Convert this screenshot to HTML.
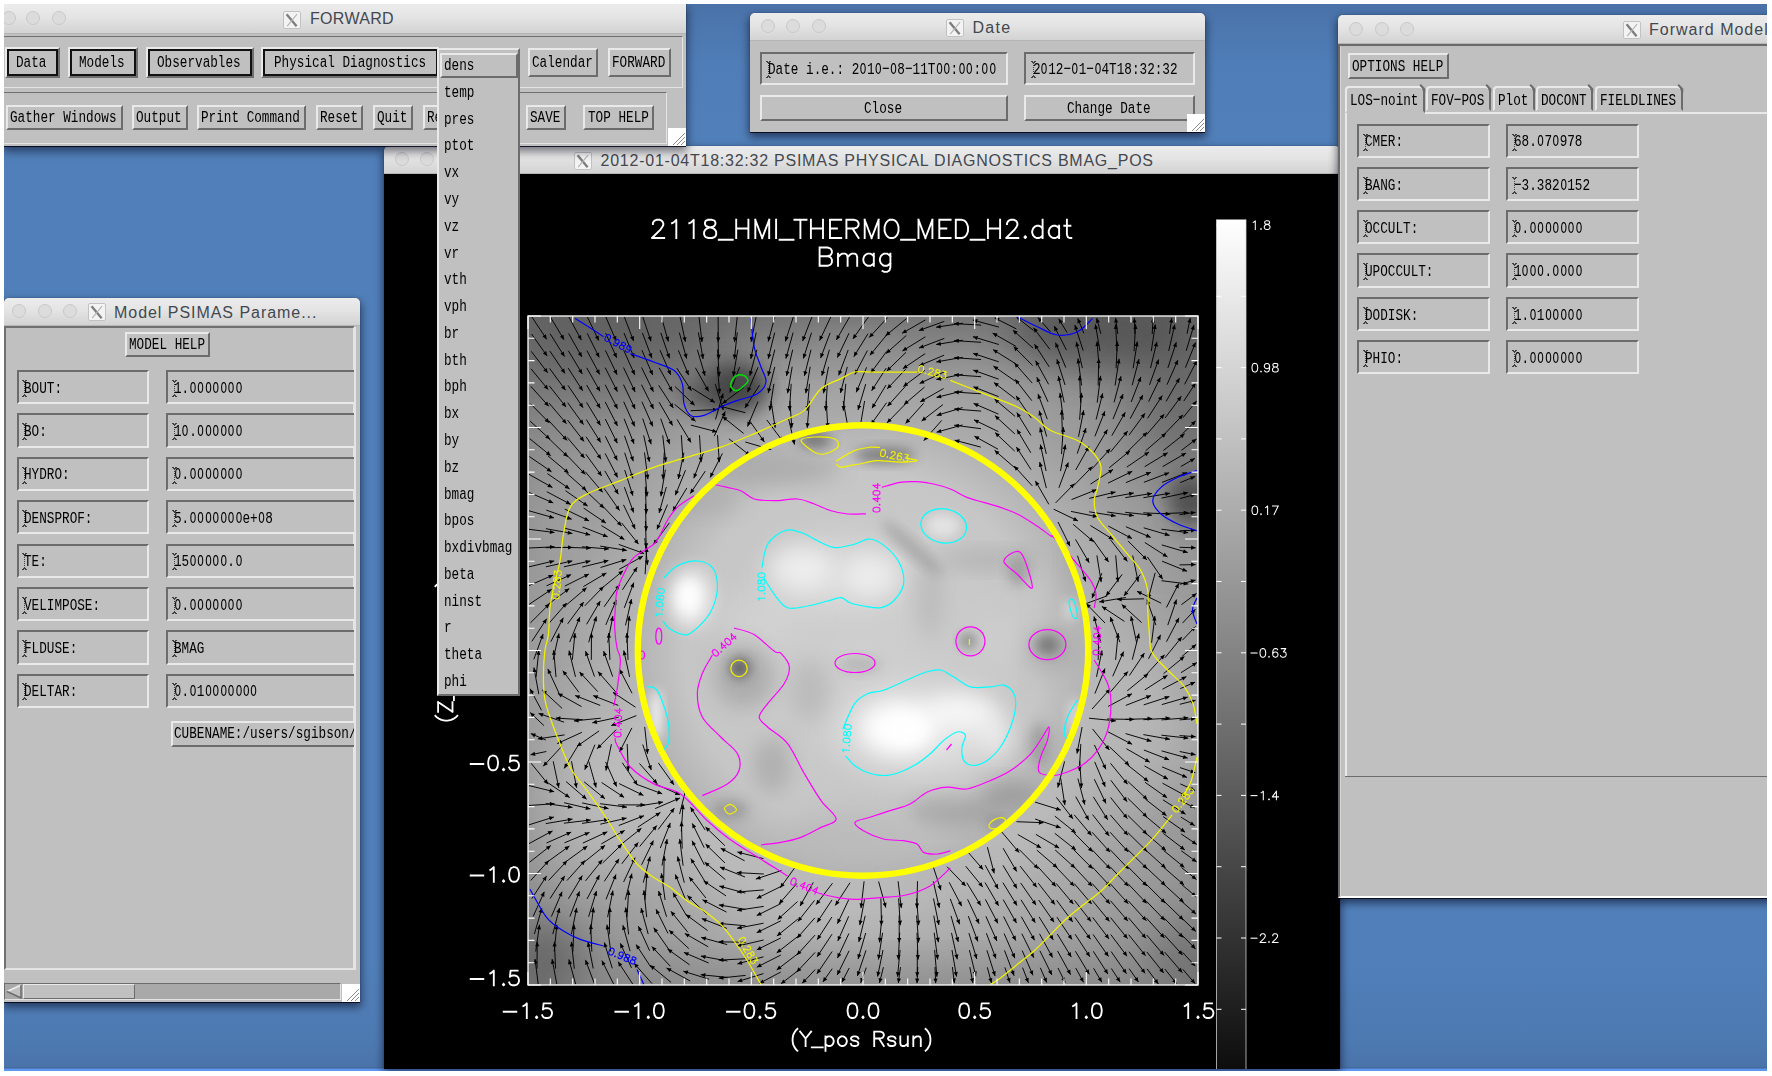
<!DOCTYPE html>
<html><head><meta charset="utf-8"><title>FORWARD</title>
<style>
*{box-sizing:border-box;margin:0;padding:0}
html,body{width:1772px;height:1076px;overflow:hidden;background:#fff}
#desk{position:absolute;left:4px;top:4px;width:1763px;height:1067px;overflow:hidden;
 background:linear-gradient(#4a72a9 0px,#4f7db7 60px,#517fb9 120px,#517fb9 960px,#4d79b1 1040px,#4a73a9 1063px,#3f6297 1064px,#5e98ee 1065px,#5e98ee 1067px);}
.win{position:absolute;background:#c0c0c0;box-shadow:0 1px 0 rgba(0,0,20,.8),0 4px 9px 1px rgba(0,0,20,.55),0 0 1px rgba(0,0,0,.6)}
.tb{position:absolute;left:0;top:0;background:linear-gradient(#ececec,#e4e4e4 45%,#d3d3d3);border-bottom:1px solid #b5b5b5}
.circ{position:absolute;width:14px;height:14px;border-radius:50%;background:#dcdcdc;border:1px solid #c9c9c9}
.xi{position:absolute}
.tt{position:absolute;top:0;font:16px "Liberation Sans",sans-serif;color:#434850;white-space:pre}
.t{position:absolute;font:17.4px/19px "Liberation Mono",monospace;color:#000;white-space:pre;display:inline-block;transform:scaleX(.729);transform-origin:0 50%}
.z{display:inline-block;transform:scaleX(.86)}
.btn,.fld,.mbtn,.frm,.frm2{position:absolute;background:#c0c0c0;border:2px solid}
.btn{border-color:#e9e9e9 #6c6c6c #6c6c6c #e9e9e9}
.fld{border-color:#6c6c6c #e9e9e9 #e9e9e9 #6c6c6c}
.mbtn{border-color:#e9e9e9 #707070 #707070 #e9e9e9;box-shadow:inset 0 0 0 2px #111}
.frm{border-color:#707070 #e4e4e4 #e4e4e4 #707070;border-width:1.5px}
.cur{position:absolute;width:5px;height:17px;opacity:.8;background:
 repeating-linear-gradient(#222 0 1px,transparent 1px 2px) 2px 2px/1px 13px no-repeat,
 linear-gradient(#222,#222) 0 0/2px 1px no-repeat,linear-gradient(#222,#222) 3px 0/2px 1px no-repeat,
 linear-gradient(#222,#222) 1px 1px/3px 1px no-repeat,
 linear-gradient(#222,#222) 1px 15px/3px 1px no-repeat,
 linear-gradient(#222,#222) 0 16px/2px 1px no-repeat,linear-gradient(#222,#222) 3px 16px/2px 1px no-repeat}
.tab{position:absolute;background:#c0c0c0;border:2px solid;border-color:#e9e9e9 #6c6c6c transparent #e9e9e9;border-radius:4px 6px 0 0}
.tab.sel{border-bottom-color:#c0c0c0;z-index:3}
</style></head><body><div id="desk">
<div class="win" style="left:380.0px;top:142.0px;width:956.0px;height:922.4px;border-radius:5px 5px 0 0"><div class="tb" style="width:956px;height:28px;border-radius:5px 5px 0 0"><span class="circ" style="left:10.5px;top:6.4px"></span><span class="circ" style="left:36.0px;top:6.4px"></span><span class="circ" style="left:61.5px;top:6.4px"></span><svg class="xi" style="left:190.0px;top:5.5px" width="18" height="18" viewBox="0 0 18 18"><rect x="0.5" y="0.5" width="17" height="17" rx="1.5" fill="#f3f3f3" stroke="#c2c2c2"/><path d="M3.6 3.2L13.6 15.2" stroke="#7d7d7d" stroke-width="2.3" fill="none"/><path d="M14 3.2L4.2 15.2" stroke="#b4b4b4" stroke-width="1.1" fill="none"/></svg><span class="tt" style="left:216.5px;line-height:29px;letter-spacing:0.76px">2012-01-04T18:32:32 PSIMAS PHYSICAL DIAGNOSTICS BMAG_POS</span></div><div style="position:absolute;left:0;top:28px;width:956px;height:895px;background:#000;overflow:hidden"><svg style="position:absolute;left:0;top:0" width="954" height="895" viewBox="384 174 954 895" font-family="Liberation Sans, sans-serif"><defs><filter id="b6" x="-50%" y="-50%" width="200%" height="200%"><feGaussianBlur stdDeviation="6"/></filter><filter id="b10" x="-50%" y="-50%" width="200%" height="200%"><feGaussianBlur stdDeviation="10"/></filter><filter id="b18" x="-50%" y="-50%" width="200%" height="200%"><feGaussianBlur stdDeviation="18"/></filter><filter id="b30" x="-50%" y="-50%" width="200%" height="200%"><feGaussianBlur stdDeviation="30"/></filter><radialGradient id="bg" gradientUnits="userSpaceOnUse" cx="863.0" cy="690.5" r="520"><stop offset="0.42" stop-color="#bababa"/><stop offset="0.6" stop-color="#a0a0a0"/><stop offset="0.8" stop-color="#8a8a8a"/><stop offset="1" stop-color="#6c6c6c"/></radialGradient><radialGradient id="dk" gradientUnits="userSpaceOnUse" cx="863.0" cy="650.5" r="223.2"><stop offset="0" stop-color="#cfcfcf"/><stop offset="0.8" stop-color="#c6c6c6"/><stop offset="1" stop-color="#b4b4b4"/></radialGradient><clipPath id="cpl"><rect x="528.0" y="316.0" width="670.0" height="669.0"/></clipPath><clipPath id="cdk"><circle cx="863.0" cy="650.5" r="223.2"/></clipPath><linearGradient id="cb" x1="0" y1="0" x2="0" y2="1"><stop offset="0" stop-color="#fff"/><stop offset="1" stop-color="#0a0a0a"/></linearGradient></defs><g clip-path="url(#cpl)"><rect x="528.0" y="316.0" width="670.0" height="669.0" fill="url(#bg)"/><ellipse cx="735" cy="388" rx="34" ry="26" fill="#3c3c3c" opacity="0.9" filter="url(#b10)"/><ellipse cx="700" cy="395" rx="22" ry="16" fill="#484848" opacity="0.6" filter="url(#b10)"/><ellipse cx="1190" cy="500" rx="22" ry="26" fill="#404040" opacity="0.8" filter="url(#b10)"/><ellipse cx="1100" cy="335" rx="90" ry="36" fill="#484848" opacity="0.65" filter="url(#b18)"/><ellipse cx="620" cy="350" rx="110" ry="50" fill="#505050" opacity="0.55" filter="url(#b30)"/><ellipse cx="863" cy="300" rx="380" ry="40" fill="#484848" opacity="0.5" filter="url(#b30)"/><ellipse cx="1180" cy="400" rx="50" ry="80" fill="#505050" opacity="0.5" filter="url(#b30)"/><ellipse cx="545" cy="960" rx="40" ry="40" fill="#4c4c4c" opacity="0.5" filter="url(#b18)"/><ellipse cx="600" cy="800" rx="55" ry="80" fill="#c8c8c8" opacity="0.6" filter="url(#b30)"/><ellipse cx="1150" cy="720" rx="50" ry="70" fill="#c4c4c4" opacity="0.55" filter="url(#b30)"/><ellipse cx="1000" cy="920" rx="90" ry="50" fill="#a8a8a8" opacity="0.4" filter="url(#b30)"/><ellipse cx="560" cy="520" rx="30" ry="60" fill="#a4a4a4" opacity="0.4" filter="url(#b18)"/><ellipse cx="1190" cy="960" rx="40" ry="40" fill="#5a5a5a" opacity="0.4" filter="url(#b18)"/><ellipse cx="860" cy="350" rx="50" ry="22" fill="#9a9a9a" opacity="0.3" filter="url(#b18)"/><ellipse cx="863" cy="1000" rx="300" ry="30" fill="#606060" opacity="0.4" filter="url(#b30)"/></g><g clip-path="url(#cdk)"><circle cx="863.0" cy="650.5" r="225.2" fill="url(#dk)"/><ellipse cx="690" cy="598" rx="20" ry="28" fill="#fff" opacity="0.9" filter="url(#b10)"/><ellipse cx="688" cy="596" rx="10" ry="14" fill="#fff" opacity="0.8" filter="url(#b6)"/><ellipse cx="800" cy="568" rx="30" ry="22" fill="#fff" opacity="0.5" filter="url(#b10)"/><ellipse cx="872" cy="575" rx="26" ry="22" fill="#fff" opacity="0.45" filter="url(#b10)"/><ellipse cx="835" cy="575" rx="70" ry="28" fill="#fff" opacity="0.4" filter="url(#b18)"/><ellipse cx="943" cy="526" rx="17" ry="12" fill="#fff" opacity="0.5" filter="url(#b6)"/><ellipse cx="900" cy="728" rx="38" ry="26" fill="#fff" opacity="0.95" filter="url(#b10)"/><ellipse cx="905" cy="730" rx="20" ry="14" fill="#fff" opacity="0.8" filter="url(#b6)"/><ellipse cx="960" cy="712" rx="36" ry="18" fill="#fff" opacity="0.7" filter="url(#b10)"/><ellipse cx="995" cy="735" rx="14" ry="22" fill="#fff" opacity="0.5" filter="url(#b10)"/><ellipse cx="920" cy="730" rx="85" ry="42" fill="#fff" opacity="0.45" filter="url(#b18)"/><ellipse cx="656" cy="715" rx="6" ry="26" fill="#fff" opacity="0.85" filter="url(#b6)"/><ellipse cx="1070" cy="610" rx="6" ry="11" fill="#fff" opacity="0.5" filter="url(#b6)"/><ellipse cx="1075" cy="718" rx="7" ry="20" fill="#fff" opacity="0.5" filter="url(#b6)"/><ellipse cx="760" cy="620" rx="40" ry="25" fill="#ddd" opacity="0.5" filter="url(#b18)"/><ellipse cx="1000" cy="640" rx="25" ry="30" fill="#d8d8d8" opacity="0.4" filter="url(#b18)"/><ellipse cx="744" cy="676" rx="30" ry="32" fill="#8c8c8c" opacity="0.45" filter="url(#b10)"/><ellipse cx="1050" cy="650" rx="26" ry="24" fill="#999" opacity="0.4" filter="url(#b10)"/><ellipse cx="1075" cy="560" rx="12" ry="40" fill="#a0a0a0" opacity="0.45" filter="url(#b10)"/><ellipse cx="740" cy="668" rx="10" ry="10" fill="#555" opacity="0.9" filter="url(#b6)"/><ellipse cx="968" cy="641" rx="8" ry="8" fill="#777" opacity="0.8" filter="url(#b6)"/><ellipse cx="1048" cy="645" rx="12" ry="10" fill="#707070" opacity="0.85" filter="url(#b6)"/><ellipse cx="815" cy="440" rx="16" ry="9" fill="#6a6a6a" opacity="0.8" filter="url(#b6)"/><ellipse cx="885" cy="455" rx="30" ry="8" fill="#707070" opacity="0.8" filter="url(#b6)"/><ellipse cx="1018" cy="570" rx="10" ry="16" fill="#909090" opacity="0.7" filter="url(#b6)"/><ellipse cx="955" cy="812" rx="48" ry="14" fill="#909090" opacity="0.55" filter="url(#b10)"/><ellipse cx="1010" cy="795" rx="30" ry="14" fill="#8a8a8a" opacity="0.6" filter="url(#b10)"/><ellipse cx="772" cy="765" rx="18" ry="28" fill="#989898" opacity="0.5" filter="url(#b10)"/><ellipse cx="730" cy="810" rx="18" ry="10" fill="#888" opacity="0.6" filter="url(#b6)"/><ellipse cx="780" cy="470" rx="60" ry="14" fill="#a4a4a4" opacity="0.7" filter="url(#b10)"/><ellipse cx="990" cy="560" rx="50" ry="10" fill="#a0a0a0" opacity="0.5" filter="url(#b10)"/><ellipse cx="700" cy="500" rx="40" ry="14" fill="#a8a8a8" opacity="0.5" filter="url(#b10)"/><ellipse cx="1040" cy="745" rx="10" ry="22" fill="#8c8c8c" opacity="0.6" filter="url(#b6)"/><ellipse cx="860" cy="665" rx="22" ry="8" fill="#a0a0a0" opacity="0.5" filter="url(#b6)"/><ellipse cx="997" cy="823" rx="10" ry="6" fill="#808080" opacity="0.7" filter="url(#b6)"/><ellipse cx="810" cy="690" rx="20" ry="30" fill="#a8a8a8" opacity="0.45" filter="url(#b10)"/><ellipse cx="930" cy="600" rx="14" ry="40" fill="#a8a8a8" opacity="0.4" filter="url(#b10)"/><ellipse cx="850" cy="830" rx="60" ry="20" fill="#b0b0b0" opacity="0.4" filter="url(#b10)"/><ellipse cx="912" cy="548" rx="40" ry="7" transform="rotate(42 912 548)" fill="#8e8e8e" opacity=".55" filter="url(#b6)"/><ellipse cx="700" cy="470" rx="60" ry="9" transform="rotate(-28 700 470)" fill="#9c9c9c" opacity=".5" filter="url(#b6)"/></g><g clip-path="url(#cpl)"><path d="M531.9 317.0L546.7 339.3M550.4 317.0L564.0 339.7M568.9 317.0L581.4 340.1M587.4 317.0L598.7 340.5M605.9 317.0L616.1 340.8M624.4 317.0L633.6 341.1M642.8 317.0L651.0 341.3M661.4 317.0L668.3 341.5M680.1 317.0L685.4 341.8M699.0 317.0L702.0 342.0M718.1 317.0L718.3 342.1M737.2 317.0L734.5 342.0M756.1 317.0L751.1 341.8M774.8 317.0L768.2 341.6M793.3 317.0L785.4 341.4M811.9 317.0L802.6 341.0M830.7 317.0L819.6 340.6M849.5 317.0L836.4 339.9M868.4 317.0L852.9 338.9M887.5 317.6L869.2 337.5M906.5 318.6L885.6 335.7M925.5 319.9L902.1 333.3M944.3 321.4L918.9 330.5M962.9 323.2L936.2 327.2M981.1 325.1L954.1 323.6M998.9 327.1L972.8 320.0M1016.3 328.9L994.6 317.8M1033.4 330.4L1016.5 317.0M1050.3 331.7L1037.9 317.4M1067.1 332.6L1058.7 318.8M1083.9 333.3L1077.7 318.3M1100.8 333.7L1096.7 318.1M1117.8 333.9L1115.6 317.9M1134.9 334.0L1134.4 317.8M1152.2 334.0L1153.1 317.8M1169.5 333.9L1171.8 317.9M1187.0 333.8L1190.3 318.0M531.6 334.0L547.2 356.1M550.1 333.7L564.5 356.6M568.6 333.5L581.9 357.0M587.2 333.3L599.2 357.4M605.6 333.1L616.7 357.7M624.0 333.0L634.2 358.0M642.4 332.9L651.9 358.2M660.8 332.8L669.5 358.3M679.3 332.6L686.7 358.6M698.4 332.4L703.1 359.0M717.8 332.3L718.7 359.3M737.3 332.3L734.3 359.2M756.2 332.5L750.8 358.9M774.7 332.6L768.2 358.8M793.1 332.6L785.9 358.6M811.5 332.7L803.4 358.5M830.1 332.9L820.6 358.1M849.0 333.2L837.4 357.6M868.0 333.7L853.8 356.7M887.1 334.4L869.9 355.3M906.3 335.5L886.1 353.4M925.4 336.8L902.4 351.0M944.3 338.4L919.0 348.0M962.9 340.2L936.2 344.5M981.1 342.3L954.1 340.6M998.8 344.5L972.9 336.7M1016.1 346.4L992.6 333.1M1033.0 348.0L1012.9 330.1M1049.8 349.3L1033.5 327.8M1066.5 350.1L1054.2 326.1M1083.2 350.7L1074.9 325.0M1100.0 351.0L1095.4 324.4M1117.0 351.2L1115.6 324.2M1134.1 351.2L1135.6 324.2M1151.3 351.1L1155.3 324.4M1168.7 350.9L1174.8 324.6M1186.2 350.8L1194.0 324.9M531.3 351.4L547.7 372.8M549.9 351.1L565.0 373.4M568.4 350.8L582.3 373.9M586.9 350.6L599.7 374.4M605.4 350.4L617.1 374.7M623.7 350.3L634.8 374.9M641.9 350.2L652.7 375.0M660.0 350.2L670.8 375.0M678.3 350.2L688.6 375.1M697.4 349.8L705.0 375.7M717.6 349.5L719.2 376.4M737.9 349.6L733.2 376.2M756.8 349.8L749.8 375.8M774.8 349.7L768.1 375.9M792.7 349.7L786.5 376.0M811.0 349.7L804.4 375.9M829.4 349.8L821.8 375.7M848.2 350.0L838.7 375.3M867.4 350.5L854.9 374.4M886.7 351.3L870.7 373.1M906.0 352.3L886.7 371.1M925.2 353.6L902.8 368.7M944.1 355.2L919.2 365.7M962.8 357.3L936.3 361.9M981.1 359.5L954.1 357.7M998.7 361.8L973.1 353.4M1015.9 363.9L993.0 349.6M1032.7 365.6L1013.6 346.5M1049.2 366.8L1034.5 344.2M1065.8 367.6L1055.5 342.7M1082.4 368.1L1076.3 341.8M1099.2 368.3L1097.0 341.4M1116.1 368.3L1117.3 341.4M1133.2 368.2L1137.3 341.5M1150.5 368.1L1156.9 341.8M1167.9 367.9L1176.3 342.2M1185.4 367.7L1195.5 342.6M531.0 368.8L548.2 389.6M549.6 368.4L565.5 390.2M568.2 368.1L582.7 390.8M586.7 367.8L600.0 391.3M605.2 367.6L617.4 391.7M623.5 367.5L635.1 391.9M641.6 367.5L653.4 391.8M659.2 367.8L672.3 391.4M676.8 368.1L691.5 390.8M695.4 367.8L708.6 391.3M717.3 366.6L719.7 393.5M739.6 367.2L729.9 392.4M758.0 367.3L747.6 392.2M774.8 366.9L768.2 393.1M792.2 366.7L787.6 393.3M810.2 366.7L805.8 393.3M828.5 366.8L823.5 393.3M847.3 366.9L840.5 393.0M866.6 367.3L856.3 392.3M886.2 368.1L871.6 390.8M905.7 369.2L887.2 388.8M924.9 370.4L903.3 386.5M944.0 372.0L919.6 383.5M962.8 374.2L936.3 379.5M981.1 376.7L954.1 374.8M998.7 379.2L973.2 370.1M1015.6 381.4L993.4 366.0M1032.2 383.1L1014.4 362.9M1048.6 384.3L1035.6 360.7M1065.1 385.0L1056.9 359.3M1081.6 385.4L1078.0 358.6M1098.2 385.5L1098.7 358.5M1115.1 385.4L1119.1 358.7M1132.2 385.2L1139.0 359.1M1149.5 384.9L1158.6 359.5M1167.0 384.7L1177.9 360.0M1184.6 384.4L1197.0 360.4M530.7 386.2L548.8 406.3M549.3 385.8L566.0 407.0M568.0 385.4L583.1 407.7M586.6 385.0L600.3 408.3M605.2 384.8L617.5 408.8M623.5 384.7L635.1 409.0M641.5 384.7L653.5 408.9M658.7 385.3L673.3 407.9M675.1 386.6L694.6 405.3M692.0 388.2L714.9 402.5M715.3 384.2L723.3 410.0M743.8 387.5L722.2 403.7M759.5 385.2L744.9 408.0M773.9 383.9L769.7 410.5M791.2 383.8L789.4 410.7M809.5 383.8L807.1 410.7M827.4 383.8L825.6 410.7M845.8 383.8L843.3 410.7M865.7 384.1L858.0 410.0M886.0 385.1L872.0 408.2M905.5 386.2L887.5 406.2M924.5 387.1L904.0 404.6M943.6 388.5L920.2 401.9M962.7 390.9L936.5 397.4M981.1 393.8L954.1 392.0M998.6 396.6L973.4 386.8M1015.4 398.9L993.9 382.5M1031.8 400.7L1015.2 379.3M1048.0 401.8L1036.8 377.2M1064.2 402.4L1058.4 376.1M1080.6 402.6L1079.7 375.7M1097.2 402.6L1100.6 375.8M1114.1 402.3L1121.0 376.2M1131.2 402.0L1140.9 376.8M1148.6 401.7L1160.4 377.4M1166.1 401.4L1179.6 378.0M1183.8 401.1L1195.6 383.0M530.4 403.6L549.4 422.9M549.1 403.1L566.5 423.7M567.7 402.7L583.5 424.6M586.5 402.3L600.5 425.4M605.2 401.9L617.5 426.0M623.7 401.7L634.7 426.4M641.9 401.7L652.8 426.4M659.1 402.2L672.6 425.5M674.6 404.4L695.6 421.3M690.6 410.7L717.6 409.6M715.5 419.4L723.1 393.5M745.4 412.7L719.2 406.0M758.0 401.6L747.5 426.5M771.0 401.0L775.2 427.7M789.9 400.9L791.8 427.9M809.5 400.9L807.2 427.8M826.2 400.9L827.8 427.9M843.2 401.0L848.0 427.6M864.6 401.0L860.0 427.6M886.6 402.7L870.9 424.6M905.8 403.6L887.0 422.9M923.6 403.3L905.6 423.4M942.9 404.6L921.6 421.1M962.6 407.6L936.7 415.4M981.1 411.1L954.1 409.0M998.4 414.1L973.6 403.4M1015.1 416.4L994.5 399.0M1031.3 418.1L1016.1 395.9M1047.3 419.2L1038.0 393.9M1063.4 419.7L1060.0 392.9M1079.6 419.8L1081.6 392.8M1096.1 419.5L1102.7 393.3M1113.0 419.1L1123.1 394.1M1130.2 418.7L1142.9 394.9M1147.6 418.3L1162.3 395.6M1165.2 417.9L1181.3 396.2M1183.0 417.7L1196.6 400.9M530.1 421.1L550.0 439.3M548.7 420.6L567.1 440.4M567.5 420.0L584.0 441.4M586.3 419.5L600.7 442.4M605.3 419.0L617.3 443.2M624.1 418.7L634.0 443.8M642.7 418.5L651.2 444.2M660.7 418.6L669.6 444.1M677.0 419.4L691.0 442.5M690.9 425.1L717.0 431.9M714.3 436.1L725.2 411.4M743.6 433.4L722.5 416.6M748.9 419.8L764.4 441.9M766.8 419.9L783.0 441.6M788.5 418.3L794.5 444.6M941.7 420.4L923.8 440.7M962.6 424.9L936.6 432.2M981.0 428.7L954.2 425.2M998.3 431.6L974.0 419.8M1014.8 433.9L994.9 415.6M1030.9 435.5L1016.8 412.6M1046.7 436.6L1039.2 410.7M1062.5 436.9L1061.6 410.0M1078.5 436.8L1083.7 410.3M1094.9 436.3L1104.9 411.2M1111.8 435.7L1125.3 412.3M1129.0 435.1L1145.0 413.3M1146.6 434.7L1164.2 414.2M1164.3 434.3L1183.0 414.8M1182.2 434.1L1195.7 420.9M529.7 438.7L550.7 455.7M548.4 438.1L567.8 456.8M567.2 437.4L584.6 458.0M586.1 436.8L601.1 459.3M605.3 436.2L617.3 460.4M624.5 435.7L633.3 461.2M643.7 435.4L649.4 461.8M662.7 435.3L665.8 462.1M681.3 435.2L683.1 462.2M699.5 435.2L701.1 462.2M717.5 435.2L719.3 462.2M728.9 438.8L750.0 455.6M745.3 442.0L771.2 449.6M980.8 447.1L954.7 440.2M998.0 449.2L974.4 436.2M1014.7 451.1L995.1 432.6M1030.8 452.8L1017.0 429.6M1046.3 453.9L1040.0 427.6M1061.5 454.1L1063.4 427.1M1077.2 453.6L1086.0 428.1M1093.6 452.8L1107.4 429.6M1110.5 452.0L1127.7 431.1M1127.9 451.3L1147.1 432.3M1145.6 450.8L1166.0 433.2M1163.4 450.5L1184.6 433.7M1181.4 450.4L1196.5 438.9M529.3 456.5L551.5 471.7M547.9 455.8L568.6 473.1M566.7 455.0L585.4 474.5M585.8 454.2L601.7 476.0M605.1 453.4L617.6 477.4M624.7 452.8L632.9 478.5M644.5 452.4L647.9 479.2M664.3 452.4L663.0 479.3M683.9 452.6L678.3 479.0M703.4 453.0L693.8 478.2M722.4 453.4L710.2 477.5M1015.0 468.0L994.6 450.3M1031.1 469.7L1016.4 447.1M1046.1 471.0L1040.4 444.6M1060.5 471.1L1065.4 444.6M1075.7 470.0L1088.9 446.5M1092.1 468.8L1110.2 448.8M1109.2 467.8L1130.1 450.7M1126.8 467.1L1149.1 451.9M1144.7 466.7L1167.7 452.7M1162.7 466.6L1186.0 453.0M1180.8 466.6L1194.8 458.4M529.0 474.3L552.4 487.5M547.4 473.6L569.6 488.9M566.2 472.7L586.4 490.6M585.3 471.8L602.7 492.3M604.8 470.8L618.3 494.2M624.7 470.0L632.9 495.7M645.0 469.5L647.0 496.5M665.4 469.6L660.9 496.3M685.5 470.2L675.3 495.2M705.3 471.1L690.3 493.5M1032.3 485.9L1014.2 466.0M1046.4 488.1L1039.7 462.0M1058.9 487.8L1068.3 462.5M1073.7 485.7L1092.5 466.4M1090.5 484.1L1113.1 469.4M1108.0 483.1L1132.3 471.3M1125.9 482.6L1150.9 472.3M1143.9 482.3L1169.1 472.7M1162.0 482.4L1187.2 472.6M1180.2 482.6L1195.2 476.4M529.0 492.4L553.2 502.9M546.8 491.7L570.7 504.4M565.5 490.7L587.7 506.1M584.5 489.6L604.1 508.2M604.1 488.4L619.5 510.5M624.4 487.2L633.6 512.6M645.3 486.7L646.4 513.7M666.3 487.0L659.1 513.0M686.8 488.0L672.8 511.1M1048.8 504.3L1035.4 480.9M1055.6 502.9L1074.5 483.6M1071.5 499.6L1096.6 489.6M1089.2 498.4L1115.5 492.0M1107.2 497.8L1133.8 493.0M1125.3 497.6L1152.0 493.4M1143.4 497.7L1170.0 493.2M1161.6 498.1L1188.0 492.5M1179.8 498.6L1195.5 494.4M529.0 510.8L554.0 517.9M546.3 510.1L571.7 519.2M564.8 509.1L589.1 520.9M583.6 508.0L605.9 523.1M603.0 506.4L621.6 526.0M623.5 504.8L635.2 529.1M645.4 503.8L646.2 530.8M667.5 504.6L657.0 529.4M1053.7 509.2L1078.0 520.9M1071.0 511.4L1097.5 516.8M1089.1 511.8L1115.7 516.0M1107.2 512.0L1133.9 515.7M1125.2 512.3L1152.1 515.2M1143.3 512.8L1170.3 514.1M1161.4 513.6L1188.4 512.6M1179.6 514.6L1195.6 512.3M529.0 529.3L554.5 532.5M545.9 528.7L572.4 533.5M564.1 528.0L590.2 534.9M582.6 527.0L607.7 536.8M601.4 525.5L624.4 539.6M621.7 523.0L638.5 544.1M645.4 521.0L646.3 548.0M669.4 522.8L653.4 544.6M1058.0 522.0L1070.0 546.2M1073.1 524.3L1093.7 541.8M1090.4 525.5L1113.3 539.6M1108.2 526.0L1132.0 538.6M1125.9 526.7L1150.7 537.4M1143.7 527.8L1169.6 535.4M1161.5 529.2L1188.2 532.7M1179.5 530.7L1195.7 530.2M529.0 548.0L554.6 546.8M545.7 547.7L572.7 547.4M563.8 547.3L590.8 548.1M582.0 546.8L608.9 549.0M600.2 546.1L626.8 550.4M618.7 544.4L644.1 553.5M644.8 538.2L647.4 565.0M1075.5 539.4L1089.2 562.7M1092.9 539.9L1108.6 561.9M1110.7 540.1L1127.4 561.4M1128.0 540.9L1147.0 560.0M1144.8 542.5L1167.5 557.0M1161.8 544.9L1187.7 552.5M1179.5 547.3L1195.7 547.8M529.0 566.8L554.2 560.9M545.9 566.8L572.3 560.9M564.0 566.8L590.4 560.9M582.2 567.0L608.4 560.6M600.5 567.5L626.3 559.5M619.3 569.3L642.9 556.2M645.1 574.2L646.8 547.2M1077.5 555.7L1085.6 581.5M1096.9 555.4L1101.2 582.1M1115.7 555.3L1118.0 582.2M1132.7 555.5L1138.2 581.9M1147.4 556.9L1162.7 579.2M1162.1 561.2L1187.1 571.3M1179.5 564.9L1195.7 564.6M529.0 585.6L553.2 575.0M546.6 585.8L571.1 574.6M564.8 586.1L588.9 574.0M583.3 586.7L606.4 572.9M602.2 587.9L623.1 570.8M622.4 589.8L637.2 567.2M1101.9 573.1L1092.0 598.2M1122.2 574.3L1106.0 595.9M1140.3 574.4L1124.0 595.9M1155.2 572.8L1148.2 598.8M1161.5 580.7L1188.3 584.0M1179.8 584.3L1195.5 580.1M529.2 604.3L551.6 589.3M547.6 604.7L569.3 588.6M566.1 605.2L586.6 587.7M584.8 605.8L603.6 586.4M604.1 606.8L619.6 584.7M624.3 607.9L633.8 582.6M1107.3 595.8L1081.9 605.1M1125.8 597.5L1099.2 601.9M1144.1 598.8L1117.1 599.5M1161.2 603.2L1137.0 591.3M1166.5 607.4L1178.8 583.4M1181.4 604.7L1196.5 593.4M530.4 622.9L549.5 603.8M549.0 623.3L566.7 603.0M567.7 623.8L583.7 602.1M586.6 624.3L600.3 601.1M605.8 624.9L616.3 600.0M625.5 625.4L631.5 599.1M1105.0 623.0L1086.2 603.6M1124.4 621.4L1101.9 606.5M1141.6 622.6L1121.7 604.4M1155.9 625.1L1146.9 599.6M1167.8 625.1L1176.5 599.6M1182.5 623.1L1195.4 609.3M531.9 641.3L546.7 618.7M550.8 641.7L563.3 617.8M569.7 642.1L579.9 617.1M588.7 642.4L596.4 616.5M607.7 642.6L612.9 616.1M626.7 642.7L629.3 615.9M1100.8 642.5L1094.0 616.4M1119.9 642.2L1110.3 616.9M1136.6 642.6L1131.0 616.2M1151.6 642.7L1154.9 615.9M1166.5 641.7L1179.0 617.8M1182.4 640.2L1195.5 626.5M533.8 659.4L543.1 634.0M553.1 659.7L559.0 633.4M572.3 659.9L575.0 633.0M591.3 659.9L591.5 633.0M609.9 659.9L608.7 633.0M628.0 659.9L626.9 633.0M1098.2 659.9L1098.8 633.0M1115.6 659.9L1118.2 633.0M1132.3 659.6L1139.0 633.5M1148.5 658.9L1160.6 634.8M1164.9 657.8L1181.9 636.9M1181.8 656.6L1196.1 644.4M536.1 677.1L538.8 650.2M556.0 677.1L553.7 650.2M575.5 676.8L569.0 650.6M594.5 676.6L585.5 651.1M612.7 676.6L603.6 651.1M629.6 676.9L623.8 650.5M1096.5 676.9L1102.0 650.5M1112.7 676.3L1123.6 651.6M1129.4 675.5L1144.4 653.1M1146.3 674.6L1164.6 654.7M1163.5 673.7L1184.4 656.5M1181.0 672.7L1196.9 662.6M538.8 694.1L533.9 667.5M559.1 693.4L547.8 668.9M578.9 692.4L562.8 670.7M597.8 691.7L579.5 671.9M615.7 691.9L597.9 671.6M632.0 693.2L619.5 669.2M1094.9 693.6L1105.0 668.5M1110.4 692.0L1127.9 671.5M1127.3 690.8L1148.2 673.7M1144.8 689.9L1167.5 675.3M1162.5 689.2L1186.4 676.6M1180.3 688.6L1195.1 682.1M541.5 710.3L530.1 688.8M562.1 708.4L542.3 690.0M581.5 706.6L557.9 693.4M600.2 705.4L575.1 695.5M618.3 705.4L593.1 695.6M635.5 707.2L612.9 692.3M1092.1 709.0L1110.1 688.9M1108.2 706.4L1132.0 693.7M1125.8 705.4L1151.0 695.6M1143.7 704.9L1169.4 696.5M1161.8 704.6L1187.7 697.1M1179.8 704.3L1195.5 700.3M543.9 725.6L530.2 712.6M564.1 722.2L538.6 713.4M582.7 719.7L555.8 718.1M600.8 718.2L573.9 720.9M618.7 717.2L592.3 722.8M636.4 715.6L611.3 725.6M1089.0 718.2L1115.9 720.9M1107.1 719.0L1134.1 719.4M1125.2 719.4L1152.2 718.6M1143.3 719.7L1170.2 718.1M1161.4 719.9L1188.3 717.7M1179.5 719.9L1195.7 718.5M545.8 740.0L530.8 733.6M564.5 734.9L537.8 738.9M581.9 732.3L557.3 743.6M599.1 730.9L577.0 746.3M616.2 729.6L597.1 748.7M631.9 727.9L619.5 751.9M644.7 726.9L647.6 753.7M1082.1 727.0L1077.0 753.5M1092.5 728.9L1109.4 749.9M1108.1 731.9L1132.1 744.3M1125.6 733.6L1151.5 741.2M1143.4 734.6L1170.0 739.3M1161.4 735.2L1188.3 738.2M1179.5 735.6L1195.7 736.7M546.3 751.5L530.5 754.8M561.6 746.5L543.2 766.3M578.2 745.3L564.2 768.4M594.9 744.7L584.8 769.7M611.4 744.2L605.9 770.6M627.2 744.0L628.3 771.0M642.7 744.5L651.3 770.1M1080.8 744.0L1079.3 770.9M1094.4 744.9L1105.9 769.3M1109.6 746.9L1129.3 765.5M1126.4 748.7L1149.8 762.2M1143.9 750.0L1169.1 759.8M1161.7 750.9L1187.7 758.1M1179.7 751.5L1195.6 754.8M531.1 763.2L548.1 784.2M553.2 761.3L558.8 787.8M571.5 761.3L576.6 787.8M588.8 761.5L596.1 787.5M605.6 761.9L616.6 786.6M622.3 762.7L637.4 785.1M639.5 763.5L657.3 783.8M658.3 762.9L674.0 784.9M1064.6 761.4L1057.8 787.6M1079.7 761.1L1081.5 788.1M1094.7 761.9L1105.2 786.8M1110.5 763.3L1127.6 784.2M1127.2 764.7L1148.4 781.5M1144.5 765.9L1168.0 779.2M1162.1 766.9L1187.0 777.4M1180.0 767.6L1195.3 772.7M529.0 785.6L554.1 791.7M547.4 782.4L569.7 797.6M566.1 781.6L586.6 799.2M584.1 781.8L605.0 798.8M601.6 782.5L624.1 797.4M619.1 783.6L643.4 795.4M636.8 784.4L662.2 793.8M655.2 783.9L679.9 794.8M1060.7 778.4L1064.9 805.1M1077.9 778.6L1084.8 804.7M1094.3 779.2L1106.0 803.5M1110.8 780.2L1127.1 801.7M1127.7 781.3L1147.5 799.7M1145.0 782.3L1167.1 797.8M1162.5 783.2L1186.2 796.1M1180.3 783.9L1195.1 790.5M529.0 805.5L554.6 803.7M545.8 803.5L572.5 807.4M564.1 802.7L590.4 808.9M582.1 802.9L608.5 808.6M600.1 803.7L626.9 807.2M618.1 804.9L645.1 804.9M636.4 806.4L663.0 802.1M655.1 808.6L679.9 798.0M679.6 814.1L686.2 787.9M1035.1 802.1L1060.8 810.1M1056.4 797.4L1072.9 818.8M1075.7 796.6L1088.8 820.2M1093.4 796.9L1107.7 819.8M1110.6 797.5L1127.4 818.6M1127.9 798.3L1147.1 817.2M1145.3 799.1L1166.5 815.7M1162.9 799.8L1185.6 814.3M1180.6 800.4L1194.9 808.1M529.0 824.8L553.9 817.0M545.8 823.6L572.5 819.1M563.9 823.2L590.7 820.0M582.0 823.4L608.7 819.5M600.3 824.2L626.6 818.1M618.8 825.5L644.0 815.7M637.8 827.2L660.4 812.4M658.1 829.6L674.4 808.1M681.3 831.5L683.0 804.5M705.2 830.0L690.5 807.3M1016.5 821.7L1043.5 822.7M1035.1 819.0L1060.7 827.8M1054.8 816.1L1075.9 833.0M1074.2 814.8L1091.6 835.5M1092.6 814.6L1109.2 835.9M1110.3 814.9L1128.0 835.3M1127.9 815.4L1147.1 834.4M1145.5 816.0L1166.2 833.3M1163.1 816.6L1185.1 832.2M1180.9 817.1L1194.7 825.6M529.0 843.6L552.5 830.9M546.5 843.0L571.2 832.1M564.5 842.8L589.5 832.4M582.8 843.1L607.3 831.8M601.3 843.9L624.7 830.4M620.2 845.1L641.4 828.3M639.7 846.5L656.8 825.6M660.3 848.0L670.3 822.9M682.2 848.6L681.4 821.6M704.2 847.7L692.3 823.4M724.9 845.7L705.5 827.0M1001.8 832.0L1019.2 852.6M1017.8 834.5L1041.2 847.9M1035.9 834.4L1059.2 848.1M1054.8 833.3L1076.0 850.1M1073.6 832.5L1092.6 851.7M1092.1 832.2L1110.1 852.2M1110.1 832.2L1128.4 852.1M1127.9 832.6L1147.1 851.5M1145.6 833.0L1166.0 850.7M1163.3 833.4L1184.8 849.9M1181.1 833.9L1196.8 844.5M529.6 862.2L550.8 845.5M547.5 861.9L569.4 846.0M565.6 861.9L587.4 846.0M584.0 862.3L605.1 845.3M602.7 862.9L622.1 844.1M621.8 863.8L638.3 842.4M641.6 864.8L653.4 840.6M662.0 865.6L667.1 839.1M683.1 865.7L679.7 838.9M704.3 864.8L692.1 840.7M724.9 862.9L705.6 844.1M744.6 860.8L720.7 848.2M763.5 858.7L737.4 852.0M965.5 849.2L983.1 869.6M987.4 847.2L994.2 873.3M1003.1 848.2L1016.7 871.5M1019.3 849.6L1038.3 868.8M1036.9 850.2L1057.4 867.8M1055.2 850.0L1075.2 868.1M1073.6 849.6L1092.7 868.8M1091.9 849.5L1110.4 869.1M1110.0 849.5L1128.6 869.1M1127.9 849.7L1147.1 868.7M1145.7 850.0L1165.7 868.1M1163.5 850.4L1184.4 867.4M1181.3 850.8L1196.6 861.9M530.7 880.5L548.8 860.5M548.7 880.4L567.1 860.7M567.0 880.5L585.0 860.4M585.5 880.9L602.4 859.8M604.3 881.4L619.1 858.8M623.6 882.0L635.1 857.6M643.3 882.6L650.1 856.5M663.6 882.9L664.2 856.0M684.3 882.7L677.6 856.5M705.0 881.5L690.8 858.6M725.4 879.6L704.7 862.2M745.0 877.0L719.9 867.0M763.8 874.0L736.8 872.6M781.4 870.5L755.8 879.1M796.1 865.8L780.3 887.8M932.5 864.5L940.9 890.2M947.0 866.7L965.8 886.1M965.7 866.2L982.8 887.1M985.2 865.2L998.2 888.9M1003.0 865.4L1017.0 888.5M1020.1 866.1L1036.8 887.3M1037.7 866.5L1055.9 886.5M1055.7 866.6L1074.3 886.2M1073.9 866.6L1092.3 886.3M1092.0 866.6L1110.3 886.4M1110.0 866.6L1128.5 886.3M1128.0 866.8L1147.0 886.0M1145.8 867.0L1165.5 885.5M1163.7 867.3L1184.1 885.0M1181.5 867.6L1196.4 879.4M531.9 898.6L546.6 875.9M550.0 898.6L564.7 875.9M568.4 898.8L582.3 875.6M587.0 899.0L599.5 875.1M606.0 899.4L616.0 874.4M625.3 899.8L631.9 873.6M645.0 900.1L647.0 873.2M665.1 900.0L661.4 873.3M685.5 899.4L675.3 874.4M705.9 898.0L689.1 876.9M726.0 895.9L703.6 880.9M745.4 893.1L719.3 886.1M763.8 889.9L736.9 892.1M780.9 886.5L756.7 898.4M796.8 883.5L779.0 903.9M813.3 882.4L800.1 906.0M832.5 883.2L816.1 904.6M850.0 882.7L835.3 905.4M864.1 881.3L861.0 908.1M878.6 881.5L885.8 907.6M898.1 881.3L901.3 908.1M917.5 881.2L916.9 908.2M933.3 881.4L939.3 907.8M949.2 882.3L961.7 906.2M966.7 882.6L980.8 905.6M985.0 882.5L998.6 905.8M1002.9 882.6L1017.0 905.6M1020.6 882.9L1036.0 905.1M1038.3 883.2L1054.9 904.5M1056.1 883.4L1073.4 904.1M1074.2 883.5L1091.7 904.0M1092.2 883.5L1110.0 903.9M1110.2 883.6L1128.3 903.7M1128.1 883.8L1146.7 903.4M1146.0 884.0L1165.2 903.0M1163.9 884.3L1183.8 902.5M1181.7 884.6L1196.2 896.7M533.2 916.4L544.3 891.8M551.4 916.5L562.1 891.7M569.9 916.6L579.5 891.4M588.6 916.8L596.5 891.0M607.6 917.1L612.9 890.6M627.0 917.2L628.7 890.3M646.7 917.2L643.9 890.3M666.6 916.8L658.6 891.0M686.7 915.9L673.0 892.7M706.8 914.4L687.4 895.6M726.5 912.1L702.5 899.8M745.6 909.4L718.9 904.9M763.7 906.4L737.0 910.4M780.9 903.6L756.7 915.6M797.6 901.5L777.6 919.6M814.5 900.4L797.8 921.6M832.0 899.9L817.1 922.4M848.9 899.3L837.4 923.7M864.7 898.5L859.8 925.1M880.9 898.4L881.5 925.4M898.6 898.4L900.3 925.3M916.6 898.4L918.7 925.3M933.5 898.5L938.9 925.0M950.3 898.9L959.6 924.3M967.6 899.3L979.1 923.7M985.4 899.4L997.9 923.4M1003.2 899.6L1016.5 923.1M1021.0 899.8L1035.3 922.7M1038.7 900.0L1054.1 922.2M1056.6 900.2L1072.7 921.9M1074.5 900.4L1091.1 921.6M1092.4 900.5L1109.5 921.4M1110.4 900.6L1127.9 921.1M1128.3 900.8L1146.4 920.8M1146.2 901.0L1164.9 920.4M1164.0 901.2L1183.4 920.0M1181.9 901.5L1196.0 914.1M534.4 934.0L541.9 908.1M552.8 934.1L559.5 908.0M571.4 934.2L576.7 907.8M590.2 934.3L593.5 907.5M609.3 934.4L609.9 907.4M628.6 934.4L625.7 907.5M648.2 934.1L641.1 908.0M668.0 933.4L656.0 909.2M687.9 932.3L670.9 911.3M707.6 930.6L685.9 914.5M726.9 928.4L701.8 918.6M745.7 925.8L718.8 923.4M763.6 923.2L737.1 928.3M780.9 920.8L756.7 932.7M797.9 919.0L776.9 936.0M814.9 917.8L797.1 938.2M831.9 917.0L817.2 939.7M848.7 916.3L837.8 941.0M865.2 915.8L858.8 942.0M882.0 915.5L879.5 942.4M899.2 915.5L899.2 942.5M916.6 915.5L918.6 942.5M933.8 915.6L938.4 942.3M951.0 915.9L958.3 941.9M968.3 916.1L977.8 941.4M985.9 916.3L996.9 941.0M1003.6 916.5L1015.8 940.6M1021.3 916.7L1034.6 940.3M1039.1 916.9L1053.3 939.9M1056.9 917.1L1072.0 939.5M1074.8 917.3L1090.5 939.2M1092.7 917.4L1109.0 938.9M1110.6 917.6L1127.5 938.6M1128.5 917.8L1146.0 938.3M1146.4 918.0L1164.5 938.0M1164.3 918.2L1183.1 937.5M1182.1 918.4L1195.8 931.5M535.7 951.5L539.5 924.7M554.2 951.5L556.9 924.7M572.9 951.6L574.0 924.6M591.8 951.6L590.7 924.6M610.8 951.5L607.0 924.7M630.1 951.2L622.9 925.2M649.6 950.7L638.4 926.2M669.2 949.9L653.7 927.7M688.8 948.6L669.1 930.2M708.2 946.8L684.8 933.4M727.2 944.6L701.2 937.4M745.7 942.3L718.7 941.8M763.6 940.0L737.3 946.1M780.9 937.9L756.7 949.9M798.0 936.3L776.7 952.9M815.0 935.1L796.9 955.1M832.0 934.2L817.1 956.8M848.9 933.5L837.5 958.0M865.7 933.0L858.1 959.0M882.6 932.8L878.4 959.5M899.7 932.7L898.3 959.6M917.0 932.7L918.0 959.7M934.2 932.7L937.7 959.5M951.5 932.9L957.3 959.3M968.9 933.1L976.8 958.9M986.4 933.3L995.9 958.5M1004.1 933.5L1014.9 958.2M1021.8 933.7L1033.8 957.8M1039.5 933.8L1052.6 957.5M1057.3 934.0L1071.3 957.1M1075.1 934.2L1089.9 956.8M1093.0 934.4L1108.5 956.5M1110.8 934.6L1127.0 956.2M1128.7 934.7L1145.6 955.8M1146.6 934.9L1164.1 955.5M1164.5 935.1L1182.7 955.1M1182.3 935.4L1195.5 948.9M537.0 968.7L537.2 941.7M555.6 968.7L554.4 941.7M574.3 968.7L571.4 941.8M593.2 968.5L588.0 942.0M612.3 968.3L604.3 942.5M631.5 967.9L620.3 943.3M650.9 967.2L636.1 944.6M670.3 966.2L651.8 946.5M689.6 964.8L667.6 949.1M708.7 963.0L683.9 952.4M727.4 961.0L700.9 956.1M745.7 958.8L718.7 960.1M763.5 956.8L737.4 963.9M780.9 955.0L756.8 967.2M798.1 953.5L776.7 970.0M815.1 952.4L796.7 972.1M832.1 951.5L816.9 973.8M849.1 950.8L837.2 975.0M866.0 950.3L857.4 975.9M883.0 950.0L877.6 976.5M900.1 949.9L897.5 976.7M917.4 949.8L917.2 976.8M934.6 949.9L936.9 976.8M952.0 950.0L956.5 976.6M969.4 950.1L975.9 976.3M986.9 950.3L995.1 976.0M1004.5 950.4L1014.1 975.7M1022.2 950.6L1033.0 975.3M1039.9 950.8L1051.9 975.0M1057.6 951.0L1070.6 974.7M1075.4 951.2L1089.3 974.3M1093.3 951.3L1107.9 974.0M1111.1 951.5L1126.5 973.7M1129.0 951.7L1145.1 973.3M1146.8 951.9L1163.7 973.0M1164.7 952.1L1182.3 972.6M1182.6 952.3L1195.3 966.2M538.2 984.0L535.0 959.0M556.8 984.0L552.1 959.1M575.6 984.0L568.9 959.4M594.5 984.0L585.5 959.9M613.6 984.0L601.9 960.6M632.7 984.0L618.1 961.7M651.9 983.5L634.1 963.2M671.1 982.4L650.2 965.3M690.2 981.0L666.5 968.0M709.0 979.2L683.3 971.2M727.5 977.4L700.7 974.7M745.6 975.4L718.8 978.2M763.4 973.6L737.6 981.6M780.8 972.0L759.3 983.4M798.0 970.7L780.9 983.8M815.2 969.6L802.2 983.3M832.2 968.7L822.9 981.9M849.2 968.0L841.8 982.4M866.3 967.6L860.7 982.8M883.4 967.2L879.5 983.0M900.5 967.1L898.3 983.1M917.8 967.0L917.0 983.2M935.0 967.0L935.7 983.2M952.4 967.0L954.4 983.1M969.8 967.1L972.9 983.0M987.3 967.3L991.5 982.9M1004.9 967.4L1010.0 982.8M1022.6 967.6L1028.4 982.7M1040.3 967.8L1046.8 982.6M1058.0 968.0L1065.2 982.5M1075.8 968.1L1083.5 982.3M1093.6 968.3L1101.9 982.2M1111.4 968.5L1120.2 982.1M1129.2 968.7L1138.5 982.0M1147.1 968.9L1158.4 984.0M1164.9 969.1L1176.8 983.8M1182.8 969.3L1195.1 983.6" stroke="#000" stroke-width="0.95" fill="none"/><path d="M546.7 339.3L542.4 336.6L545.9 334.3ZM564.0 339.7L559.9 336.8L563.5 334.7ZM581.4 340.1L577.4 337.0L581.1 335.1ZM598.7 340.5L594.9 337.2L598.7 335.4ZM616.1 340.8L612.5 337.4L616.3 335.8ZM633.6 341.1L630.0 337.5L634.0 336.0ZM651.0 341.3L647.6 337.6L651.6 336.3ZM668.3 341.5L665.1 337.6L669.2 336.5ZM685.4 341.8L682.4 337.7L686.5 336.9ZM702.0 342.0L699.4 337.7L703.6 337.2ZM718.3 342.1L716.1 337.5L720.3 337.5ZM734.5 342.0L732.9 337.3L737.1 337.7ZM751.1 341.8L749.9 336.9L754.0 337.7ZM768.2 341.6L767.3 336.6L771.3 337.6ZM785.4 341.4L784.8 336.3L788.8 337.6ZM802.6 341.0L802.2 336.0L806.2 337.5ZM819.6 340.6L819.6 335.5L823.4 337.3ZM836.4 339.9L836.8 334.9L840.4 336.9ZM852.9 338.9L853.8 333.9L857.2 336.4ZM869.2 337.5L870.8 332.7L873.9 335.5ZM885.6 335.7L887.8 331.1L890.5 334.4ZM902.1 333.3L905.0 329.2L907.1 332.8ZM918.9 330.5L922.5 326.9L923.9 330.9ZM936.2 327.2L940.4 324.4L941.0 328.6ZM954.1 323.6L958.8 321.8L958.6 325.9ZM972.8 320.0L977.8 319.1L976.7 323.2ZM994.6 317.8L999.7 318.0L997.8 321.8ZM1016.5 317.0L1021.4 318.2L1018.8 321.5ZM1037.9 317.4L1042.5 319.5L1039.3 322.3ZM1058.7 318.8L1062.9 321.6L1059.3 323.8ZM1077.7 318.3L1081.4 321.8L1077.5 323.4ZM1096.7 318.1L1099.9 322.0L1095.8 323.0ZM1115.6 317.9L1118.3 322.2L1114.1 322.7ZM1134.4 317.8L1136.6 322.4L1132.5 322.5ZM1153.1 317.8L1155.0 322.6L1150.8 322.3ZM1171.8 317.9L1173.2 322.7L1169.1 322.2ZM1190.3 318.0L1191.4 322.9L1187.3 322.0ZM547.2 356.1L542.8 353.5L546.2 351.1ZM564.5 356.6L560.3 353.8L563.9 351.6ZM581.9 357.0L577.8 354.0L581.4 352.0ZM599.2 357.4L595.3 354.3L599.1 352.4ZM616.7 357.7L612.9 354.4L616.7 352.7ZM634.2 358.0L630.5 354.5L634.4 352.9ZM651.9 358.2L648.3 354.6L652.2 353.1ZM669.5 358.3L666.0 354.7L670.0 353.3ZM686.7 358.6L683.4 354.8L687.5 353.6ZM703.1 359.0L700.2 354.8L704.4 354.1ZM718.7 359.3L716.5 354.7L720.7 354.6ZM734.3 359.2L732.7 354.4L736.9 354.8ZM750.8 358.9L749.7 354.0L753.8 354.8ZM768.2 358.8L767.3 353.8L771.4 354.8ZM785.9 358.6L785.1 353.7L789.1 354.8ZM803.4 358.5L802.8 353.4L806.8 354.7ZM820.6 358.1L820.2 353.1L824.2 354.6ZM837.4 357.6L837.4 352.5L841.2 354.3ZM853.8 356.7L854.4 351.6L858.0 353.8ZM869.9 355.3L871.2 350.4L874.5 353.1ZM886.1 353.4L888.1 348.8L890.9 351.9ZM902.4 351.0L905.2 346.8L907.4 350.3ZM919.0 348.0L922.6 344.4L924.1 348.3ZM936.2 344.5L940.4 341.7L941.1 345.8ZM954.1 340.6L958.9 338.8L958.6 343.0ZM972.9 336.7L978.0 336.0L976.8 340.0ZM992.6 333.1L997.6 333.5L995.6 337.2ZM1012.9 330.1L1017.7 331.6L1014.9 334.7ZM1033.5 327.8L1037.9 330.1L1034.6 332.7ZM1054.2 326.1L1058.2 329.2L1054.4 331.2ZM1074.9 325.0L1078.3 328.8L1074.3 330.1ZM1095.4 324.4L1098.2 328.6L1094.1 329.3ZM1115.6 324.2L1117.9 328.7L1113.8 328.9ZM1135.6 324.2L1137.4 328.9L1133.2 328.7ZM1155.3 324.4L1156.7 329.2L1152.5 328.6ZM1174.8 324.6L1175.8 329.6L1171.7 328.6ZM1194.0 324.9L1194.7 329.9L1190.7 328.7ZM547.7 372.8L543.2 370.5L546.6 367.9ZM565.0 373.4L560.7 370.8L564.2 368.4ZM582.3 373.9L578.1 371.1L581.7 368.9ZM599.7 374.4L595.6 371.3L599.3 369.3ZM617.1 374.7L613.2 371.5L617.0 369.6ZM634.8 374.9L631.0 371.6L634.8 369.8ZM652.7 375.0L648.9 371.6L652.8 369.9ZM670.8 375.0L667.1 371.6L670.9 369.9ZM688.6 375.1L684.9 371.7L688.8 370.0ZM705.0 375.7L701.7 371.9L705.7 370.7ZM719.2 376.4L716.8 371.9L721.0 371.7ZM733.2 376.2L732.0 371.3L736.1 372.0ZM749.8 375.8L749.0 370.8L753.0 371.9ZM768.1 375.9L767.2 370.9L771.3 372.0ZM786.5 376.0L785.5 371.0L789.6 372.0ZM804.4 375.9L803.5 370.9L807.6 372.0ZM821.8 375.7L821.1 370.7L825.2 371.9ZM838.7 375.3L838.3 370.3L842.3 371.7ZM854.9 374.4L855.2 369.4L858.9 371.3ZM870.7 373.1L871.8 368.1L875.2 370.6ZM886.7 371.1L888.5 366.4L891.4 369.4ZM902.8 368.7L905.4 364.4L907.8 367.9ZM919.2 365.7L922.7 362.0L924.3 365.8ZM936.3 361.9L940.4 359.1L941.1 363.2ZM954.1 357.7L958.9 355.9L958.6 360.1ZM973.1 353.4L978.1 352.8L976.8 356.8ZM993.0 349.6L998.0 350.2L995.8 353.8ZM1013.6 346.5L1018.3 348.2L1015.3 351.2ZM1034.5 344.2L1038.8 346.9L1035.2 349.2ZM1055.5 342.7L1059.2 346.1L1055.3 347.7ZM1076.3 341.8L1079.4 345.8L1075.3 346.7ZM1097.0 341.4L1099.4 345.8L1095.3 346.2ZM1117.3 341.4L1119.2 346.0L1115.0 345.9ZM1137.3 341.5L1138.6 346.4L1134.5 345.8ZM1156.9 341.8L1157.9 346.8L1153.8 345.8ZM1176.3 342.2L1176.9 347.2L1172.9 345.9ZM1195.5 342.6L1195.7 347.6L1191.8 346.1ZM548.2 389.6L543.7 387.4L546.9 384.7ZM565.5 390.2L561.1 387.7L564.5 385.3ZM582.7 390.8L578.5 388.1L582.0 385.8ZM600.0 391.3L595.9 388.4L599.6 386.3ZM617.4 391.7L613.5 388.5L617.2 386.6ZM635.1 391.9L631.3 388.6L635.1 386.8ZM653.4 391.8L649.5 388.6L653.3 386.8ZM672.3 391.4L668.3 388.4L671.9 386.3ZM691.5 390.8L687.2 388.0L690.7 385.8ZM708.6 391.3L704.5 388.4L708.2 386.3ZM719.7 393.5L717.2 389.1L721.4 388.7ZM729.9 392.4L729.6 387.4L733.5 388.9ZM747.6 392.2L747.4 387.2L751.3 388.8ZM768.2 393.1L767.2 388.1L771.3 389.1ZM787.6 393.3L786.3 388.4L790.4 389.2ZM805.8 393.3L804.5 388.5L808.6 389.2ZM823.5 393.3L822.3 388.4L826.4 389.2ZM840.5 393.0L839.6 388.1L843.7 389.1ZM856.3 392.3L856.1 387.2L860.0 388.8ZM871.6 390.8L872.3 385.8L875.8 388.1ZM887.2 388.8L888.8 384.0L891.9 386.9ZM903.3 386.5L905.7 382.1L908.2 385.5ZM919.6 383.5L922.8 379.7L924.6 383.5ZM936.3 379.5L940.4 376.6L941.3 380.7ZM954.1 374.8L958.9 373.0L958.6 377.2ZM973.2 370.1L978.3 369.7L976.9 373.7ZM993.4 366.0L998.4 366.9L996.0 370.4ZM1014.4 362.9L1019.0 364.9L1015.8 367.7ZM1035.6 360.7L1039.7 363.7L1036.0 365.7ZM1056.9 359.3L1060.3 363.1L1056.3 364.3ZM1078.0 358.6L1080.6 362.9L1076.5 363.5ZM1098.7 358.5L1100.7 363.1L1096.5 363.1ZM1119.1 358.7L1120.5 363.5L1116.3 362.9ZM1139.0 359.1L1139.9 364.0L1135.8 363.0ZM1158.6 359.5L1159.1 364.6L1155.1 363.1ZM1177.9 360.0L1178.0 365.0L1174.2 363.3ZM1197.0 360.4L1196.7 365.5L1193.0 363.6ZM548.8 406.3L544.1 404.2L547.3 401.4ZM566.0 407.0L561.5 404.7L564.8 402.1ZM583.1 407.7L578.8 405.1L582.3 402.7ZM600.3 408.3L596.1 405.4L599.7 403.3ZM617.5 408.8L613.5 405.7L617.3 403.7ZM635.1 409.0L631.3 405.8L635.1 404.0ZM653.5 408.9L649.6 405.7L653.4 403.8ZM673.3 407.9L669.1 405.2L672.6 402.9ZM694.6 405.3L689.8 403.7L692.7 400.6ZM714.9 402.5L709.9 401.8L712.1 398.3ZM723.3 410.0L720.0 406.2L724.0 404.9ZM722.2 403.7L724.6 399.3L727.1 402.6ZM744.9 408.0L745.6 403.0L749.1 405.2ZM769.7 410.5L768.4 405.7L772.5 406.3ZM789.4 410.7L787.6 406.0L791.8 406.3ZM807.1 410.7L805.5 405.9L809.6 406.3ZM825.6 410.7L823.8 406.0L828.0 406.3ZM843.3 410.7L841.6 405.9L845.8 406.3ZM858.0 410.0L857.3 405.0L861.4 406.2ZM872.0 408.2L872.6 403.2L876.2 405.4ZM887.5 406.2L889.0 401.4L892.1 404.2ZM904.0 404.6L906.1 400.0L908.8 403.2ZM920.2 401.9L923.1 397.8L925.2 401.4ZM936.5 397.4L940.5 394.3L941.5 398.3ZM954.1 392.0L958.9 390.2L958.6 394.4ZM973.4 386.8L978.5 386.5L976.9 390.4ZM993.9 382.5L998.9 383.6L996.3 387.0ZM1015.2 379.3L1019.7 381.7L1016.4 384.3ZM1036.8 377.2L1040.6 380.5L1036.8 382.3ZM1058.4 376.1L1061.4 380.1L1057.3 381.0ZM1079.7 375.7L1082.0 380.2L1077.8 380.3ZM1100.6 375.8L1102.1 380.6L1097.9 380.1ZM1121.0 376.2L1121.9 381.2L1117.8 380.1ZM1140.9 376.8L1141.2 381.9L1137.3 380.4ZM1160.4 377.4L1160.3 382.5L1156.5 380.6ZM1179.6 378.0L1179.1 383.0L1175.5 380.9ZM1195.6 383.0L1194.8 388.0L1191.3 385.7ZM549.4 422.9L544.6 421.1L547.6 418.1ZM566.5 423.7L561.9 421.6L565.1 418.9ZM583.5 424.6L579.1 422.1L582.5 419.6ZM600.5 425.4L596.3 422.5L599.9 420.3ZM617.5 426.0L613.5 422.8L617.2 420.9ZM634.7 426.4L630.9 423.0L634.8 421.3ZM652.8 426.4L649.0 423.0L652.8 421.3ZM672.6 425.5L668.5 422.6L672.1 420.5ZM695.6 421.3L690.7 420.1L693.3 416.8ZM717.6 409.6L713.1 411.9L712.9 407.7ZM723.1 393.5L723.8 398.5L719.8 397.3ZM719.2 406.0L724.2 405.1L723.2 409.2ZM747.5 426.5L747.4 421.4L751.2 423.1ZM775.2 427.7L772.4 423.5L776.5 422.8ZM791.8 427.9L789.4 423.4L793.6 423.1ZM807.2 427.8L805.5 423.1L809.7 423.4ZM827.8 427.9L825.5 423.4L829.7 423.1ZM848.0 427.6L845.1 423.5L849.3 422.7ZM860.0 427.6L858.7 422.7L862.8 423.5ZM870.9 424.6L871.9 419.7L875.3 422.1ZM887.0 422.9L888.7 418.2L891.7 421.1ZM905.6 423.4L907.1 418.6L910.2 421.4ZM921.6 421.1L923.9 416.6L926.5 419.9ZM936.7 415.4L940.5 412.1L941.8 416.1ZM954.1 409.0L958.9 407.3L958.6 411.5ZM973.6 403.4L978.7 403.3L977.0 407.2ZM994.5 399.0L999.3 400.4L996.6 403.6ZM1016.1 395.9L1020.4 398.5L1016.9 400.8ZM1038.0 393.9L1041.6 397.5L1037.6 398.9ZM1060.0 392.9L1062.6 397.2L1058.5 397.8ZM1081.6 392.8L1083.3 397.6L1079.2 397.3ZM1102.7 393.3L1103.6 398.3L1099.5 397.3ZM1123.1 394.1L1123.3 399.1L1119.4 397.6ZM1142.9 394.9L1142.6 399.9L1138.9 397.9ZM1162.3 395.6L1161.5 400.6L1158.0 398.3ZM1181.3 396.2L1180.2 401.2L1176.9 398.7ZM1196.6 400.9L1195.3 405.8L1192.1 403.2ZM550.0 439.3L545.2 437.8L548.0 434.7ZM567.1 440.4L562.4 438.4L565.5 435.6ZM584.0 441.4L579.5 439.0L582.9 436.5ZM600.7 442.4L596.5 439.6L600.1 437.3ZM617.3 443.2L613.4 440.0L617.2 438.1ZM634.0 443.8L630.4 440.3L634.3 438.8ZM651.2 444.2L647.8 440.5L651.7 439.1ZM669.6 444.1L666.1 440.4L670.1 439.0ZM691.0 442.5L686.9 439.7L690.4 437.5ZM717.0 431.9L712.0 432.8L713.1 428.7ZM725.2 411.4L725.3 416.5L721.4 414.8ZM722.5 416.6L727.4 417.8L724.8 421.1ZM764.4 441.9L760.0 439.3L763.5 436.9ZM783.0 441.6L778.5 439.1L781.9 436.6ZM794.5 444.6L791.4 440.6L795.5 439.7ZM923.8 440.7L925.3 435.8L928.5 438.6ZM936.6 432.2L940.5 429.0L941.6 433.0ZM954.2 425.2L959.1 423.7L958.5 427.9ZM974.0 419.8L979.0 419.9L977.2 423.7ZM994.9 415.6L999.7 417.2L996.9 420.3ZM1016.8 412.6L1021.0 415.4L1017.4 417.6ZM1039.2 410.7L1042.5 414.5L1038.4 415.7ZM1061.6 410.0L1063.9 414.5L1059.7 414.6ZM1083.7 410.3L1084.9 415.2L1080.7 414.4ZM1104.9 411.2L1105.2 416.2L1101.3 414.7ZM1125.3 412.3L1124.8 417.3L1121.2 415.2ZM1145.0 413.3L1144.0 418.3L1140.6 415.8ZM1164.2 414.2L1162.8 419.0L1159.6 416.3ZM1183.0 414.8L1181.3 419.6L1178.3 416.7ZM1195.7 420.9L1193.9 425.6L1190.9 422.6ZM550.7 455.7L545.8 454.4L548.5 451.1ZM567.8 456.8L563.0 455.2L565.9 452.1ZM584.6 458.0L580.0 455.9L583.2 453.2ZM601.1 459.3L596.8 456.6L600.3 454.3ZM617.3 460.4L613.4 457.2L617.1 455.3ZM633.3 461.2L629.8 457.6L633.8 456.2ZM649.4 461.8L646.4 457.8L650.5 456.9ZM665.8 462.1L663.2 457.8L667.4 457.3ZM683.1 462.2L680.7 457.7L684.9 457.4ZM701.1 462.2L698.7 457.7L702.9 457.5ZM719.3 462.2L716.9 457.7L721.1 457.4ZM750.0 455.6L745.1 454.4L747.7 451.1ZM771.2 449.6L766.2 450.3L767.4 446.3ZM954.7 440.2L959.7 439.3L958.6 443.4ZM974.4 436.2L979.4 436.6L977.4 440.3ZM995.1 432.6L999.9 434.2L997.0 437.3ZM1017.0 429.6L1021.2 432.4L1017.6 434.6ZM1040.0 427.6L1043.1 431.6L1039.1 432.5ZM1063.4 427.1L1065.2 431.9L1061.0 431.6ZM1086.0 428.1L1086.5 433.1L1082.5 431.7ZM1107.4 429.6L1106.9 434.6L1103.3 432.5ZM1127.7 431.1L1126.4 436.0L1123.1 433.3ZM1147.1 432.3L1145.3 437.0L1142.4 434.1ZM1166.0 433.2L1163.9 437.8L1161.2 434.6ZM1184.6 433.7L1182.3 438.2L1179.7 434.9ZM1196.5 438.9L1194.1 443.4L1191.5 440.0ZM551.5 471.7L546.5 470.9L548.9 467.4ZM568.6 473.1L563.8 471.7L566.5 468.5ZM585.4 474.5L580.7 472.6L583.7 469.7ZM601.7 476.0L597.3 473.5L600.7 471.0ZM617.6 477.4L613.6 474.3L617.3 472.3ZM632.9 478.5L629.5 474.8L633.5 473.5ZM647.9 479.2L645.3 474.9L649.4 474.4ZM663.0 479.3L661.1 474.6L665.3 474.8ZM678.3 479.0L677.2 474.0L681.3 474.9ZM693.8 478.2L693.5 473.2L697.4 474.7ZM710.2 477.5L710.4 472.4L714.1 474.3ZM994.6 450.3L999.4 451.8L996.7 454.9ZM1016.4 447.1L1020.7 449.8L1017.1 452.1ZM1040.4 444.6L1043.4 448.7L1039.3 449.6ZM1065.4 444.6L1066.6 449.5L1062.5 448.7ZM1088.9 446.5L1088.5 451.5L1084.8 449.5ZM1110.2 448.8L1108.7 453.6L1105.6 450.8ZM1130.1 450.7L1127.9 455.2L1125.2 452.0ZM1149.1 451.9L1146.5 456.3L1144.1 452.8ZM1167.7 452.7L1164.9 456.9L1162.7 453.3ZM1186.0 453.0L1183.1 457.1L1181.0 453.5ZM1194.8 458.4L1191.9 462.5L1189.8 458.9ZM552.4 487.5L547.3 487.1L549.4 483.5ZM569.6 488.9L564.6 488.0L567.0 484.6ZM586.4 490.6L581.6 489.1L584.4 485.9ZM602.7 492.3L598.2 490.2L601.4 487.5ZM618.3 494.2L614.1 491.2L617.8 489.1ZM632.9 495.7L629.5 491.9L633.5 490.7ZM647.0 496.5L644.6 492.0L648.7 491.7ZM660.9 496.3L659.6 491.4L663.8 492.1ZM675.3 495.2L675.1 490.2L679.0 491.7ZM690.3 493.5L691.1 488.6L694.6 490.9ZM1014.2 466.0L1018.8 468.0L1015.7 470.8ZM1039.7 462.0L1042.9 465.9L1038.8 466.9ZM1068.3 462.5L1068.7 467.5L1064.7 466.1ZM1092.5 466.4L1090.8 471.1L1087.8 468.2ZM1113.1 469.4L1110.4 473.7L1108.1 470.2ZM1132.3 471.3L1129.1 475.2L1127.2 471.4ZM1150.9 472.3L1147.4 476.0L1145.8 472.1ZM1169.1 472.7L1165.6 476.3L1164.1 472.4ZM1187.2 472.6L1183.7 476.2L1182.1 472.3ZM1195.2 476.4L1191.7 480.1L1190.1 476.2ZM553.2 502.9L548.2 503.1L549.8 499.2ZM570.7 504.4L565.6 504.1L567.6 500.3ZM587.7 506.1L582.7 505.2L585.1 501.8ZM604.1 508.2L599.3 506.5L602.2 503.5ZM619.5 510.5L615.2 507.9L618.6 505.5ZM633.6 512.6L630.1 509.0L634.0 507.6ZM646.4 513.7L644.1 509.1L648.3 509.0ZM659.1 513.0L658.3 508.0L662.4 509.2ZM672.8 511.1L673.4 506.1L677.0 508.3ZM1035.4 480.9L1039.5 483.8L1035.8 485.9ZM1074.5 483.6L1072.7 488.3L1069.7 485.4ZM1096.6 489.6L1093.1 493.3L1091.6 489.4ZM1115.5 492.0L1111.5 495.1L1110.5 491.0ZM1133.8 493.0L1129.6 495.9L1128.9 491.8ZM1152.0 493.4L1147.7 496.2L1147.1 492.0ZM1170.0 493.2L1165.8 496.0L1165.1 491.9ZM1188.0 492.5L1183.9 495.5L1183.1 491.4ZM1195.5 494.4L1191.6 497.6L1190.5 493.5ZM554.0 517.9L549.0 518.7L550.1 514.7ZM571.7 519.2L566.6 519.7L568.1 515.7ZM589.1 520.9L584.0 520.8L585.8 517.0ZM605.9 523.1L600.9 522.3L603.3 518.8ZM621.6 526.0L616.9 524.1L620.0 521.2ZM635.2 529.1L631.3 525.8L635.1 524.0ZM646.2 530.8L644.0 526.3L648.2 526.2ZM657.0 529.4L656.8 524.4L660.7 526.0ZM1078.0 520.9L1072.9 520.8L1074.8 517.0ZM1097.5 516.8L1092.6 517.9L1093.4 513.8ZM1115.7 516.0L1110.9 517.3L1111.5 513.2ZM1133.9 515.7L1129.1 517.1L1129.6 513.0ZM1152.1 515.2L1147.3 516.7L1147.7 512.6ZM1170.3 514.1L1165.6 516.0L1165.8 511.8ZM1188.4 512.6L1183.9 514.9L1183.7 510.7ZM1195.6 512.3L1191.4 515.1L1190.8 510.9ZM554.5 532.5L549.7 534.1L550.2 529.9ZM572.4 533.5L567.5 534.8L568.3 530.7ZM590.2 534.9L585.3 535.7L586.3 531.7ZM607.7 536.8L602.7 537.1L604.2 533.2ZM624.4 539.6L619.4 539.0L621.6 535.4ZM638.5 544.1L634.0 541.9L637.3 539.2ZM646.3 548.0L644.0 543.4L648.2 543.3ZM653.4 544.6L654.5 539.6L657.9 542.1ZM1070.0 546.2L1066.1 543.0L1069.8 541.1ZM1093.7 541.8L1088.8 540.4L1091.5 537.2ZM1113.3 539.6L1108.3 539.0L1110.5 535.4ZM1132.0 538.6L1127.0 538.3L1129.0 534.6ZM1150.7 537.4L1145.7 537.5L1147.3 533.6ZM1169.6 535.4L1164.6 536.1L1165.7 532.1ZM1188.2 532.7L1183.4 534.2L1184.0 530.0ZM1195.7 530.2L1191.2 532.5L1191.0 528.3ZM554.6 546.8L550.1 549.1L549.9 544.9ZM572.7 547.4L568.1 549.5L568.1 545.3ZM590.8 548.1L586.2 550.0L586.3 545.8ZM608.9 549.0L604.1 550.7L604.5 546.5ZM626.8 550.4L621.9 551.7L622.6 547.6ZM644.1 553.5L639.1 554.0L640.5 550.0ZM647.4 565.0L644.9 560.7L649.0 560.3ZM1089.2 562.7L1085.1 559.8L1088.7 557.7ZM1108.6 561.9L1104.2 559.4L1107.6 556.9ZM1127.4 561.4L1122.9 559.1L1126.2 556.5ZM1147.0 560.0L1142.3 558.2L1145.2 555.3ZM1167.5 557.0L1162.5 556.3L1164.8 552.8ZM1187.7 552.5L1182.7 553.2L1183.9 549.2ZM1195.7 547.8L1191.0 549.7L1191.2 545.5ZM554.2 560.9L550.2 564.0L549.2 559.9ZM572.3 560.9L568.3 564.0L567.4 559.9ZM590.4 560.9L586.4 564.0L585.4 559.9ZM608.4 560.6L604.5 563.7L603.5 559.6ZM626.3 559.5L622.5 562.9L621.2 558.9ZM642.9 556.2L639.9 560.3L637.9 556.6ZM646.8 547.2L648.6 551.9L644.5 551.7ZM1085.6 581.5L1082.2 577.7L1086.2 576.5ZM1101.2 582.1L1098.4 577.8L1102.5 577.2ZM1118.0 582.2L1115.5 577.8L1119.7 577.4ZM1138.2 581.9L1135.2 577.8L1139.3 577.0ZM1162.7 579.2L1158.3 576.6L1161.8 574.2ZM1187.1 571.3L1182.0 571.5L1183.6 567.7ZM1195.7 564.6L1191.1 566.8L1191.1 562.6ZM553.2 575.0L549.8 578.7L548.1 574.9ZM571.1 574.6L567.8 578.4L566.1 574.6ZM588.9 574.0L585.8 577.9L583.9 574.2ZM606.4 572.9L603.6 577.0L601.4 573.4ZM623.1 570.8L620.8 575.3L618.2 572.1ZM637.2 567.2L636.5 572.2L632.9 569.9ZM1092.0 598.2L1091.7 593.2L1095.6 594.7ZM1106.0 595.9L1107.1 591.0L1110.5 593.5ZM1124.0 595.9L1125.1 590.9L1128.5 593.5ZM1148.2 598.8L1147.4 593.9L1151.4 594.9ZM1188.3 584.0L1183.4 585.5L1183.9 581.4ZM1195.5 580.1L1191.6 583.4L1190.5 579.3ZM551.6 589.3L549.0 593.6L546.6 590.1ZM569.3 588.6L566.8 593.0L564.3 589.6ZM586.6 587.7L584.5 592.3L581.8 589.1ZM603.6 586.4L601.9 591.2L598.9 588.3ZM619.6 584.7L618.6 589.6L615.2 587.2ZM633.8 582.6L634.1 587.7L630.2 586.2ZM1081.9 605.1L1085.5 601.5L1087.0 605.5ZM1099.2 601.9L1103.4 599.1L1104.1 603.2ZM1117.1 599.5L1121.6 597.2L1121.7 601.4ZM1137.0 591.3L1142.0 591.5L1140.2 595.2ZM1178.8 583.4L1178.6 588.5L1174.9 586.6ZM1196.5 593.4L1194.1 597.8L1191.6 594.5ZM549.5 603.8L547.7 608.5L544.7 605.6ZM566.7 603.0L565.2 607.8L562.1 605.0ZM583.7 602.1L582.6 607.0L579.3 604.5ZM600.3 601.1L599.8 606.1L596.1 604.0ZM616.3 600.0L616.5 605.1L612.6 603.4ZM631.5 599.1L632.5 604.0L628.4 603.1ZM1086.2 603.6L1090.9 605.4L1087.9 608.3ZM1101.9 606.5L1106.9 607.3L1104.6 610.8ZM1121.7 604.4L1126.5 605.9L1123.6 609.0ZM1146.9 599.6L1150.4 603.3L1146.5 604.7ZM1176.5 599.6L1177.0 604.6L1173.1 603.3ZM1195.4 609.3L1193.8 614.1L1190.7 611.2ZM546.7 618.7L545.9 623.7L542.4 621.4ZM563.3 617.8L563.0 622.9L559.3 620.9ZM579.9 617.1L580.1 622.1L576.2 620.6ZM596.4 616.5L597.1 621.5L593.1 620.3ZM612.9 616.1L614.0 621.0L609.9 620.2ZM629.3 615.9L631.0 620.7L626.8 620.3ZM1094.0 616.4L1097.2 620.3L1093.1 621.3ZM1110.3 616.9L1113.9 620.5L1109.9 622.0ZM1131.0 616.2L1134.0 620.2L1129.9 621.1ZM1154.9 615.9L1156.4 620.7L1152.2 620.2ZM1179.0 617.8L1178.7 622.9L1175.0 620.9ZM1195.5 626.5L1193.8 631.3L1190.8 628.4ZM543.1 634.0L543.5 639.1L539.6 637.6ZM559.0 633.4L560.1 638.3L556.0 637.4ZM575.0 633.0L576.6 637.8L572.5 637.4ZM591.5 633.0L593.5 637.6L589.3 637.5ZM608.7 633.0L611.0 637.5L606.8 637.7ZM626.9 633.0L629.2 637.5L625.0 637.6ZM1098.8 633.0L1100.8 637.6L1096.6 637.5ZM1118.2 633.0L1119.8 637.8L1115.6 637.4ZM1139.0 633.5L1139.9 638.5L1135.8 637.4ZM1160.6 634.8L1160.4 639.9L1156.7 638.0ZM1181.9 636.9L1180.6 641.8L1177.3 639.1ZM1196.1 644.4L1194.0 648.9L1191.3 645.8ZM538.8 650.2L540.4 655.0L536.3 654.6ZM553.7 650.2L556.2 654.6L552.0 654.9ZM569.0 650.6L572.2 654.6L568.1 655.6ZM585.5 651.1L589.0 654.7L585.1 656.2ZM603.6 651.1L607.1 654.8L603.1 656.2ZM623.8 650.5L626.8 654.6L622.7 655.5ZM1102.0 650.5L1103.1 655.4L1099.0 654.5ZM1123.6 651.6L1123.7 656.7L1119.8 655.0ZM1144.4 653.1L1143.6 658.1L1140.1 655.7ZM1164.6 654.7L1163.0 659.5L1160.0 656.7ZM1184.4 656.5L1182.2 661.0L1179.5 657.8ZM1196.9 662.6L1194.2 666.8L1191.9 663.3ZM533.9 667.5L536.8 671.7L532.7 672.4ZM547.8 668.9L551.6 672.2L547.8 673.9ZM562.8 670.7L567.3 673.1L563.9 675.6ZM579.5 671.9L584.1 673.9L581.0 676.7ZM597.9 671.6L602.5 673.7L599.4 676.4ZM619.5 669.2L623.5 672.3L619.8 674.3ZM1105.0 668.5L1105.2 673.6L1101.3 672.0ZM1127.9 671.5L1126.5 676.3L1123.3 673.6ZM1148.2 673.7L1146.0 678.2L1143.3 675.0ZM1167.5 675.3L1164.8 679.6L1162.5 676.0ZM1186.4 676.6L1183.3 680.6L1181.3 676.9ZM1195.1 682.1L1191.8 685.9L1190.1 682.0ZM530.1 688.8L534.1 691.9L530.4 693.9ZM542.3 690.0L547.1 691.6L544.3 694.7ZM557.9 693.4L563.0 693.8L560.9 697.5ZM575.1 695.5L580.1 695.2L578.6 699.1ZM593.1 695.6L598.2 695.3L596.7 699.2ZM612.9 692.3L617.9 693.1L615.6 696.6ZM1110.1 688.9L1108.6 693.7L1105.5 690.9ZM1132.0 693.7L1128.9 697.7L1127.0 694.0ZM1151.0 695.6L1147.5 699.2L1145.9 695.3ZM1169.4 696.5L1165.7 699.9L1164.4 695.9ZM1187.7 697.1L1183.9 700.4L1182.7 696.4ZM1195.5 700.3L1191.5 703.5L1190.5 699.4ZM530.2 712.6L535.0 714.2L532.1 717.3ZM538.6 713.4L543.6 712.9L542.2 716.9ZM555.8 718.1L560.5 716.2L560.2 720.4ZM573.9 720.9L578.3 718.3L578.7 722.5ZM592.3 722.8L596.4 719.7L597.3 723.9ZM611.3 725.6L614.8 722.0L616.4 725.9ZM1115.9 720.9L1111.1 722.5L1111.5 718.3ZM1134.1 719.4L1129.4 721.4L1129.5 717.2ZM1152.2 718.6L1147.6 720.8L1147.5 716.6ZM1170.2 718.1L1165.8 720.4L1165.5 716.2ZM1188.3 717.7L1183.9 720.2L1183.6 716.0ZM1195.7 718.5L1191.3 721.0L1190.9 716.8ZM530.8 733.6L535.9 733.5L534.3 737.4ZM537.8 738.9L542.0 736.1L542.7 740.3ZM557.3 743.6L560.6 739.7L562.4 743.6ZM577.0 746.3L579.5 741.9L581.9 745.4ZM597.1 748.7L598.8 743.9L601.8 746.9ZM619.5 751.9L619.8 746.8L623.5 748.7ZM647.6 753.7L645.0 749.4L649.2 748.9ZM1077.0 753.5L1075.8 748.6L1080.0 749.4ZM1109.4 749.9L1104.9 747.7L1108.2 745.0ZM1132.1 744.3L1127.1 744.1L1129.0 740.3ZM1151.5 741.2L1146.5 741.9L1147.6 737.9ZM1170.0 739.3L1165.1 740.6L1165.8 736.5ZM1188.3 738.2L1183.5 739.8L1183.9 735.6ZM1195.7 736.7L1190.9 738.5L1191.2 734.3ZM530.5 754.8L534.5 751.8L535.4 755.9ZM543.2 766.3L544.8 761.5L547.9 764.3ZM564.2 768.4L564.8 763.4L568.4 765.6ZM584.8 769.7L584.5 764.6L588.4 766.2ZM605.9 770.6L604.8 765.7L608.9 766.5ZM628.3 771.0L626.1 766.5L630.2 766.3ZM651.3 770.1L647.8 766.4L651.8 765.0ZM1079.3 770.9L1077.5 766.2L1081.7 766.5ZM1105.9 769.3L1102.1 766.0L1105.8 764.2ZM1129.3 765.5L1124.5 763.8L1127.4 760.8ZM1149.8 762.2L1144.8 761.7L1146.9 758.0ZM1169.1 759.8L1164.0 760.1L1165.6 756.2ZM1187.7 758.1L1182.7 758.9L1183.9 754.9ZM1195.6 754.8L1190.6 755.9L1191.5 751.8ZM548.1 784.2L543.5 782.0L546.8 779.3ZM558.8 787.8L555.8 783.7L559.9 782.8ZM576.6 787.8L573.6 783.7L577.8 782.9ZM596.1 787.5L592.9 783.6L596.9 782.5ZM616.6 786.6L612.8 783.3L616.7 781.6ZM637.4 785.1L633.1 782.5L636.6 780.1ZM657.3 783.8L652.6 781.7L655.8 778.9ZM674.0 784.9L669.6 782.3L673.0 779.9ZM1057.8 787.6L1056.9 782.6L1061.0 783.6ZM1081.5 788.1L1079.1 783.6L1083.3 783.4ZM1105.2 786.8L1101.5 783.3L1105.4 781.7ZM1127.6 784.2L1123.1 781.9L1126.3 779.3ZM1148.4 781.5L1143.5 780.3L1146.1 777.0ZM1168.0 779.2L1163.0 778.8L1165.0 775.1ZM1187.0 777.4L1181.9 777.6L1183.6 773.7ZM1195.3 772.7L1190.3 773.2L1191.6 769.3ZM554.1 791.7L549.2 792.7L550.1 788.6ZM569.7 797.6L564.7 796.8L567.0 793.3ZM586.6 799.2L581.7 797.8L584.5 794.6ZM605.0 798.8L600.1 797.5L602.7 794.3ZM624.1 797.4L619.1 796.6L621.5 793.1ZM643.4 795.4L638.3 795.3L640.2 791.5ZM662.2 793.8L657.1 794.2L658.6 790.3ZM679.9 794.8L674.8 794.9L676.5 791.0ZM1064.9 805.1L1062.1 800.8L1066.2 800.2ZM1084.8 804.7L1081.6 800.8L1085.6 799.7ZM1106.0 803.5L1102.1 800.3L1105.9 798.5ZM1127.1 801.7L1122.7 799.3L1126.0 796.8ZM1147.5 799.7L1142.7 798.1L1145.5 795.0ZM1167.1 797.8L1162.2 796.8L1164.6 793.4ZM1186.2 796.1L1181.2 795.8L1183.2 792.1ZM1195.1 790.5L1190.1 790.5L1191.8 786.7ZM554.6 803.7L550.1 806.1L549.8 801.9ZM572.5 807.4L567.7 808.8L568.3 804.7ZM590.4 808.9L585.4 809.9L586.4 805.8ZM608.5 808.6L603.6 809.7L604.5 805.6ZM626.9 807.2L622.1 808.6L622.6 804.5ZM645.1 804.9L640.5 807.0L640.5 802.8ZM663.0 802.1L658.8 804.9L658.2 800.8ZM679.9 798.0L676.5 801.7L674.9 797.8ZM686.2 787.9L687.1 792.8L683.0 791.8ZM1060.8 810.1L1055.8 810.8L1057.1 806.8ZM1072.9 818.8L1068.4 816.4L1071.8 813.9ZM1088.8 820.2L1084.7 817.2L1088.4 815.2ZM1107.7 819.8L1103.5 817.0L1107.0 814.8ZM1127.4 818.6L1122.9 816.3L1126.2 813.7ZM1147.1 817.2L1142.4 815.5L1145.3 812.5ZM1166.5 815.7L1161.6 814.5L1164.2 811.2ZM1185.6 814.3L1180.6 813.6L1182.9 810.1ZM1194.9 808.1L1189.9 807.7L1191.8 804.0ZM553.9 817.0L550.1 820.3L548.8 816.3ZM572.5 819.1L568.3 822.0L567.6 817.8ZM590.7 820.0L586.4 822.6L585.9 818.4ZM608.7 819.5L604.5 822.3L603.9 818.1ZM626.6 818.1L622.6 821.1L621.6 817.1ZM644.0 815.7L640.4 819.3L638.9 815.4ZM660.4 812.4L657.7 816.7L655.4 813.2ZM674.4 808.1L673.3 813.0L670.0 810.5ZM683.0 804.5L684.8 809.2L680.6 809.0ZM690.5 807.3L694.7 810.0L691.2 812.3ZM1043.5 822.7L1038.8 824.7L1039.0 820.5ZM1060.7 827.8L1055.6 828.2L1057.0 824.3ZM1075.9 833.0L1071.0 831.8L1073.6 828.5ZM1091.6 835.5L1087.0 833.3L1090.2 830.6ZM1109.2 835.9L1104.7 833.5L1108.0 830.9ZM1128.0 835.3L1123.4 833.2L1126.6 830.5ZM1147.1 834.4L1142.3 832.6L1145.3 829.7ZM1166.2 833.3L1161.3 832.0L1164.0 828.7ZM1185.1 832.2L1180.2 831.3L1182.6 827.8ZM1194.7 825.6L1189.7 825.0L1191.9 821.4ZM552.5 830.9L549.5 835.0L547.5 831.2ZM571.2 832.1L567.9 835.9L566.2 832.0ZM589.5 832.4L586.0 836.1L584.4 832.3ZM607.3 831.8L604.0 835.7L602.3 831.9ZM624.7 830.4L621.8 834.5L619.7 830.9ZM641.4 828.3L639.1 832.8L636.4 829.5ZM656.8 825.6L655.5 830.5L652.3 827.8ZM670.3 822.9L670.6 827.9L666.7 826.4ZM681.4 821.6L683.7 826.2L679.5 826.3ZM692.3 823.4L696.2 826.6L692.4 828.5ZM705.5 827.0L710.3 828.7L707.3 831.7ZM1019.2 852.6L1014.6 850.4L1017.8 847.7ZM1041.2 847.9L1036.2 847.4L1038.3 843.8ZM1059.2 848.1L1054.2 847.6L1056.3 843.9ZM1076.0 850.1L1071.1 848.9L1073.7 845.6ZM1092.6 851.7L1087.9 849.9L1090.9 846.9ZM1110.1 852.2L1105.5 850.2L1108.6 847.4ZM1128.4 852.1L1123.8 850.1L1126.8 847.3ZM1147.1 851.5L1142.4 849.8L1145.3 846.8ZM1166.0 850.7L1161.1 849.3L1163.9 846.1ZM1184.8 849.9L1179.8 848.7L1182.4 845.4ZM1196.8 844.5L1191.8 843.6L1194.1 840.2ZM550.8 845.5L548.5 850.0L545.9 846.7ZM569.4 846.0L566.9 850.4L564.4 847.0ZM587.4 846.0L585.0 850.4L582.5 847.0ZM605.1 845.3L602.8 849.9L600.2 846.6ZM622.1 844.1L620.2 848.8L617.3 845.8ZM638.3 842.4L637.1 847.4L633.8 844.8ZM653.4 840.6L653.3 845.6L649.5 843.8ZM667.1 839.1L668.3 844.0L664.2 843.2ZM679.7 838.9L682.3 843.2L678.2 843.8ZM692.1 840.7L696.0 843.9L692.3 845.8ZM705.6 844.1L710.3 845.8L707.4 848.8ZM720.7 848.2L725.8 848.5L723.8 852.2ZM737.4 852.0L742.3 851.1L741.3 855.2ZM983.1 869.6L978.5 867.5L981.7 864.8ZM994.2 873.3L991.0 869.4L995.1 868.3ZM1016.7 871.5L1012.6 868.6L1016.2 866.5ZM1038.3 868.8L1033.6 867.0L1036.6 864.1ZM1057.4 867.8L1052.5 866.4L1055.3 863.2ZM1075.2 868.1L1070.4 866.6L1073.2 863.5ZM1092.7 868.8L1087.9 867.0L1090.9 864.0ZM1110.4 869.1L1105.7 867.2L1108.8 864.3ZM1128.6 869.1L1123.9 867.2L1127.0 864.3ZM1147.1 868.7L1142.3 867.0L1145.3 864.0ZM1165.7 868.1L1160.9 866.6L1163.7 863.5ZM1184.4 867.4L1179.5 866.2L1182.2 862.9ZM1196.6 861.9L1191.6 860.9L1194.1 857.5ZM548.8 860.5L547.3 865.3L544.2 862.5ZM567.1 860.7L565.5 865.5L562.5 862.6ZM585.0 860.4L583.5 865.3L580.4 862.5ZM602.4 859.8L601.1 864.7L597.8 862.1ZM619.1 858.8L618.3 863.8L614.8 861.5ZM635.1 857.6L635.0 862.7L631.2 860.9ZM650.1 856.5L651.0 861.5L646.9 860.4ZM664.2 856.0L666.2 860.6L662.0 860.5ZM677.6 856.5L680.7 860.4L676.7 861.5ZM690.8 858.6L695.0 861.4L691.4 863.6ZM704.7 862.2L709.6 863.6L706.9 866.8ZM719.9 867.0L725.0 866.8L723.4 870.7ZM736.8 872.6L741.5 870.7L741.3 874.9ZM755.8 879.1L759.5 875.7L760.9 879.6ZM780.3 887.8L781.3 882.8L784.7 885.2ZM940.9 890.2L937.5 886.5L941.5 885.1ZM965.8 886.1L961.1 884.2L964.1 881.3ZM982.8 887.1L978.2 884.8L981.5 882.2ZM998.2 888.9L994.2 885.9L997.8 883.8ZM1017.0 888.5L1012.8 885.7L1016.4 883.5ZM1036.8 887.3L1032.3 885.0L1035.6 882.4ZM1055.9 886.5L1051.3 884.5L1054.4 881.6ZM1074.3 886.2L1069.6 884.3L1072.6 881.5ZM1092.3 886.3L1087.6 884.4L1090.7 881.5ZM1110.3 886.4L1105.6 884.4L1108.7 881.6ZM1128.5 886.3L1123.9 884.4L1126.9 881.5ZM1147.0 886.0L1142.2 884.2L1145.2 881.2ZM1165.5 885.5L1160.7 883.9L1163.6 880.8ZM1184.1 885.0L1179.3 883.6L1182.0 880.4ZM1196.4 879.4L1191.5 878.2L1194.1 874.9ZM546.6 875.9L545.9 880.9L542.4 878.7ZM564.7 875.9L563.9 880.9L560.4 878.6ZM582.3 875.6L581.7 880.6L578.1 878.5ZM599.5 875.1L599.2 880.1L595.5 878.2ZM616.0 874.4L616.3 879.4L612.4 877.9ZM631.9 873.6L632.8 878.6L628.7 877.6ZM647.0 873.2L648.7 877.9L644.6 877.6ZM661.4 873.3L664.1 877.5L659.9 878.1ZM675.3 874.4L678.9 877.9L675.1 879.5ZM689.1 876.9L693.6 879.2L690.3 881.8ZM703.6 880.9L708.5 881.7L706.2 885.2ZM719.3 886.1L724.3 885.3L723.2 889.3ZM736.9 892.1L741.3 889.6L741.6 893.8ZM756.7 898.4L759.9 894.5L761.8 898.2ZM779.0 903.9L780.5 899.0L783.6 901.8ZM800.1 906.0L800.5 900.9L804.2 903.0ZM816.1 904.6L817.2 899.7L820.6 902.2ZM835.3 905.4L836.1 900.4L839.6 902.7ZM861.0 908.1L859.4 903.3L863.6 903.8ZM885.8 907.6L882.6 903.7L886.6 902.6ZM901.3 908.1L898.7 903.8L902.8 903.3ZM916.9 908.2L914.9 903.6L919.1 903.6ZM939.3 907.8L936.3 903.7L940.4 902.8ZM961.7 906.2L957.7 903.1L961.4 901.2ZM980.8 905.6L976.6 902.8L980.2 900.6ZM998.6 905.8L994.5 902.9L998.1 900.8ZM1017.0 905.6L1012.8 902.8L1016.4 900.6ZM1036.0 905.1L1031.7 902.5L1035.1 900.1ZM1054.9 904.5L1050.4 902.2L1053.7 899.6ZM1073.4 904.1L1068.9 902.0L1072.1 899.3ZM1091.7 904.0L1087.1 901.9L1090.3 899.1ZM1110.0 903.9L1105.4 901.8L1108.5 899.0ZM1128.3 903.7L1123.6 901.7L1126.8 898.8ZM1146.7 903.4L1142.0 901.5L1145.1 898.6ZM1165.2 903.0L1160.5 901.2L1163.4 898.2ZM1183.8 902.5L1179.0 900.9L1181.8 897.8ZM1196.2 896.7L1191.3 895.4L1194.0 892.2ZM544.3 891.8L544.3 896.9L540.5 895.1ZM562.1 891.7L562.2 896.7L558.4 895.1ZM579.5 891.4L579.9 896.5L575.9 895.0ZM596.5 891.0L597.2 896.0L593.1 894.8ZM612.9 890.6L614.1 895.5L610.0 894.7ZM628.7 890.3L630.5 895.0L626.3 894.7ZM643.9 890.3L646.5 894.7L642.3 895.1ZM658.6 891.0L662.0 894.8L658.0 896.1ZM673.0 892.7L677.1 895.6L673.5 897.7ZM687.4 895.6L692.2 897.3L689.3 900.3ZM702.5 899.8L707.6 900.0L705.7 903.7ZM718.9 904.9L723.8 903.6L723.1 907.7ZM737.0 910.4L741.2 907.7L741.9 911.8ZM756.7 915.6L759.9 911.7L761.8 915.5ZM777.6 919.6L779.6 914.9L782.4 918.1ZM797.8 921.6L799.0 916.7L802.3 919.3ZM817.1 922.4L817.9 917.4L821.4 919.7ZM837.4 923.7L837.5 918.6L841.3 920.4ZM859.8 925.1L858.6 920.2L862.7 920.9ZM881.5 925.4L879.3 920.8L883.5 920.7ZM900.3 925.3L897.9 920.9L902.1 920.6ZM918.7 925.3L916.2 920.9L920.4 920.6ZM938.9 925.0L936.0 920.9L940.1 920.1ZM959.6 924.3L956.0 920.7L960.0 919.2ZM979.1 923.7L975.3 920.4L979.1 918.6ZM997.9 923.4L993.9 920.3L997.6 918.3ZM1016.5 923.1L1012.4 920.1L1016.1 918.0ZM1035.3 922.7L1031.1 919.9L1034.6 917.7ZM1054.1 922.2L1049.7 919.7L1053.2 917.3ZM1072.7 921.9L1068.2 919.5L1071.6 916.9ZM1091.1 921.6L1086.6 919.3L1089.9 916.7ZM1109.5 921.4L1105.0 919.2L1108.2 916.5ZM1127.9 921.1L1123.3 919.0L1126.5 916.3ZM1146.4 920.8L1141.8 918.8L1144.9 916.0ZM1164.9 920.4L1160.2 918.6L1163.2 915.7ZM1183.4 920.0L1178.7 918.3L1181.6 915.3ZM1196.0 914.1L1191.1 912.6L1194.0 909.5ZM541.9 908.1L542.7 913.1L538.6 911.9ZM559.5 908.0L560.4 912.9L556.3 911.9ZM576.7 907.8L577.9 912.7L573.8 911.9ZM593.5 907.5L595.1 912.4L590.9 911.9ZM609.9 907.4L611.9 912.1L607.7 912.0ZM625.7 907.5L628.3 911.9L624.1 912.3ZM641.1 908.0L644.3 911.9L640.2 913.0ZM656.0 909.2L659.9 912.4L656.2 914.3ZM670.9 911.3L675.4 913.6L672.1 916.2ZM685.9 914.5L690.9 915.5L688.4 918.9ZM701.8 918.6L706.8 918.3L705.3 922.3ZM718.8 923.4L723.5 921.7L723.2 925.9ZM737.1 928.3L741.2 925.4L742.0 929.5ZM756.7 932.7L759.9 928.8L761.7 932.5ZM776.9 936.0L779.2 931.5L781.8 934.7ZM797.1 938.2L798.6 933.3L801.8 936.1ZM817.2 939.7L818.0 934.7L821.5 937.0ZM837.8 941.0L837.7 935.9L841.5 937.6ZM858.8 942.0L857.9 937.0L862.0 938.0ZM879.5 942.4L877.9 937.7L882.0 938.0ZM899.2 942.5L897.1 937.9L901.3 937.9ZM918.6 942.5L916.2 938.0L920.4 937.7ZM938.4 942.3L935.5 938.1L939.7 937.4ZM958.3 941.9L955.0 938.0L959.1 936.9ZM977.8 941.4L974.2 937.8L978.2 936.3ZM996.9 941.0L993.1 937.6L996.9 935.9ZM1015.8 940.6L1011.8 937.5L1015.6 935.6ZM1034.6 940.3L1030.5 937.3L1034.1 935.2ZM1053.3 939.9L1049.1 937.1L1052.7 934.9ZM1072.0 939.5L1067.7 936.9L1071.1 934.5ZM1090.5 939.2L1086.1 936.7L1089.5 934.3ZM1109.0 938.9L1104.6 936.5L1107.9 934.0ZM1127.5 938.6L1123.0 936.4L1126.3 933.7ZM1146.0 938.3L1141.4 936.2L1144.6 933.5ZM1164.5 938.0L1159.9 936.0L1163.0 933.1ZM1183.1 937.5L1178.4 935.7L1181.4 932.8ZM1195.8 931.5L1191.0 929.8L1193.9 926.8ZM539.5 924.7L541.0 929.6L536.8 929.0ZM556.9 924.7L558.5 929.4L554.4 929.0ZM574.0 924.6L575.9 929.3L571.7 929.1ZM590.7 924.6L593.0 929.1L588.8 929.3ZM607.0 924.7L609.7 929.0L605.6 929.6ZM622.9 925.2L626.1 929.1L622.1 930.2ZM638.4 926.2L642.2 929.5L638.4 931.2ZM653.7 927.7L658.1 930.3L654.7 932.7ZM669.1 930.2L673.9 931.8L671.0 934.8ZM684.8 933.4L689.8 933.9L687.7 937.5ZM701.2 937.4L706.2 936.6L705.1 940.7ZM718.7 941.8L723.3 939.8L723.3 944.0ZM737.3 946.1L741.3 943.0L742.2 947.1ZM756.7 949.9L759.9 946.0L761.8 949.7ZM776.7 952.9L779.1 948.4L781.6 951.7ZM796.9 955.1L798.4 950.3L801.5 953.1ZM817.1 956.8L817.9 951.8L821.4 954.1ZM837.5 958.0L837.5 953.0L841.4 954.8ZM858.1 959.0L857.3 953.9L861.4 955.1ZM878.4 959.5L877.0 954.6L881.2 955.2ZM898.3 959.6L896.4 954.9L900.6 955.2ZM918.0 959.7L915.7 955.1L919.9 955.0ZM937.7 959.5L935.0 955.2L939.2 954.7ZM957.3 959.3L954.3 955.2L958.4 954.3ZM976.8 958.9L973.4 955.1L977.4 953.9ZM995.9 958.5L992.4 955.0L996.3 953.5ZM1014.9 958.2L1011.2 954.8L1015.0 953.1ZM1033.8 957.8L1029.9 954.6L1033.6 952.8ZM1052.6 957.5L1048.5 954.5L1052.2 952.4ZM1071.3 957.1L1067.1 954.3L1070.7 952.1ZM1089.9 956.8L1085.6 954.1L1089.1 951.8ZM1108.5 956.5L1104.1 953.9L1107.6 951.5ZM1127.0 956.2L1122.6 953.7L1126.0 951.2ZM1145.6 955.8L1141.1 953.5L1144.3 950.9ZM1164.1 955.5L1159.5 953.3L1162.7 950.6ZM1182.7 955.1L1178.0 953.1L1181.1 950.3ZM1195.5 948.9L1190.8 947.1L1193.8 944.1ZM537.2 941.7L539.3 946.3L535.1 946.3ZM554.4 941.7L556.7 946.2L552.5 946.4ZM571.4 941.8L574.0 946.2L569.8 946.6ZM588.0 942.0L590.9 946.2L586.8 947.0ZM604.3 942.5L607.7 946.3L603.7 947.5ZM620.3 943.3L624.1 946.6L620.3 948.4ZM636.1 944.6L640.4 947.3L636.9 949.6ZM651.8 946.5L656.5 948.4L653.4 951.3ZM667.6 949.1L672.6 950.0L670.2 953.5ZM683.9 952.4L689.0 952.2L687.3 956.1ZM700.9 956.1L705.8 954.9L705.0 959.0ZM718.7 960.1L723.2 957.8L723.4 962.0ZM737.4 963.9L741.3 960.6L742.4 964.7ZM756.8 967.2L760.0 963.3L761.9 967.0ZM776.7 970.0L779.0 965.5L781.6 968.8ZM796.7 972.1L798.3 967.3L801.4 970.2ZM816.9 973.8L817.8 968.8L821.2 971.2ZM837.2 975.0L837.3 970.0L841.1 971.8ZM857.4 975.9L856.9 970.9L860.9 972.2ZM877.6 976.5L876.4 971.5L880.6 972.4ZM897.5 976.7L895.9 972.0L900.0 972.4ZM917.2 976.8L915.2 972.2L919.4 972.2ZM936.9 976.8L934.4 972.3L938.6 972.0ZM956.5 976.6L953.6 972.4L957.8 971.7ZM975.9 976.3L972.7 972.3L976.8 971.3ZM995.1 976.0L991.7 972.2L995.7 971.0ZM1014.1 975.7L1010.5 972.1L1014.4 970.6ZM1033.0 975.3L1029.3 972.0L1033.1 970.3ZM1051.9 975.0L1048.0 971.8L1051.7 969.9ZM1070.6 974.7L1066.6 971.6L1070.3 969.6ZM1089.3 974.3L1085.1 971.5L1088.7 969.3ZM1107.9 974.0L1103.7 971.3L1107.2 969.0ZM1126.5 973.7L1122.2 971.1L1125.6 968.7ZM1145.1 973.3L1140.7 970.9L1144.1 968.4ZM1163.7 973.0L1159.2 970.7L1162.5 968.1ZM1182.3 972.6L1177.7 970.5L1180.9 967.7ZM1195.3 966.2L1190.7 964.3L1193.8 961.4ZM535.0 959.0L537.6 963.3L533.4 963.8ZM552.1 959.1L554.9 963.3L550.8 964.0ZM568.9 959.4L572.1 963.4L568.0 964.4ZM585.5 959.9L589.1 963.5L585.1 964.9ZM601.9 960.6L605.8 963.8L602.0 965.6ZM618.1 961.7L622.3 964.4L618.8 966.7ZM634.1 963.2L638.7 965.3L635.6 968.1ZM650.2 965.3L655.1 966.6L652.4 969.9ZM666.5 968.0L671.6 968.4L669.5 972.1ZM683.3 971.2L688.3 970.5L687.0 974.6ZM700.7 974.7L705.5 973.0L705.0 977.2ZM718.8 978.2L723.1 975.7L723.6 979.8ZM737.6 981.6L741.4 978.3L742.6 982.3ZM759.3 983.4L762.4 979.4L764.4 983.1ZM780.9 983.8L783.3 979.4L785.9 982.7ZM802.2 983.3L803.8 978.5L806.9 981.4ZM822.9 981.9L823.8 977.0L827.3 979.4ZM841.8 982.4L842.0 977.4L845.8 979.3ZM860.7 982.8L860.3 977.7L864.2 979.2ZM879.5 983.0L878.6 978.0L882.6 979.0ZM898.3 983.1L896.8 978.3L901.0 978.8ZM917.0 983.2L915.1 978.5L919.3 978.7ZM935.7 983.2L933.4 978.7L937.6 978.5ZM954.4 983.1L951.7 978.8L955.9 978.3ZM972.9 983.0L970.0 978.9L974.1 978.1ZM991.5 982.9L988.3 979.0L992.3 978.0ZM1010.0 982.8L1006.5 979.1L1010.5 977.8ZM1028.4 982.7L1024.8 979.2L1028.7 977.7ZM1046.8 982.6L1043.0 979.2L1046.9 977.5ZM1065.2 982.5L1061.3 979.3L1065.0 977.4ZM1083.5 982.3L1079.5 979.3L1083.2 977.3ZM1101.9 982.2L1097.7 979.3L1101.3 977.2ZM1120.2 982.1L1115.9 979.4L1119.4 977.1ZM1138.5 982.0L1134.1 979.4L1137.6 977.0ZM1158.4 984.0L1154.0 981.6L1157.3 979.0ZM1176.8 983.8L1172.2 981.5L1175.5 978.9ZM1195.1 983.6L1190.5 981.5L1193.7 978.7Z" fill="#000"/></g><g clip-path="url(#cpl)" fill="none" stroke-width="1.2" stroke-linejoin="round"><path d="M917.0 372.0C909.2 372.0 880.4 372.0 870.0 372.0C859.6 372.0 859.4 370.9 854.6 372.0C849.8 373.1 846.6 375.8 841.0 378.6C835.4 381.4 827.1 383.4 821.0 388.7C814.9 394.0 810.0 405.4 804.4 410.4C798.8 415.4 796.0 414.9 787.6 418.8C779.2 422.7 765.1 429.1 754.0 433.8C742.9 438.5 731.8 443.3 720.7 447.2C709.6 451.1 698.4 453.8 687.3 457.2C676.1 460.6 664.9 463.4 653.8 467.3C642.6 471.2 631.5 476.2 620.4 480.7C609.3 485.1 595.4 489.6 587.0 494.0C578.6 498.4 573.9 500.7 570.0 507.4C566.1 514.1 565.2 525.3 563.5 534.2C561.8 543.1 561.7 552.1 560.0 561.0C558.3 569.9 555.2 579.9 553.5 587.7C551.8 595.5 550.9 600.0 550.0 607.8C549.1 615.6 549.2 627.6 548.4 634.6C547.6 641.6 545.8 643.5 545.0 650.0C544.2 656.5 543.4 665.2 543.4 673.5C543.4 681.8 543.3 691.1 545.0 700.0C546.7 708.9 549.3 715.8 553.5 727.0C557.7 738.2 564.4 756.4 570.0 767.0C575.6 777.6 581.4 782.7 587.0 790.5C592.6 798.3 598.0 805.6 603.6 814.0C609.2 822.4 614.8 832.4 620.4 840.7C626.0 849.0 631.4 857.9 637.0 864.0C642.6 870.1 648.2 873.6 653.8 877.5C659.4 881.4 664.9 883.7 670.5 887.6C676.1 891.5 681.7 897.1 687.3 901.0C692.9 904.9 698.4 907.1 704.0 911.0C709.6 914.9 715.7 919.4 720.7 924.4C725.7 929.4 729.5 934.9 734.0 941.0C738.5 947.1 743.0 953.7 747.5 961.0C752.0 968.3 758.8 980.7 761.0 984.6" stroke="#f2f200" stroke-width="1.25"/><path d="M950.4 380.3C956.0 382.5 972.6 389.2 983.8 393.7C994.9 398.1 1008.9 403.1 1017.3 407.0C1025.7 410.9 1028.4 413.1 1034.0 417.0C1039.6 420.9 1043.5 426.6 1050.7 430.5C1058.0 434.4 1070.2 436.6 1077.5 440.5C1084.8 444.4 1090.3 449.5 1094.2 454.0C1098.1 458.5 1100.4 461.7 1101.0 467.3C1101.6 472.9 1098.7 481.8 1097.6 487.4C1096.5 493.0 1094.2 495.7 1094.2 500.7C1094.2 505.7 1094.8 511.9 1097.6 517.5C1100.4 523.1 1106.0 528.1 1111.0 534.2C1116.0 540.3 1122.7 548.2 1127.7 554.3C1132.7 560.4 1137.7 564.9 1141.0 571.0C1144.3 577.1 1146.7 584.3 1147.8 591.0C1148.9 597.7 1147.5 603.7 1147.8 611.0C1148.1 618.3 1148.9 628.1 1149.4 634.6C1149.9 641.1 1149.6 645.8 1151.0 650.0C1152.4 654.2 1154.4 656.1 1157.8 660.0C1161.2 663.9 1166.8 669.0 1171.2 673.5C1175.7 678.0 1180.9 681.8 1184.5 686.8C1188.1 691.8 1190.9 697.5 1193.0 703.6C1195.1 709.7 1196.3 720.3 1197.0 723.6" stroke="#f2f200" stroke-width="1.25"/><path d="M1197.0 757.0C1196.0 760.9 1193.5 774.2 1191.3 780.5C1189.1 786.8 1185.2 792.6 1184.0 795.0" stroke="#f2f200" stroke-width="1.25"/><path d="M1172.0 815.0C1168.5 819.3 1157.3 833.6 1151.0 840.7C1144.7 847.8 1140.0 851.9 1134.4 857.5C1128.8 863.1 1123.2 868.6 1117.6 874.2C1112.0 879.8 1106.6 886.0 1101.0 891.0C1095.4 896.0 1089.8 899.8 1084.2 904.3C1078.6 908.8 1073.1 912.7 1067.5 917.7C1061.9 922.7 1056.3 928.9 1050.7 934.4C1045.1 939.9 1039.6 946.0 1034.0 951.0C1028.4 956.0 1022.9 960.0 1017.3 964.5C1011.7 969.0 1005.0 974.6 1000.5 978.0C996.0 981.4 992.2 983.5 990.5 984.6" stroke="#f2f200" stroke-width="1.25"/><path d="M801.0 440.5C801.0 438.0 808.8 437.3 814.4 437.0C820.0 436.7 830.6 437.1 834.5 438.8C838.4 440.5 839.5 444.7 837.8 447.2C836.1 449.7 828.3 453.2 824.4 454.0C820.5 454.8 818.3 454.4 814.4 452.2C810.5 449.9 801.0 443.0 801.0 440.5Z" stroke="#f2f200"/><path d="M836.2 461.0C839.3 459.3 849.0 452.9 854.6 450.6C860.2 448.3 865.8 447.7 870.0 447.2C874.2 446.7 878.3 447.4 880.0 447.5" stroke="#f2f200"/><path d="M905.0 458.0C907.0 458.4 917.8 459.9 917.0 460.6C916.2 461.3 906.7 462.2 900.0 462.2C893.3 462.2 883.5 460.3 876.8 460.6C870.1 460.9 864.5 463.2 860.0 464.0C855.5 464.8 853.2 465.1 850.0 465.6C846.8 466.2 843.3 467.6 841.0 467.3C838.7 467.0 837.0 464.6 836.2 464.0" stroke="#f2f200"/><circle cx="739" cy="668.4" r="8.2" stroke="#f2f200"/><path d="M724.5 808.0C724.8 806.4 729.0 804.2 731.0 804.5C733.0 804.8 736.8 808.4 736.5 810.0C736.2 811.6 731.0 814.3 729.0 814.0C727.0 813.7 724.2 809.6 724.5 808.0Z" stroke="#f2f200"/><ellipse cx="997.2" cy="823.3" rx="9" ry="4.6" transform="rotate(-25 997.2 823.3)" stroke="#f2f200"/><path d="M969.4 639v6" stroke="#f2f200"/><path d="M712.4 484.0C714.9 484.6 722.7 486.3 727.4 487.4C732.1 488.5 736.3 488.8 740.8 490.7C745.3 492.6 748.6 497.3 754.2 499.0C759.8 500.7 767.0 500.7 774.3 500.7C781.5 500.7 791.0 498.4 797.7 499.0C804.4 499.6 808.9 502.0 814.4 504.0C819.9 506.0 825.4 509.1 831.0 510.8C836.6 512.5 842.1 513.5 847.9 514.0C853.7 514.5 863.0 513.8 866.0 513.8" stroke="#ff00ff"/><path d="M881.8 487.4C884.8 486.5 894.1 483.2 900.0 482.3C905.9 481.4 911.4 481.4 917.0 481.7C922.6 482.0 928.0 482.8 933.6 484.0C939.2 485.2 944.8 486.8 950.4 489.0C956.0 491.2 961.4 495.2 967.0 497.4C972.6 499.6 978.2 500.7 983.8 502.4C989.4 504.1 994.9 505.5 1000.5 507.4C1006.1 509.3 1011.7 511.2 1017.3 514.0C1022.9 516.8 1028.4 520.4 1034.0 524.0C1039.6 527.6 1047.4 533.6 1050.7 535.9C1054.0 538.1 1049.5 532.8 1054.0 537.5C1058.5 542.2 1071.3 557.0 1077.5 564.3C1083.7 571.5 1087.9 576.0 1091.0 581.0C1094.1 586.0 1095.5 589.9 1096.0 594.4C1096.5 598.9 1094.5 605.6 1094.2 607.8" stroke="#ff00ff"/><path d="M1094.2 660.0C1096.4 663.9 1104.8 676.2 1107.6 683.5C1110.4 690.8 1111.0 695.8 1111.0 703.6C1111.0 711.4 1109.8 722.5 1107.6 730.3C1105.4 738.1 1101.5 744.8 1097.6 750.4C1093.7 756.0 1089.2 760.2 1084.2 763.8C1079.2 767.4 1072.5 770.0 1067.5 772.0C1062.5 774.0 1058.8 775.5 1054.0 775.5C1049.2 775.5 1041.2 775.1 1039.0 772.0C1036.8 768.9 1039.3 762.3 1040.7 757.0C1042.1 751.7 1046.0 745.4 1047.4 740.4C1048.8 735.4 1049.8 727.6 1049.0 727.0C1048.2 726.4 1045.5 732.5 1042.4 737.0C1039.4 741.5 1036.0 748.2 1030.7 753.8C1025.4 759.4 1017.3 766.0 1010.6 770.5C1003.9 775.0 997.8 777.4 990.5 780.5C983.2 783.6 974.2 787.9 967.0 789.0C959.8 790.1 953.7 786.7 947.0 787.2C940.3 787.7 933.1 789.4 927.0 792.2C920.9 795.0 916.4 800.9 910.2 804.0C904.0 807.1 896.7 808.4 890.0 810.6C883.3 812.8 875.8 815.3 870.0 817.3C864.2 819.2 856.1 820.1 855.0 822.3C853.9 824.5 858.6 827.9 863.4 830.7C868.1 833.5 876.8 837.3 883.5 839.0C890.2 840.7 897.9 839.9 903.5 840.7C909.1 841.5 913.6 842.0 917.0 844.0C920.4 846.0 920.3 850.7 923.6 852.4C926.9 854.1 932.5 854.3 937.0 854.0C941.5 853.7 948.2 851.3 950.4 850.8" stroke="#ff00ff"/><path d="M694.0 495.7C691.2 497.6 681.7 503.2 677.2 507.4C672.7 511.6 670.0 516.3 667.2 520.8C664.4 525.3 662.7 530.3 660.5 534.2C658.3 538.1 658.3 540.3 653.8 544.2C649.3 548.1 638.7 552.6 633.7 557.6C628.7 562.6 626.5 568.7 623.7 574.3C620.9 579.9 618.4 585.4 617.0 591.0C615.6 596.6 615.7 601.6 615.3 607.8C614.9 613.9 614.4 621.2 614.7 627.9C615.0 634.6 616.0 642.6 617.0 648.0C618.0 653.4 620.4 653.0 620.4 660.0C620.4 667.0 618.1 682.3 617.0 690.0C615.9 697.7 614.2 703.3 613.7 706.0" stroke="#ff00ff"/><path d="M615.0 738.0C615.3 739.2 614.4 740.2 617.0 745.0C619.6 749.8 624.3 760.5 630.4 767.0C636.5 773.5 645.4 779.4 653.8 783.9C662.2 788.4 671.7 787.9 680.6 794.0C689.5 800.1 699.6 813.5 707.4 820.7C715.2 827.9 720.7 832.4 727.4 837.4C734.1 842.4 739.7 845.8 747.5 850.8C755.3 855.8 767.6 863.3 774.3 867.5C781.0 871.7 785.4 874.6 787.6 876.0" stroke="#ff00ff"/><path d="M818.0 893.0C821.3 893.8 831.7 896.6 837.8 897.6C843.9 898.6 847.6 899.3 854.6 899.3C861.6 899.3 871.4 898.3 880.0 897.6C888.6 896.9 897.7 896.9 906.0 895.0C914.3 893.1 922.6 890.5 930.0 886.0C937.4 881.5 947.0 871.0 950.4 868.0" stroke="#ff00ff"/><path d="M734.0 628.0C737.3 629.1 747.3 630.7 754.0 634.6C760.7 638.5 769.8 648.2 774.3 651.3C778.8 654.4 778.5 650.8 781.0 653.4C783.5 656.0 788.8 661.8 789.3 666.8C789.8 671.8 787.9 677.4 784.3 683.5C780.7 689.6 771.8 698.0 767.6 703.6C763.4 709.2 759.2 713.1 759.2 717.0C759.2 720.9 762.9 722.5 767.6 727.0C772.3 731.5 781.5 735.9 787.6 743.7C793.7 751.5 798.8 764.3 804.4 773.8C810.0 783.3 815.7 793.1 821.0 800.6C826.3 808.1 836.2 814.5 836.2 819.0C836.2 823.5 826.9 824.3 821.0 827.4C815.1 830.5 807.7 834.9 801.0 837.4C794.3 839.9 787.7 841.2 781.0 842.4C774.3 843.6 764.3 844.4 761.0 844.8" stroke="#ff00ff"/><path d="M712.4 655.0C710.7 658.1 704.8 667.1 702.3 673.5C699.8 679.9 697.3 686.2 697.3 693.5C697.3 700.8 698.4 709.8 702.3 717.0C706.2 724.2 714.8 730.9 720.7 737.0C726.6 743.1 734.5 748.2 737.5 753.8C740.5 759.4 740.7 765.5 739.0 770.5C737.3 775.5 733.5 779.8 727.4 784.0C721.3 788.2 706.5 793.7 702.3 795.6" stroke="#ff00ff"/><ellipse cx="855" cy="663" rx="20" ry="9.5" stroke="#ff00ff"/><path d="M1003.9 561.0C1004.5 557.4 1015.9 548.1 1020.6 552.6C1025.3 557.1 1032.8 584.1 1032.3 587.7C1031.8 591.3 1022.0 578.8 1017.3 574.3C1012.6 569.8 1003.3 564.6 1003.9 561.0Z" stroke="#ff00ff"/><circle cx="970.4" cy="641.3" r="14.5" stroke="#ff00ff"/><ellipse cx="1047.4" cy="644.6" rx="18.5" ry="15" stroke="#ff00ff"/><ellipse cx="658.8" cy="636.2" rx="3" ry="8" stroke="#ff00ff"/><ellipse cx="642" cy="655" rx="2.5" ry="4" stroke="#ff00ff"/><path d="M946.5 750l5-6" stroke="#ff00ff"/><path d="M663.9 577.7C666.1 575.8 671.6 568.8 677.2 566.0C682.8 563.2 691.4 560.7 697.3 561.0C703.2 561.3 709.0 563.7 712.4 567.6C715.8 571.5 717.1 578.3 717.4 584.4C717.7 590.5 716.2 598.3 714.0 604.4C711.8 610.5 708.5 616.2 704.0 621.2C699.5 626.2 692.9 633.2 687.3 634.6C681.7 636.0 674.5 631.8 670.5 629.5C666.5 627.2 664.2 622.4 663.0 621.0" stroke="#00ffff"/><path d="M762.0 567.6C762.9 563.7 763.9 550.3 767.6 544.2C771.3 538.1 778.7 532.8 784.3 530.8C789.9 528.8 794.9 530.5 801.0 532.5C807.1 534.5 815.4 540.0 821.0 542.5C826.6 545.0 828.9 547.3 834.5 547.6C840.1 547.9 848.7 545.6 854.6 544.2C860.5 542.8 864.6 538.4 870.0 539.0C875.4 539.6 881.8 543.4 886.8 547.6C891.8 551.8 897.2 558.2 900.0 564.3C902.8 570.4 904.6 578.3 903.5 584.4C902.4 590.5 897.4 597.1 893.5 601.0C889.6 604.9 885.0 607.0 880.0 607.8C875.0 608.6 868.4 606.8 863.4 606.0C858.4 605.2 853.7 604.2 850.0 602.8C846.3 601.4 844.7 598.0 841.0 597.7C837.3 597.4 833.3 599.6 827.8 601.0C822.2 602.4 814.4 604.9 807.7 606.0C801.0 607.1 793.2 609.7 787.6 607.8C782.0 605.9 778.2 599.4 774.3 594.4C770.4 589.4 765.7 580.7 764.0 578.0" stroke="#00ffff"/><ellipse cx="943.7" cy="525.8" rx="23" ry="17" transform="rotate(10 943.7 525.8)" stroke="#00ffff"/><path d="M1069.0 601.0C1069.2 598.5 1072.6 598.3 1074.0 601.0C1075.4 603.7 1077.8 614.5 1077.5 617.0C1077.2 619.5 1073.9 618.7 1072.5 616.0C1071.1 613.3 1068.8 603.5 1069.0 601.0Z" stroke="#00ffff"/><path d="M842.8 729.0C844.8 724.8 850.4 709.5 854.6 703.6C858.8 697.7 863.2 695.7 868.0 693.5C872.8 691.3 877.0 692.5 883.5 690.2C890.0 688.0 899.6 683.1 906.9 680.0C914.1 676.9 921.4 673.5 927.0 671.8C932.6 670.1 935.8 669.2 940.3 670.0C944.8 670.8 948.7 674.0 953.7 676.8C958.7 679.6 964.3 685.1 970.4 686.8C976.5 688.5 984.9 687.1 990.5 686.8C996.1 686.5 1000.0 684.1 1003.9 685.2C1007.8 686.3 1011.9 689.9 1013.9 693.5C1015.9 697.1 1016.1 701.4 1015.6 707.0C1015.1 712.6 1013.1 720.3 1010.6 727.0C1008.1 733.7 1004.4 741.4 1000.5 747.0C996.6 752.6 991.7 757.3 987.2 760.4C982.8 763.5 977.7 765.5 973.8 765.5C969.9 765.5 965.7 763.5 963.7 760.4C961.7 757.3 961.7 751.2 962.0 747.0C962.3 742.8 966.2 737.8 965.4 735.3C964.6 732.8 960.6 731.1 957.0 732.0C953.4 732.9 948.2 736.8 943.7 740.4C939.2 744.0 934.8 749.9 930.3 753.8C925.8 757.7 922.0 760.7 917.0 763.8C912.0 766.9 905.6 770.2 900.0 772.2C894.4 774.2 889.0 775.5 883.5 775.5C878.0 775.5 871.5 773.9 866.7 772.2C861.9 770.5 858.1 768.2 854.6 765.5C851.1 762.8 847.0 757.6 845.5 756.0" stroke="#00ffff"/><path d="M647.0 686.8C648.7 687.4 653.6 685.2 657.0 690.2C660.4 695.2 665.2 708.6 667.2 717.0C669.2 725.4 669.5 734.8 668.9 740.4C668.3 746.0 664.7 748.7 663.9 750.4" stroke="#00ffff"/><path d="M1077.5 700.0C1075.8 702.8 1069.8 711.4 1067.5 717.0C1065.2 722.6 1064.0 730.1 1064.0 733.7C1064.0 737.3 1066.9 737.9 1067.5 738.7" stroke="#00ffff"/><path d="M575.2 318.4C578.3 320.3 588.9 326.9 593.6 330.0C598.3 333.1 601.9 335.7 603.6 336.8" stroke="#0000ff"/><path d="M630.4 353.5C634.3 354.9 646.5 359.2 653.8 362.0C661.0 364.8 669.1 366.7 673.9 370.3C678.6 373.9 680.6 378.0 682.3 383.6C684.0 389.2 682.6 398.4 684.0 403.7C685.4 409.0 687.3 413.4 690.6 415.4C693.9 417.3 699.0 416.8 704.0 415.4C709.0 414.0 715.1 409.5 720.7 407.0C726.3 404.5 731.4 402.6 737.5 400.4C743.6 398.2 752.8 396.8 757.5 393.7C762.2 390.6 765.4 386.4 766.0 382.0C766.6 377.6 763.0 372.9 761.0 367.0C759.0 361.1 755.9 354.9 754.2 346.8C752.5 338.7 751.4 323.1 750.8 318.4" stroke="#0000ff"/><path d="M1017.3 316.7C1020.6 318.4 1030.7 323.8 1037.4 326.8C1044.1 329.9 1050.7 334.2 1057.4 335.0C1064.1 335.8 1071.6 334.6 1077.5 331.8C1083.4 329.0 1090.1 320.6 1092.6 318.4" stroke="#0000ff"/><path d="M1197.0 470.6C1193.8 471.7 1183.9 474.5 1177.9 477.3C1171.9 480.1 1165.2 483.5 1161.0 487.4C1156.8 491.3 1152.8 496.3 1152.8 500.7C1152.8 505.1 1156.8 510.1 1161.0 514.0C1165.2 517.9 1171.9 521.2 1177.9 524.0C1183.9 526.8 1193.8 529.7 1197.0 530.8" stroke="#0000ff"/><path d="M1197.0 598.0C1196.2 600.0 1192.5 605.7 1192.5 610.0C1192.5 614.3 1196.2 621.7 1197.0 624.0" stroke="#0000ff"/><path d="M530.0 889.2C532.8 894.0 541.2 910.7 546.8 917.7C552.4 924.7 557.9 927.4 563.5 931.0C569.1 934.6 573.5 936.9 580.2 939.4C586.9 941.9 599.7 944.9 603.6 946.0" stroke="#0000ff"/><path d="M637.0 969.5 L643.8 984.6" stroke="#0000ff"/><path d="M730.8 384.0C731.4 381.8 733.8 377.4 736.0 376.0C738.2 374.6 742.0 374.7 744.0 375.5C746.0 376.3 748.2 379.2 748.0 381.0C747.8 382.8 744.8 384.9 743.0 386.5C741.2 388.1 739.2 390.1 737.5 390.5C735.8 390.9 733.6 390.1 732.5 389.0C731.4 387.9 730.2 386.2 730.8 384.0Z" stroke="#00e000" stroke-width="1.5"/></g><path transform="translate(604.0 340.0) rotate(28)" d="M2.0 -7.0L1.0 -6.7L0.3 -5.7L0.0 -4.0L0.0 -3.0L0.3 -1.3L1.0 -0.3L2.0 0.0L2.7 0.0L3.7 -0.3L4.4 -1.3L4.7 -3.0L4.7 -4.0L4.4 -5.7L3.7 -6.7L2.7 -7.0L2.0 -7.0M7.4 -0.7L7.0 -0.3L7.4 0.0L7.7 -0.3L7.4 -0.7M14.4 -4.7L14.1 -3.7L13.4 -3.0L12.4 -2.7L12.1 -2.7L11.1 -3.0L10.4 -3.7L10.1 -4.7L10.1 -5.0L10.4 -6.0L11.1 -6.7L12.1 -7.0L12.4 -7.0L13.4 -6.7L14.1 -6.0L14.4 -4.7L14.4 -3.0L14.1 -1.3L13.4 -0.3L12.4 0.0L11.7 0.0L10.7 -0.3L10.4 -1.0M18.4 -7.0L17.4 -6.7L17.1 -6.0L17.1 -5.4L17.4 -4.7L18.1 -4.4L19.4 -4.0L20.4 -3.7L21.1 -3.0L21.4 -2.3L21.4 -1.3L21.1 -0.7L20.8 -0.3L19.8 0.0L18.4 0.0L17.4 -0.3L17.1 -0.7L16.8 -1.3L16.8 -2.3L17.1 -3.0L17.8 -3.7L18.8 -4.0L20.1 -4.4L20.8 -4.7L21.1 -5.4L21.1 -6.0L20.8 -6.7L19.8 -7.0L18.4 -7.0M27.8 -4.7L27.5 -3.7L26.8 -3.0L25.8 -2.7L25.5 -2.7L24.5 -3.0L23.8 -3.7L23.5 -4.7L23.5 -5.0L23.8 -6.0L24.5 -6.7L25.5 -7.0L25.8 -7.0L26.8 -6.7L27.5 -6.0L27.8 -4.7L27.8 -3.0L27.5 -1.3L26.8 -0.3L25.8 0.0L25.1 0.0L24.1 -0.3L23.8 -1.0" stroke="#0000ff" stroke-width="1.1" fill="none" stroke-linejoin="round" stroke-linecap="square" /><path transform="translate(918.0 372.0) rotate(14)" d="M2.0 -7.0L1.0 -6.7L0.3 -5.7L0.0 -4.0L0.0 -3.0L0.3 -1.3L1.0 -0.3L2.0 0.0L2.7 0.0L3.7 -0.3L4.4 -1.3L4.7 -3.0L4.7 -4.0L4.4 -5.7L3.7 -6.7L2.7 -7.0L2.0 -7.0M7.4 -0.7L7.0 -0.3L7.4 0.0L7.7 -0.3L7.4 -0.7M10.4 -5.4L10.4 -5.7L10.7 -6.4L11.1 -6.7L11.7 -7.0L13.1 -7.0L13.7 -6.7L14.1 -6.4L14.4 -5.7L14.4 -5.0L14.1 -4.4L13.4 -3.4L10.1 0.0L14.7 0.0M18.4 -7.0L17.4 -6.7L17.1 -6.0L17.1 -5.4L17.4 -4.7L18.1 -4.4L19.4 -4.0L20.4 -3.7L21.1 -3.0L21.4 -2.3L21.4 -1.3L21.1 -0.7L20.8 -0.3L19.8 0.0L18.4 0.0L17.4 -0.3L17.1 -0.7L16.8 -1.3L16.8 -2.3L17.1 -3.0L17.8 -3.7L18.8 -4.0L20.1 -4.4L20.8 -4.7L21.1 -5.4L21.1 -6.0L20.8 -6.7L19.8 -7.0L18.4 -7.0M24.1 -7.0L27.8 -7.0L25.8 -4.4L26.8 -4.4L27.5 -4.0L27.8 -3.7L28.1 -2.7L28.1 -2.0L27.8 -1.0L27.1 -0.3L26.1 0.0L25.1 0.0L24.1 -0.3L23.8 -0.7L23.5 -1.3" stroke="#f2f200" stroke-width="1.1" fill="none" stroke-linejoin="round" stroke-linecap="square" /><path transform="translate(880.0 456.0) rotate(12)" d="M2.0 -7.0L1.0 -6.7L0.3 -5.7L0.0 -4.0L0.0 -3.0L0.3 -1.3L1.0 -0.3L2.0 0.0L2.7 0.0L3.7 -0.3L4.4 -1.3L4.7 -3.0L4.7 -4.0L4.4 -5.7L3.7 -6.7L2.7 -7.0L2.0 -7.0M7.4 -0.7L7.0 -0.3L7.4 0.0L7.7 -0.3L7.4 -0.7M10.4 -5.4L10.4 -5.7L10.7 -6.4L11.1 -6.7L11.7 -7.0L13.1 -7.0L13.7 -6.7L14.1 -6.4L14.4 -5.7L14.4 -5.0L14.1 -4.4L13.4 -3.4L10.1 0.0L14.7 0.0M21.1 -6.0L20.8 -6.7L19.8 -7.0L19.1 -7.0L18.1 -6.7L17.4 -5.7L17.1 -4.0L17.1 -2.3L17.4 -1.0L18.1 -0.3L19.1 0.0L19.4 0.0L20.4 -0.3L21.1 -1.0L21.4 -2.0L21.4 -2.3L21.1 -3.4L20.4 -4.0L19.4 -4.4L19.1 -4.4L18.1 -4.0L17.4 -3.4L17.1 -2.3M24.1 -7.0L27.8 -7.0L25.8 -4.4L26.8 -4.4L27.5 -4.0L27.8 -3.7L28.1 -2.7L28.1 -2.0L27.8 -1.0L27.1 -0.3L26.1 0.0L25.1 0.0L24.1 -0.3L23.8 -0.7L23.5 -1.3" stroke="#f2f200" stroke-width="1.1" fill="none" stroke-linejoin="round" stroke-linecap="square" /><path transform="translate(880.0 512.0) rotate(-90)" d="M2.0 -7.0L1.0 -6.7L0.3 -5.7L0.0 -4.0L0.0 -3.0L0.3 -1.3L1.0 -0.3L2.0 0.0L2.7 0.0L3.7 -0.3L4.4 -1.3L4.7 -3.0L4.7 -4.0L4.4 -5.7L3.7 -6.7L2.7 -7.0L2.0 -7.0M7.4 -0.7L7.0 -0.3L7.4 0.0L7.7 -0.3L7.4 -0.7M13.4 -7.0L10.1 -2.3L15.1 -2.3M13.4 -7.0L13.4 0.0M18.8 -7.0L17.8 -6.7L17.1 -5.7L16.8 -4.0L16.8 -3.0L17.1 -1.3L17.8 -0.3L18.8 0.0L19.4 0.0L20.4 -0.3L21.1 -1.3L21.4 -3.0L21.4 -4.0L21.1 -5.7L20.4 -6.7L19.4 -7.0L18.8 -7.0M26.8 -7.0L23.5 -2.3L28.5 -2.3M26.8 -7.0L26.8 0.0" stroke="#ff00ff" stroke-width="1.1" fill="none" stroke-linejoin="round" stroke-linecap="square" /><path transform="translate(765.0 601.0) rotate(-90)" d="M1.0 -5.7L1.7 -6.0L2.7 -7.0L2.7 0.0M7.4 -0.7L7.0 -0.3L7.4 0.0L7.7 -0.3L7.4 -0.7M12.1 -7.0L11.1 -6.7L10.4 -5.7L10.1 -4.0L10.1 -3.0L10.4 -1.3L11.1 -0.3L12.1 0.0L12.7 0.0L13.7 -0.3L14.4 -1.3L14.7 -3.0L14.7 -4.0L14.4 -5.7L13.7 -6.7L12.7 -7.0L12.1 -7.0M18.4 -7.0L17.4 -6.7L17.1 -6.0L17.1 -5.4L17.4 -4.7L18.1 -4.4L19.4 -4.0L20.4 -3.7L21.1 -3.0L21.4 -2.3L21.4 -1.3L21.1 -0.7L20.8 -0.3L19.8 0.0L18.4 0.0L17.4 -0.3L17.1 -0.7L16.8 -1.3L16.8 -2.3L17.1 -3.0L17.8 -3.7L18.8 -4.0L20.1 -4.4L20.8 -4.7L21.1 -5.4L21.1 -6.0L20.8 -6.7L19.8 -7.0L18.4 -7.0M25.5 -7.0L24.5 -6.7L23.8 -5.7L23.5 -4.0L23.5 -3.0L23.8 -1.3L24.5 -0.3L25.5 0.0L26.1 0.0L27.1 -0.3L27.8 -1.3L28.1 -3.0L28.1 -4.0L27.8 -5.7L27.1 -6.7L26.1 -7.0L25.5 -7.0" stroke="#00ffff" stroke-width="1.1" fill="none" stroke-linejoin="round" stroke-linecap="square" /><path transform="translate(662.0 617.0) rotate(-85)" d="M1.0 -5.7L1.7 -6.0L2.7 -7.0L2.7 0.0M7.4 -0.7L7.0 -0.3L7.4 0.0L7.7 -0.3L7.4 -0.7M12.1 -7.0L11.1 -6.7L10.4 -5.7L10.1 -4.0L10.1 -3.0L10.4 -1.3L11.1 -0.3L12.1 0.0L12.7 0.0L13.7 -0.3L14.4 -1.3L14.7 -3.0L14.7 -4.0L14.4 -5.7L13.7 -6.7L12.7 -7.0L12.1 -7.0M18.4 -7.0L17.4 -6.7L17.1 -6.0L17.1 -5.4L17.4 -4.7L18.1 -4.4L19.4 -4.0L20.4 -3.7L21.1 -3.0L21.4 -2.3L21.4 -1.3L21.1 -0.7L20.8 -0.3L19.8 0.0L18.4 0.0L17.4 -0.3L17.1 -0.7L16.8 -1.3L16.8 -2.3L17.1 -3.0L17.8 -3.7L18.8 -4.0L20.1 -4.4L20.8 -4.7L21.1 -5.4L21.1 -6.0L20.8 -6.7L19.8 -7.0L18.4 -7.0M25.5 -7.0L24.5 -6.7L23.8 -5.7L23.5 -4.0L23.5 -3.0L23.8 -1.3L24.5 -0.3L25.5 0.0L26.1 0.0L27.1 -0.3L27.8 -1.3L28.1 -3.0L28.1 -4.0L27.8 -5.7L27.1 -6.7L26.1 -7.0L25.5 -7.0" stroke="#00ffff" stroke-width="1.1" fill="none" stroke-linejoin="round" stroke-linecap="square" /><path transform="translate(716.0 657.0) rotate(-42)" d="M2.0 -7.0L1.0 -6.7L0.3 -5.7L0.0 -4.0L0.0 -3.0L0.3 -1.3L1.0 -0.3L2.0 0.0L2.7 0.0L3.7 -0.3L4.4 -1.3L4.7 -3.0L4.7 -4.0L4.4 -5.7L3.7 -6.7L2.7 -7.0L2.0 -7.0M7.4 -0.7L7.0 -0.3L7.4 0.0L7.7 -0.3L7.4 -0.7M13.4 -7.0L10.1 -2.3L15.1 -2.3M13.4 -7.0L13.4 0.0M18.8 -7.0L17.8 -6.7L17.1 -5.7L16.8 -4.0L16.8 -3.0L17.1 -1.3L17.8 -0.3L18.8 0.0L19.4 0.0L20.4 -0.3L21.1 -1.3L21.4 -3.0L21.4 -4.0L21.1 -5.7L20.4 -6.7L19.4 -7.0L18.8 -7.0M26.8 -7.0L23.5 -2.3L28.5 -2.3M26.8 -7.0L26.8 0.0" stroke="#ff00ff" stroke-width="1.1" fill="none" stroke-linejoin="round" stroke-linecap="square" /><path transform="translate(621.0 737.0) rotate(-88)" d="M2.0 -7.0L1.0 -6.7L0.3 -5.7L0.0 -4.0L0.0 -3.0L0.3 -1.3L1.0 -0.3L2.0 0.0L2.7 0.0L3.7 -0.3L4.4 -1.3L4.7 -3.0L4.7 -4.0L4.4 -5.7L3.7 -6.7L2.7 -7.0L2.0 -7.0M7.4 -0.7L7.0 -0.3L7.4 0.0L7.7 -0.3L7.4 -0.7M13.4 -7.0L10.1 -2.3L15.1 -2.3M13.4 -7.0L13.4 0.0M18.8 -7.0L17.8 -6.7L17.1 -5.7L16.8 -4.0L16.8 -3.0L17.1 -1.3L17.8 -0.3L18.8 0.0L19.4 0.0L20.4 -0.3L21.1 -1.3L21.4 -3.0L21.4 -4.0L21.1 -5.7L20.4 -6.7L19.4 -7.0L18.8 -7.0M26.8 -7.0L23.5 -2.3L28.5 -2.3M26.8 -7.0L26.8 0.0" stroke="#ff00ff" stroke-width="1.1" fill="none" stroke-linejoin="round" stroke-linecap="square" /><path transform="translate(790.0 884.0) rotate(22)" d="M2.0 -7.0L1.0 -6.7L0.3 -5.7L0.0 -4.0L0.0 -3.0L0.3 -1.3L1.0 -0.3L2.0 0.0L2.7 0.0L3.7 -0.3L4.4 -1.3L4.7 -3.0L4.7 -4.0L4.4 -5.7L3.7 -6.7L2.7 -7.0L2.0 -7.0M7.4 -0.7L7.0 -0.3L7.4 0.0L7.7 -0.3L7.4 -0.7M13.4 -7.0L10.1 -2.3L15.1 -2.3M13.4 -7.0L13.4 0.0M18.8 -7.0L17.8 -6.7L17.1 -5.7L16.8 -4.0L16.8 -3.0L17.1 -1.3L17.8 -0.3L18.8 0.0L19.4 0.0L20.4 -0.3L21.1 -1.3L21.4 -3.0L21.4 -4.0L21.1 -5.7L20.4 -6.7L19.4 -7.0L18.8 -7.0M26.8 -7.0L23.5 -2.3L28.5 -2.3M26.8 -7.0L26.8 0.0" stroke="#ff00ff" stroke-width="1.1" fill="none" stroke-linejoin="round" stroke-linecap="square" /><path transform="translate(849.0 753.0) rotate(-85)" d="M1.0 -5.7L1.7 -6.0L2.7 -7.0L2.7 0.0M7.4 -0.7L7.0 -0.3L7.4 0.0L7.7 -0.3L7.4 -0.7M12.1 -7.0L11.1 -6.7L10.4 -5.7L10.1 -4.0L10.1 -3.0L10.4 -1.3L11.1 -0.3L12.1 0.0L12.7 0.0L13.7 -0.3L14.4 -1.3L14.7 -3.0L14.7 -4.0L14.4 -5.7L13.7 -6.7L12.7 -7.0L12.1 -7.0M18.4 -7.0L17.4 -6.7L17.1 -6.0L17.1 -5.4L17.4 -4.7L18.1 -4.4L19.4 -4.0L20.4 -3.7L21.1 -3.0L21.4 -2.3L21.4 -1.3L21.1 -0.7L20.8 -0.3L19.8 0.0L18.4 0.0L17.4 -0.3L17.1 -0.7L16.8 -1.3L16.8 -2.3L17.1 -3.0L17.8 -3.7L18.8 -4.0L20.1 -4.4L20.8 -4.7L21.1 -5.4L21.1 -6.0L20.8 -6.7L19.8 -7.0L18.4 -7.0M25.5 -7.0L24.5 -6.7L23.8 -5.7L23.5 -4.0L23.5 -3.0L23.8 -1.3L24.5 -0.3L25.5 0.0L26.1 0.0L27.1 -0.3L27.8 -1.3L28.1 -3.0L28.1 -4.0L27.8 -5.7L27.1 -6.7L26.1 -7.0L25.5 -7.0" stroke="#00ffff" stroke-width="1.1" fill="none" stroke-linejoin="round" stroke-linecap="square" /><path transform="translate(1100.0 655.0) rotate(-88)" d="M2.0 -7.0L1.0 -6.7L0.3 -5.7L0.0 -4.0L0.0 -3.0L0.3 -1.3L1.0 -0.3L2.0 0.0L2.7 0.0L3.7 -0.3L4.4 -1.3L4.7 -3.0L4.7 -4.0L4.4 -5.7L3.7 -6.7L2.7 -7.0L2.0 -7.0M7.4 -0.7L7.0 -0.3L7.4 0.0L7.7 -0.3L7.4 -0.7M13.4 -7.0L10.1 -2.3L15.1 -2.3M13.4 -7.0L13.4 0.0M18.8 -7.0L17.8 -6.7L17.1 -5.7L16.8 -4.0L16.8 -3.0L17.1 -1.3L17.8 -0.3L18.8 0.0L19.4 0.0L20.4 -0.3L21.1 -1.3L21.4 -3.0L21.4 -4.0L21.1 -5.7L20.4 -6.7L19.4 -7.0L18.8 -7.0M26.8 -7.0L23.5 -2.3L28.5 -2.3M26.8 -7.0L26.8 0.0" stroke="#ff00ff" stroke-width="1.1" fill="none" stroke-linejoin="round" stroke-linecap="square" /><path transform="translate(1177.0 813.0) rotate(-52)" d="M2.0 -7.0L1.0 -6.7L0.3 -5.7L0.0 -4.0L0.0 -3.0L0.3 -1.3L1.0 -0.3L2.0 0.0L2.7 0.0L3.7 -0.3L4.4 -1.3L4.7 -3.0L4.7 -4.0L4.4 -5.7L3.7 -6.7L2.7 -7.0L2.0 -7.0M7.4 -0.7L7.0 -0.3L7.4 0.0L7.7 -0.3L7.4 -0.7M10.4 -5.4L10.4 -5.7L10.7 -6.4L11.1 -6.7L11.7 -7.0L13.1 -7.0L13.7 -6.7L14.1 -6.4L14.4 -5.7L14.4 -5.0L14.1 -4.4L13.4 -3.4L10.1 0.0L14.7 0.0M18.4 -7.0L17.4 -6.7L17.1 -6.0L17.1 -5.4L17.4 -4.7L18.1 -4.4L19.4 -4.0L20.4 -3.7L21.1 -3.0L21.4 -2.3L21.4 -1.3L21.1 -0.7L20.8 -0.3L19.8 0.0L18.4 0.0L17.4 -0.3L17.1 -0.7L16.8 -1.3L16.8 -2.3L17.1 -3.0L17.8 -3.7L18.8 -4.0L20.1 -4.4L20.8 -4.7L21.1 -5.4L21.1 -6.0L20.8 -6.7L19.8 -7.0L18.4 -7.0M24.1 -7.0L27.8 -7.0L25.8 -4.4L26.8 -4.4L27.5 -4.0L27.8 -3.7L28.1 -2.7L28.1 -2.0L27.8 -1.0L27.1 -0.3L26.1 0.0L25.1 0.0L24.1 -0.3L23.8 -0.7L23.5 -1.3" stroke="#f2f200" stroke-width="1.1" fill="none" stroke-linejoin="round" stroke-linecap="square" /><path transform="translate(738.0 940.0) rotate(60)" d="M2.0 -7.0L1.0 -6.7L0.3 -5.7L0.0 -4.0L0.0 -3.0L0.3 -1.3L1.0 -0.3L2.0 0.0L2.7 0.0L3.7 -0.3L4.4 -1.3L4.7 -3.0L4.7 -4.0L4.4 -5.7L3.7 -6.7L2.7 -7.0L2.0 -7.0M7.4 -0.7L7.0 -0.3L7.4 0.0L7.7 -0.3L7.4 -0.7M10.4 -5.4L10.4 -5.7L10.7 -6.4L11.1 -6.7L11.7 -7.0L13.1 -7.0L13.7 -6.7L14.1 -6.4L14.4 -5.7L14.4 -5.0L14.1 -4.4L13.4 -3.4L10.1 0.0L14.7 0.0M18.4 -7.0L17.4 -6.7L17.1 -6.0L17.1 -5.4L17.4 -4.7L18.1 -4.4L19.4 -4.0L20.4 -3.7L21.1 -3.0L21.4 -2.3L21.4 -1.3L21.1 -0.7L20.8 -0.3L19.8 0.0L18.4 0.0L17.4 -0.3L17.1 -0.7L16.8 -1.3L16.8 -2.3L17.1 -3.0L17.8 -3.7L18.8 -4.0L20.1 -4.4L20.8 -4.7L21.1 -5.4L21.1 -6.0L20.8 -6.7L19.8 -7.0L18.4 -7.0M24.1 -7.0L27.8 -7.0L25.8 -4.4L26.8 -4.4L27.5 -4.0L27.8 -3.7L28.1 -2.7L28.1 -2.0L27.8 -1.0L27.1 -0.3L26.1 0.0L25.1 0.0L24.1 -0.3L23.8 -0.7L23.5 -1.3" stroke="#f2f200" stroke-width="1.1" fill="none" stroke-linejoin="round" stroke-linecap="square" /><path transform="translate(608.0 954.0) rotate(22)" d="M2.0 -7.0L1.0 -6.7L0.3 -5.7L0.0 -4.0L0.0 -3.0L0.3 -1.3L1.0 -0.3L2.0 0.0L2.7 0.0L3.7 -0.3L4.4 -1.3L4.7 -3.0L4.7 -4.0L4.4 -5.7L3.7 -6.7L2.7 -7.0L2.0 -7.0M7.4 -0.7L7.0 -0.3L7.4 0.0L7.7 -0.3L7.4 -0.7M14.4 -4.7L14.1 -3.7L13.4 -3.0L12.4 -2.7L12.1 -2.7L11.1 -3.0L10.4 -3.7L10.1 -4.7L10.1 -5.0L10.4 -6.0L11.1 -6.7L12.1 -7.0L12.4 -7.0L13.4 -6.7L14.1 -6.0L14.4 -4.7L14.4 -3.0L14.1 -1.3L13.4 -0.3L12.4 0.0L11.7 0.0L10.7 -0.3L10.4 -1.0M18.4 -7.0L17.4 -6.7L17.1 -6.0L17.1 -5.4L17.4 -4.7L18.1 -4.4L19.4 -4.0L20.4 -3.7L21.1 -3.0L21.4 -2.3L21.4 -1.3L21.1 -0.7L20.8 -0.3L19.8 0.0L18.4 0.0L17.4 -0.3L17.1 -0.7L16.8 -1.3L16.8 -2.3L17.1 -3.0L17.8 -3.7L18.8 -4.0L20.1 -4.4L20.8 -4.7L21.1 -5.4L21.1 -6.0L20.8 -6.7L19.8 -7.0L18.4 -7.0M25.1 -7.0L24.1 -6.7L23.8 -6.0L23.8 -5.4L24.1 -4.7L24.8 -4.4L26.1 -4.0L27.1 -3.7L27.8 -3.0L28.1 -2.3L28.1 -1.3L27.8 -0.7L27.5 -0.3L26.5 0.0L25.1 0.0L24.1 -0.3L23.8 -0.7L23.5 -1.3L23.5 -2.3L23.8 -3.0L24.5 -3.7L25.5 -4.0L26.8 -4.4L27.5 -4.7L27.8 -5.4L27.8 -6.0L27.5 -6.7L26.5 -7.0L25.1 -7.0" stroke="#0000ff" stroke-width="1.1" fill="none" stroke-linejoin="round" stroke-linecap="square" /><path transform="translate(559.0 599.0) rotate(-85)" d="M2.0 -7.0L1.0 -6.7L0.3 -5.7L0.0 -4.0L0.0 -3.0L0.3 -1.3L1.0 -0.3L2.0 0.0L2.7 0.0L3.7 -0.3L4.4 -1.3L4.7 -3.0L4.7 -4.0L4.4 -5.7L3.7 -6.7L2.7 -7.0L2.0 -7.0M7.4 -0.7L7.0 -0.3L7.4 0.0L7.7 -0.3L7.4 -0.7M10.4 -5.4L10.4 -5.7L10.7 -6.4L11.1 -6.7L11.7 -7.0L13.1 -7.0L13.7 -6.7L14.1 -6.4L14.4 -5.7L14.4 -5.0L14.1 -4.4L13.4 -3.4L10.1 0.0L14.7 0.0M18.4 -7.0L17.4 -6.7L17.1 -6.0L17.1 -5.4L17.4 -4.7L18.1 -4.4L19.4 -4.0L20.4 -3.7L21.1 -3.0L21.4 -2.3L21.4 -1.3L21.1 -0.7L20.8 -0.3L19.8 0.0L18.4 0.0L17.4 -0.3L17.1 -0.7L16.8 -1.3L16.8 -2.3L17.1 -3.0L17.8 -3.7L18.8 -4.0L20.1 -4.4L20.8 -4.7L21.1 -5.4L21.1 -6.0L20.8 -6.7L19.8 -7.0L18.4 -7.0M24.1 -7.0L27.8 -7.0L25.8 -4.4L26.8 -4.4L27.5 -4.0L27.8 -3.7L28.1 -2.7L28.1 -2.0L27.8 -1.0L27.1 -0.3L26.1 0.0L25.1 0.0L24.1 -0.3L23.8 -0.7L23.5 -1.3" stroke="#f2f200" stroke-width="1.1" fill="none" stroke-linejoin="round" stroke-linecap="square" /><circle cx="863.0" cy="650.5" r="225.2" fill="none" stroke="#ffff00" stroke-width="6.4"/><rect x="528.0" y="316.0" width="670.0" height="669.0" fill="none" stroke="#fff" stroke-width="1.3"/><path d="M528.0 316.0v13M528.0 985.0v-13M528.0 985.0h13M1198.0 985.0h-13M550.3 316.0v6.5M550.3 985.0v-6.5M528.0 962.7h6.5M1198.0 962.7h-6.5M572.7 316.0v6.5M572.7 985.0v-6.5M528.0 940.4h6.5M1198.0 940.4h-6.5M595.0 316.0v6.5M595.0 985.0v-6.5M528.0 918.1h6.5M1198.0 918.1h-6.5M617.3 316.0v6.5M617.3 985.0v-6.5M528.0 895.8h6.5M1198.0 895.8h-6.5M639.7 316.0v13M639.7 985.0v-13M528.0 873.5h13M1198.0 873.5h-13M662.0 316.0v6.5M662.0 985.0v-6.5M528.0 851.2h6.5M1198.0 851.2h-6.5M684.3 316.0v6.5M684.3 985.0v-6.5M528.0 828.9h6.5M1198.0 828.9h-6.5M706.7 316.0v6.5M706.7 985.0v-6.5M528.0 806.6h6.5M1198.0 806.6h-6.5M729.0 316.0v6.5M729.0 985.0v-6.5M528.0 784.3h6.5M1198.0 784.3h-6.5M751.3 316.0v13M751.3 985.0v-13M528.0 762.0h13M1198.0 762.0h-13M773.7 316.0v6.5M773.7 985.0v-6.5M528.0 739.7h6.5M1198.0 739.7h-6.5M796.0 316.0v6.5M796.0 985.0v-6.5M528.0 717.4h6.5M1198.0 717.4h-6.5M818.3 316.0v6.5M818.3 985.0v-6.5M528.0 695.1h6.5M1198.0 695.1h-6.5M840.7 316.0v6.5M840.7 985.0v-6.5M528.0 672.8h6.5M1198.0 672.8h-6.5M863.0 316.0v13M863.0 985.0v-13M528.0 650.5h13M1198.0 650.5h-13M885.3 316.0v6.5M885.3 985.0v-6.5M528.0 628.2h6.5M1198.0 628.2h-6.5M907.7 316.0v6.5M907.7 985.0v-6.5M528.0 605.9h6.5M1198.0 605.9h-6.5M930.0 316.0v6.5M930.0 985.0v-6.5M528.0 583.6h6.5M1198.0 583.6h-6.5M952.3 316.0v6.5M952.3 985.0v-6.5M528.0 561.3h6.5M1198.0 561.3h-6.5M974.7 316.0v13M974.7 985.0v-13M528.0 539.0h13M1198.0 539.0h-13M997.0 316.0v6.5M997.0 985.0v-6.5M528.0 516.7h6.5M1198.0 516.7h-6.5M1019.3 316.0v6.5M1019.3 985.0v-6.5M528.0 494.4h6.5M1198.0 494.4h-6.5M1041.7 316.0v6.5M1041.7 985.0v-6.5M528.0 472.1h6.5M1198.0 472.1h-6.5M1064.0 316.0v6.5M1064.0 985.0v-6.5M528.0 449.8h6.5M1198.0 449.8h-6.5M1086.3 316.0v13M1086.3 985.0v-13M528.0 427.5h13M1198.0 427.5h-13M1108.7 316.0v6.5M1108.7 985.0v-6.5M528.0 405.2h6.5M1198.0 405.2h-6.5M1131.0 316.0v6.5M1131.0 985.0v-6.5M528.0 382.9h6.5M1198.0 382.9h-6.5M1153.3 316.0v6.5M1153.3 985.0v-6.5M528.0 360.6h6.5M1198.0 360.6h-6.5M1175.7 316.0v6.5M1175.7 985.0v-6.5M528.0 338.3h6.5M1198.0 338.3h-6.5M1198.0 316.0v13M1198.0 985.0v-13M528.0 316.0h13M1198.0 316.0h-13" stroke="#fff" stroke-width="1.1" fill="none"/><rect x="1216.5" y="219.5" width="29.5" height="860" fill="url(#cb)"/><path d="M1216.5 219.5V1070M1246 219.5V1070" stroke="#d8d8d8" stroke-width="1" fill="none" opacity=".75"/><path d="M1216.5 225.0h5M1246 225.0h-5M1216.5 296.3h5M1246 296.3h-5M1216.5 367.6h5M1246 367.6h-5M1216.5 438.9h5M1246 438.9h-5M1216.5 510.2h5M1246 510.2h-5M1216.5 581.5h5M1246 581.5h-5M1216.5 652.8h5M1246 652.8h-5M1216.5 724.1h5M1246 724.1h-5M1216.5 795.4h5M1246 795.4h-5M1216.5 866.7h5M1246 866.7h-5M1216.5 938.0h5M1246 938.0h-5M1216.5 1009.3h5M1246 1009.3h-5M1216.5 1080.6h5M1246 1080.6h-5" stroke="#fff" stroke-width="1" fill="none"/><path transform="translate(1252.0 229.4)" d="M1.2 -7.0L2.0 -7.4L3.3 -8.6L3.3 0.0M9.0 -0.8L8.6 -0.4L9.0 0.0L9.4 -0.4L9.0 -0.8M14.3 -8.6L13.1 -8.2L12.7 -7.4L12.7 -6.6L13.1 -5.7L13.9 -5.3L15.6 -4.9L16.8 -4.5L17.6 -3.7L18.0 -2.9L18.0 -1.6L17.6 -0.8L17.2 -0.4L16.0 0.0L14.3 0.0L13.1 -0.4L12.7 -0.8L12.3 -1.6L12.3 -2.9L12.7 -3.7L13.5 -4.5L14.8 -4.9L16.4 -5.3L17.2 -5.7L17.6 -6.6L17.6 -7.4L17.2 -8.2L16.0 -8.6L14.3 -8.6" stroke="#fff" stroke-width="1.05" fill="none" stroke-linejoin="round" stroke-linecap="square" /><path transform="translate(1252.0 372.0)" d="M2.5 -8.6L1.2 -8.2L0.4 -7.0L0.0 -4.9L0.0 -3.7L0.4 -1.6L1.2 -0.4L2.5 0.0L3.3 0.0L4.5 -0.4L5.3 -1.6L5.7 -3.7L5.7 -4.9L5.3 -7.0L4.5 -8.2L3.3 -8.6L2.5 -8.6M9.0 -0.8L8.6 -0.4L9.0 0.0L9.4 -0.4L9.0 -0.8M17.6 -5.7L17.2 -4.5L16.4 -3.7L15.2 -3.3L14.8 -3.3L13.5 -3.7L12.7 -4.5L12.3 -5.7L12.3 -6.1L12.7 -7.4L13.5 -8.2L14.8 -8.6L15.2 -8.6L16.4 -8.2L17.2 -7.4L17.6 -5.7L17.6 -3.7L17.2 -1.6L16.4 -0.4L15.2 0.0L14.3 0.0L13.1 -0.4L12.7 -1.2M22.5 -8.6L21.3 -8.2L20.9 -7.4L20.9 -6.6L21.3 -5.7L22.1 -5.3L23.8 -4.9L25.0 -4.5L25.8 -3.7L26.2 -2.9L26.2 -1.6L25.8 -0.8L25.4 -0.4L24.2 0.0L22.5 0.0L21.3 -0.4L20.9 -0.8L20.5 -1.6L20.5 -2.9L20.9 -3.7L21.7 -4.5L23.0 -4.9L24.6 -5.3L25.4 -5.7L25.8 -6.6L25.8 -7.4L25.4 -8.2L24.2 -8.6L22.5 -8.6" stroke="#fff" stroke-width="1.05" fill="none" stroke-linejoin="round" stroke-linecap="square" /><path transform="translate(1252.0 514.6)" d="M2.5 -8.6L1.2 -8.2L0.4 -7.0L0.0 -4.9L0.0 -3.7L0.4 -1.6L1.2 -0.4L2.5 0.0L3.3 0.0L4.5 -0.4L5.3 -1.6L5.7 -3.7L5.7 -4.9L5.3 -7.0L4.5 -8.2L3.3 -8.6L2.5 -8.6M9.0 -0.8L8.6 -0.4L9.0 0.0L9.4 -0.4L9.0 -0.8M13.5 -7.0L14.3 -7.4L15.6 -8.6L15.6 0.0M26.2 -8.6L22.1 0.0M20.5 -8.6L26.2 -8.6" stroke="#fff" stroke-width="1.05" fill="none" stroke-linejoin="round" stroke-linecap="square" /><path d="M1250.5 653.0h7" stroke="#fff" stroke-width="1.1"/><path transform="translate(1260.0 657.2)" d="M2.5 -8.6L1.2 -8.2L0.4 -7.0L0.0 -4.9L0.0 -3.7L0.4 -1.6L1.2 -0.4L2.5 0.0L3.3 0.0L4.5 -0.4L5.3 -1.6L5.7 -3.7L5.7 -4.9L5.3 -7.0L4.5 -8.2L3.3 -8.6L2.5 -8.6M9.0 -0.8L8.6 -0.4L9.0 0.0L9.4 -0.4L9.0 -0.8M17.6 -7.4L17.2 -8.2L16.0 -8.6L15.2 -8.6L13.9 -8.2L13.1 -7.0L12.7 -4.9L12.7 -2.9L13.1 -1.2L13.9 -0.4L15.2 0.0L15.6 0.0L16.8 -0.4L17.6 -1.2L18.0 -2.5L18.0 -2.9L17.6 -4.1L16.8 -4.9L15.6 -5.3L15.2 -5.3L13.9 -4.9L13.1 -4.1L12.7 -2.9M21.3 -8.6L25.8 -8.6L23.4 -5.3L24.6 -5.3L25.4 -4.9L25.8 -4.5L26.2 -3.3L26.2 -2.5L25.8 -1.2L25.0 -0.4L23.8 0.0L22.5 0.0L21.3 -0.4L20.9 -0.8L20.5 -1.6" stroke="#fff" stroke-width="1.05" fill="none" stroke-linejoin="round" stroke-linecap="square" /><path d="M1250.5 795.6h7" stroke="#fff" stroke-width="1.1"/><path transform="translate(1260.0 799.8)" d="M1.2 -7.0L2.0 -7.4L3.3 -8.6L3.3 0.0M9.0 -0.8L8.6 -0.4L9.0 0.0L9.4 -0.4L9.0 -0.8M16.4 -8.6L12.3 -2.9L18.4 -2.9M16.4 -8.6L16.4 0.0" stroke="#fff" stroke-width="1.05" fill="none" stroke-linejoin="round" stroke-linecap="square" /><path d="M1250.5 938.2h7" stroke="#fff" stroke-width="1.1"/><path transform="translate(1260.0 942.4)" d="M0.4 -6.6L0.4 -7.0L0.8 -7.8L1.2 -8.2L2.0 -8.6L3.7 -8.6L4.5 -8.2L4.9 -7.8L5.3 -7.0L5.3 -6.1L4.9 -5.3L4.1 -4.1L0.0 0.0L5.7 0.0M9.0 -0.8L8.6 -0.4L9.0 0.0L9.4 -0.4L9.0 -0.8M12.7 -6.6L12.7 -7.0L13.1 -7.8L13.5 -8.2L14.3 -8.6L16.0 -8.6L16.8 -8.2L17.2 -7.8L17.6 -7.0L17.6 -6.1L17.2 -5.3L16.4 -4.1L12.3 0.0L18.0 0.0" stroke="#fff" stroke-width="1.05" fill="none" stroke-linejoin="round" stroke-linecap="square" /><path transform="translate(861.2 238.0)" d="M-208.3 -13.9L-208.3 -14.8L-207.5 -16.5L-206.6 -17.4L-204.8 -18.2L-201.4 -18.2L-199.6 -17.4L-198.8 -16.5L-197.9 -14.8L-197.9 -13.0L-198.8 -11.3L-200.5 -8.7L-209.2 0.0L-197.0 0.0M-189.2 -14.8L-187.5 -15.6L-184.9 -18.2L-184.9 0.0M-171.9 -14.8L-170.1 -15.6L-167.5 -18.2L-167.5 0.0M-152.8 -18.2L-155.4 -17.4L-156.2 -15.6L-156.2 -13.9L-155.4 -12.2L-153.6 -11.3L-150.2 -10.4L-147.6 -9.5L-145.8 -7.8L-145.0 -6.1L-145.0 -3.5L-145.8 -1.7L-146.7 -0.9L-149.3 0.0L-152.8 0.0L-155.4 -0.9L-156.2 -1.7L-157.1 -3.5L-157.1 -6.1L-156.2 -7.8L-154.5 -9.5L-151.9 -10.4L-148.4 -11.3L-146.7 -12.2L-145.8 -13.9L-145.8 -15.6L-146.7 -17.4L-149.3 -18.2L-152.8 -18.2M-142.4 1.7L-128.5 1.7M-125.0 -18.2L-125.0 0.0M-112.8 -18.2L-112.8 0.0M-125.0 -9.5L-112.8 -9.5M-105.9 -18.2L-105.9 0.0M-105.9 -18.2L-99.0 0.0M-92.0 -18.2L-99.0 0.0M-92.0 -18.2L-92.0 0.0M-85.1 -18.2L-85.1 0.0M-81.6 1.7L-67.7 1.7M-60.8 -18.2L-60.8 0.0M-66.8 -18.2L-54.7 -18.2M-50.3 -18.2L-50.3 0.0M-38.2 -18.2L-38.2 0.0M-50.3 -9.5L-38.2 -9.5M-31.2 -18.2L-31.2 0.0M-31.2 -18.2L-20.0 -18.2M-31.2 -9.5L-24.3 -9.5M-31.2 0.0L-20.0 0.0M-14.8 -18.2L-14.8 0.0M-14.8 -18.2L-6.9 -18.2L-4.3 -17.4L-3.5 -16.5L-2.6 -14.8L-2.6 -13.0L-3.5 -11.3L-4.3 -10.4L-6.9 -9.5L-14.8 -9.5M-8.7 -9.5L-2.6 0.0M3.5 -18.2L3.5 0.0M3.5 -18.2L10.4 0.0M17.4 -18.2L10.4 0.0M17.4 -18.2L17.4 0.0M28.6 -18.2L26.9 -17.4L25.2 -15.6L24.3 -13.9L23.4 -11.3L23.4 -6.9L24.3 -4.3L25.2 -2.6L26.9 -0.9L28.6 0.0L32.1 0.0L33.9 -0.9L35.6 -2.6L36.5 -4.3L37.3 -6.9L37.3 -11.3L36.5 -13.9L35.6 -15.6L33.9 -17.4L32.1 -18.2L28.6 -18.2M39.9 1.7L53.8 1.7M57.3 -18.2L57.3 0.0M57.3 -18.2L64.2 0.0M71.2 -18.2L64.2 0.0M71.2 -18.2L71.2 0.0M78.1 -18.2L78.1 0.0M78.1 -18.2L89.4 -18.2M78.1 -9.5L85.1 -9.5M78.1 0.0L89.4 0.0M94.6 -18.2L94.6 0.0M94.6 -18.2L100.7 -18.2L103.3 -17.4L105.0 -15.6L105.9 -13.9L106.8 -11.3L106.8 -6.9L105.9 -4.3L105.0 -2.6L103.3 -0.9L100.7 0.0L94.6 0.0M109.4 1.7L123.3 1.7M126.7 -18.2L126.7 0.0M138.9 -18.2L138.9 0.0M126.7 -9.5L138.9 -9.5M145.8 -13.9L145.8 -14.8L146.7 -16.5L147.6 -17.4L149.3 -18.2L152.8 -18.2L154.5 -17.4L155.4 -16.5L156.2 -14.8L156.2 -13.0L155.4 -11.3L153.6 -8.7L145.0 0.0L157.1 0.0M164.1 -1.7L163.2 -0.9L164.1 0.0L164.9 -0.9L164.1 -1.7M181.4 -18.2L181.4 0.0M181.4 -9.5L179.7 -11.3L177.9 -12.2L175.3 -12.2L173.6 -11.3L171.9 -9.5L171.0 -6.9L171.0 -5.2L171.9 -2.6L173.6 -0.9L175.3 0.0L177.9 0.0L179.7 -0.9L181.4 -2.6M197.9 -12.2L197.9 0.0M197.9 -9.5L196.2 -11.3L194.4 -12.2L191.8 -12.2L190.1 -11.3L188.4 -9.5L187.5 -6.9L187.5 -5.2L188.4 -2.6L190.1 -0.9L191.8 0.0L194.4 0.0L196.2 -0.9L197.9 -2.6M205.7 -18.2L205.7 -3.5L206.6 -0.9L208.3 0.0L210.1 0.0M203.1 -12.2L209.2 -12.2" stroke="#fff" stroke-width="1.9" fill="none" stroke-linejoin="round" stroke-linecap="square" /><path transform="translate(855.0 265.8)" d="M-35.4 -18.3L-35.4 0.0M-35.4 -18.3L-27.5 -18.3L-24.9 -17.5L-24.0 -16.6L-23.1 -14.8L-23.1 -13.1L-24.0 -11.3L-24.9 -10.5L-27.5 -9.6M-35.4 -9.6L-27.5 -9.6L-24.9 -8.7L-24.0 -7.9L-23.1 -6.1L-23.1 -3.5L-24.0 -1.7L-24.9 -0.9L-27.5 0.0L-35.4 0.0M-17.0 -12.2L-17.0 0.0M-17.0 -8.7L-14.4 -11.3L-12.7 -12.2L-10.0 -12.2L-8.3 -11.3L-7.4 -8.7L-7.4 0.0M-7.4 -8.7L-4.8 -11.3L-3.1 -12.2L-0.4 -12.2L1.3 -11.3L2.2 -8.7L2.2 0.0M18.8 -12.2L18.8 0.0M18.8 -9.6L17.0 -11.3L15.3 -12.2L12.7 -12.2L10.9 -11.3L9.2 -9.6L8.3 -7.0L8.3 -5.2L9.2 -2.6L10.9 -0.9L12.7 0.0L15.3 0.0L17.0 -0.9L18.8 -2.6M35.4 -12.2L35.4 1.7L34.5 4.4L33.6 5.2L31.9 6.1L29.2 6.1L27.5 5.2M35.4 -9.6L33.6 -11.3L31.9 -12.2L29.2 -12.2L27.5 -11.3L25.8 -9.6L24.9 -7.0L24.9 -5.2L25.8 -2.6L27.5 -0.9L29.2 0.0L31.9 0.0L33.6 -0.9L35.4 -2.6" stroke="#fff" stroke-width="1.9" fill="none" stroke-linejoin="round" stroke-linecap="square" /><path transform="translate(527.5 1018.0)" d="M-23.8 -6.3L-11.2 -6.3M-4.2 -11.9L-2.8 -12.6L-0.7 -14.7L-0.7 0.0M9.1 -1.4L8.4 -0.7L9.1 0.0L9.8 -0.7L9.1 -1.4M23.1 -14.7L16.1 -14.7L15.4 -8.4L16.1 -9.1L18.2 -9.8L20.3 -9.8L22.4 -9.1L23.8 -7.7L24.5 -5.6L24.5 -4.2L23.8 -2.1L22.4 -0.7L20.3 0.0L18.2 0.0L16.1 -0.7L15.4 -1.4L14.7 -2.8" stroke="#fff" stroke-width="1.85" fill="none" stroke-linejoin="round" stroke-linecap="square" /><path transform="translate(639.2 1018.0)" d="M-23.8 -6.3L-11.2 -6.3M-4.2 -11.9L-2.8 -12.6L-0.7 -14.7L-0.7 0.0M9.1 -1.4L8.4 -0.7L9.1 0.0L9.8 -0.7L9.1 -1.4M18.9 -14.7L16.8 -14.0L15.4 -11.9L14.7 -8.4L14.7 -6.3L15.4 -2.8L16.8 -0.7L18.9 0.0L20.3 0.0L22.4 -0.7L23.8 -2.8L24.5 -6.3L24.5 -8.4L23.8 -11.9L22.4 -14.0L20.3 -14.7L18.9 -14.7" stroke="#fff" stroke-width="1.85" fill="none" stroke-linejoin="round" stroke-linecap="square" /><path transform="translate(750.8 1018.0)" d="M-23.8 -6.3L-11.2 -6.3M-2.1 -14.7L-4.2 -14.0L-5.6 -11.9L-6.3 -8.4L-6.3 -6.3L-5.6 -2.8L-4.2 -0.7L-2.1 0.0L-0.7 0.0L1.4 -0.7L2.8 -2.8L3.5 -6.3L3.5 -8.4L2.8 -11.9L1.4 -14.0L-0.7 -14.7L-2.1 -14.7M9.1 -1.4L8.4 -0.7L9.1 0.0L9.8 -0.7L9.1 -1.4M23.1 -14.7L16.1 -14.7L15.4 -8.4L16.1 -9.1L18.2 -9.8L20.3 -9.8L22.4 -9.1L23.8 -7.7L24.5 -5.6L24.5 -4.2L23.8 -2.1L22.4 -0.7L20.3 0.0L18.2 0.0L16.1 -0.7L15.4 -1.4L14.7 -2.8" stroke="#fff" stroke-width="1.85" fill="none" stroke-linejoin="round" stroke-linecap="square" /><path transform="translate(863.0 1018.0)" d="M-11.2 -14.7L-13.3 -14.0L-14.7 -11.9L-15.4 -8.4L-15.4 -6.3L-14.7 -2.8L-13.3 -0.7L-11.2 0.0L-9.8 0.0L-7.7 -0.7L-6.3 -2.8L-5.6 -6.3L-5.6 -8.4L-6.3 -11.9L-7.7 -14.0L-9.8 -14.7L-11.2 -14.7M0.0 -1.4L-0.7 -0.7L0.0 0.0L0.7 -0.7L0.0 -1.4M9.8 -14.7L7.7 -14.0L6.3 -11.9L5.6 -8.4L5.6 -6.3L6.3 -2.8L7.7 -0.7L9.8 0.0L11.2 0.0L13.3 -0.7L14.7 -2.8L15.4 -6.3L15.4 -8.4L14.7 -11.9L13.3 -14.0L11.2 -14.7L9.8 -14.7" stroke="#fff" stroke-width="1.85" fill="none" stroke-linejoin="round" stroke-linecap="square" /><path transform="translate(974.7 1018.0)" d="M-11.2 -14.7L-13.3 -14.0L-14.7 -11.9L-15.4 -8.4L-15.4 -6.3L-14.7 -2.8L-13.3 -0.7L-11.2 0.0L-9.8 0.0L-7.7 -0.7L-6.3 -2.8L-5.6 -6.3L-5.6 -8.4L-6.3 -11.9L-7.7 -14.0L-9.8 -14.7L-11.2 -14.7M0.0 -1.4L-0.7 -0.7L0.0 0.0L0.7 -0.7L0.0 -1.4M14.0 -14.7L7.0 -14.7L6.3 -8.4L7.0 -9.1L9.1 -9.8L11.2 -9.8L13.3 -9.1L14.7 -7.7L15.4 -5.6L15.4 -4.2L14.7 -2.1L13.3 -0.7L11.2 0.0L9.1 0.0L7.0 -0.7L6.3 -1.4L5.6 -2.8" stroke="#fff" stroke-width="1.85" fill="none" stroke-linejoin="round" stroke-linecap="square" /><path transform="translate(1086.3 1018.0)" d="M-13.3 -11.9L-11.9 -12.6L-9.8 -14.7L-9.8 0.0M0.0 -1.4L-0.7 -0.7L0.0 0.0L0.7 -0.7L0.0 -1.4M9.8 -14.7L7.7 -14.0L6.3 -11.9L5.6 -8.4L5.6 -6.3L6.3 -2.8L7.7 -0.7L9.8 0.0L11.2 0.0L13.3 -0.7L14.7 -2.8L15.4 -6.3L15.4 -8.4L14.7 -11.9L13.3 -14.0L11.2 -14.7L9.8 -14.7" stroke="#fff" stroke-width="1.85" fill="none" stroke-linejoin="round" stroke-linecap="square" /><path transform="translate(1198.0 1018.0)" d="M-13.3 -11.9L-11.9 -12.6L-9.8 -14.7L-9.8 0.0M0.0 -1.4L-0.7 -0.7L0.0 0.0L0.7 -0.7L0.0 -1.4M14.0 -14.7L7.0 -14.7L6.3 -8.4L7.0 -9.1L9.1 -9.8L11.2 -9.8L13.3 -9.1L14.7 -7.7L15.4 -5.6L15.4 -4.2L14.7 -2.1L13.3 -0.7L11.2 0.0L9.1 0.0L7.0 -0.7L6.3 -1.4L5.6 -2.8" stroke="#fff" stroke-width="1.85" fill="none" stroke-linejoin="round" stroke-linecap="square" /><path transform="translate(861.5 1046.0)" d="M-64.1 -17.1L-65.5 -15.8L-66.9 -13.7L-68.3 -11.0L-68.9 -7.5L-68.9 -4.8L-68.3 -1.4L-66.9 1.4L-65.5 3.4L-64.1 4.8M-61.4 -14.4L-55.9 -7.5L-55.9 0.0M-50.4 -14.4L-55.9 -7.5M-49.7 1.4L-38.8 1.4M-36.0 -9.6L-36.0 4.8M-36.0 -7.5L-34.6 -8.9L-33.3 -9.6L-31.2 -9.6L-29.8 -8.9L-28.5 -7.5L-27.8 -5.5L-27.8 -4.1L-28.5 -2.1L-29.8 -0.7L-31.2 0.0L-33.3 0.0L-34.6 -0.7L-36.0 -2.1M-20.2 -9.6L-21.6 -8.9L-23.0 -7.5L-23.7 -5.5L-23.7 -4.1L-23.0 -2.1L-21.6 -0.7L-20.2 0.0L-18.2 0.0L-16.8 -0.7L-15.4 -2.1L-14.7 -4.1L-14.7 -5.5L-15.4 -7.5L-16.8 -8.9L-18.2 -9.6L-20.2 -9.6M-3.1 -7.5L-3.8 -8.9L-5.8 -9.6L-7.9 -9.6L-9.9 -8.9L-10.6 -7.5L-9.9 -6.2L-8.6 -5.5L-5.1 -4.8L-3.8 -4.1L-3.1 -2.7L-3.1 -2.1L-3.8 -0.7L-5.8 0.0L-7.9 0.0L-9.9 -0.7L-10.6 -2.1M12.7 -14.4L12.7 0.0M12.7 -14.4L18.9 -14.4L20.9 -13.7L21.6 -13.0L22.3 -11.7L22.3 -10.3L21.6 -8.9L20.9 -8.2L18.9 -7.5L12.7 -7.5M17.5 -7.5L22.3 0.0M34.0 -7.5L33.3 -8.9L31.2 -9.6L29.2 -9.6L27.1 -8.9L26.4 -7.5L27.1 -6.2L28.5 -5.5L31.9 -4.8L33.3 -4.1L34.0 -2.7L34.0 -2.1L33.3 -0.7L31.2 0.0L29.2 0.0L27.1 -0.7L26.4 -2.1M38.8 -9.6L38.8 -2.7L39.4 -0.7L40.8 0.0L42.9 0.0L44.2 -0.7L46.3 -2.7M46.3 -9.6L46.3 0.0M51.8 -9.6L51.8 0.0M51.8 -6.9L53.9 -8.9L55.2 -9.6L57.3 -9.6L58.7 -8.9L59.3 -6.9L59.3 0.0M64.1 -17.1L65.5 -15.8L66.9 -13.7L68.3 -11.0L68.9 -7.5L68.9 -4.8L68.3 -1.4L66.9 1.4L65.5 3.4L64.1 4.8" stroke="#fff" stroke-width="1.85" fill="none" stroke-linejoin="round" stroke-linecap="square" /><path transform="translate(519.0 770.3)" d="M-48.3 -6.3L-35.7 -6.3M-26.6 -14.7L-28.7 -14.0L-30.1 -11.9L-30.8 -8.4L-30.8 -6.3L-30.1 -2.8L-28.7 -0.7L-26.6 0.0L-25.2 0.0L-23.1 -0.7L-21.7 -2.8L-21.0 -6.3L-21.0 -8.4L-21.7 -11.9L-23.1 -14.0L-25.2 -14.7L-26.6 -14.7M-15.4 -1.4L-16.1 -0.7L-15.4 0.0L-14.7 -0.7L-15.4 -1.4M-1.4 -14.7L-8.4 -14.7L-9.1 -8.4L-8.4 -9.1L-6.3 -9.8L-4.2 -9.8L-2.1 -9.1L-0.7 -7.7L0.0 -5.6L0.0 -4.2L-0.7 -2.1L-2.1 -0.7L-4.2 0.0L-6.3 0.0L-8.4 -0.7L-9.1 -1.4L-9.8 -2.8" stroke="#fff" stroke-width="1.85" fill="none" stroke-linejoin="round" stroke-linecap="square" /><path transform="translate(519.0 881.8)" d="M-48.3 -6.3L-35.7 -6.3M-28.7 -11.9L-27.3 -12.6L-25.2 -14.7L-25.2 0.0M-15.4 -1.4L-16.1 -0.7L-15.4 0.0L-14.7 -0.7L-15.4 -1.4M-5.6 -14.7L-7.7 -14.0L-9.1 -11.9L-9.8 -8.4L-9.8 -6.3L-9.1 -2.8L-7.7 -0.7L-5.6 0.0L-4.2 0.0L-2.1 -0.7L-0.7 -2.8L0.0 -6.3L0.0 -8.4L-0.7 -11.9L-2.1 -14.0L-4.2 -14.7L-5.6 -14.7" stroke="#fff" stroke-width="1.85" fill="none" stroke-linejoin="round" stroke-linecap="square" /><path transform="translate(519.0 985.3)" d="M-48.3 -6.3L-35.7 -6.3M-28.7 -11.9L-27.3 -12.6L-25.2 -14.7L-25.2 0.0M-15.4 -1.4L-16.1 -0.7L-15.4 0.0L-14.7 -0.7L-15.4 -1.4M-1.4 -14.7L-8.4 -14.7L-9.1 -8.4L-8.4 -9.1L-6.3 -9.8L-4.2 -9.8L-2.1 -9.1L-0.7 -7.7L0.0 -5.6L0.0 -4.2L-0.7 -2.1L-2.1 -0.7L-4.2 0.0L-6.3 0.0L-8.4 -0.7L-9.1 -1.4L-9.8 -2.8" stroke="#fff" stroke-width="1.85" fill="none" stroke-linejoin="round" stroke-linecap="square" /><path transform="translate(519.0 658.8)" d="M-26.6 -14.7L-28.7 -14.0L-30.1 -11.9L-30.8 -8.4L-30.8 -6.3L-30.1 -2.8L-28.7 -0.7L-26.6 0.0L-25.2 0.0L-23.1 -0.7L-21.7 -2.8L-21.0 -6.3L-21.0 -8.4L-21.7 -11.9L-23.1 -14.0L-25.2 -14.7L-26.6 -14.7M-15.4 -1.4L-16.1 -0.7L-15.4 0.0L-14.7 -0.7L-15.4 -1.4M-5.6 -14.7L-7.7 -14.0L-9.1 -11.9L-9.8 -8.4L-9.8 -6.3L-9.1 -2.8L-7.7 -0.7L-5.6 0.0L-4.2 0.0L-2.1 -0.7L-0.7 -2.8L0.0 -6.3L0.0 -8.4L-0.7 -11.9L-2.1 -14.0L-4.2 -14.7L-5.6 -14.7" stroke="#fff" stroke-width="1.85" fill="none" stroke-linejoin="round" stroke-linecap="square" /><path transform="translate(519.0 547.3)" d="M-26.6 -14.7L-28.7 -14.0L-30.1 -11.9L-30.8 -8.4L-30.8 -6.3L-30.1 -2.8L-28.7 -0.7L-26.6 0.0L-25.2 0.0L-23.1 -0.7L-21.7 -2.8L-21.0 -6.3L-21.0 -8.4L-21.7 -11.9L-23.1 -14.0L-25.2 -14.7L-26.6 -14.7M-15.4 -1.4L-16.1 -0.7L-15.4 0.0L-14.7 -0.7L-15.4 -1.4M-1.4 -14.7L-8.4 -14.7L-9.1 -8.4L-8.4 -9.1L-6.3 -9.8L-4.2 -9.8L-2.1 -9.1L-0.7 -7.7L0.0 -5.6L0.0 -4.2L-0.7 -2.1L-2.1 -0.7L-4.2 0.0L-6.3 0.0L-8.4 -0.7L-9.1 -1.4L-9.8 -2.8" stroke="#fff" stroke-width="1.85" fill="none" stroke-linejoin="round" stroke-linecap="square" /><path transform="translate(519.0 435.8)" d="M-28.7 -11.9L-27.3 -12.6L-25.2 -14.7L-25.2 0.0M-15.4 -1.4L-16.1 -0.7L-15.4 0.0L-14.7 -0.7L-15.4 -1.4M-5.6 -14.7L-7.7 -14.0L-9.1 -11.9L-9.8 -8.4L-9.8 -6.3L-9.1 -2.8L-7.7 -0.7L-5.6 0.0L-4.2 0.0L-2.1 -0.7L-0.7 -2.8L0.0 -6.3L0.0 -8.4L-0.7 -11.9L-2.1 -14.0L-4.2 -14.7L-5.6 -14.7" stroke="#fff" stroke-width="1.85" fill="none" stroke-linejoin="round" stroke-linecap="square" /><path transform="translate(519.0 331.0)" d="M-28.7 -11.9L-27.3 -12.6L-25.2 -14.7L-25.2 0.0M-15.4 -1.4L-16.1 -0.7L-15.4 0.0L-14.7 -0.7L-15.4 -1.4M-1.4 -14.7L-8.4 -14.7L-9.1 -8.4L-8.4 -9.1L-6.3 -9.8L-4.2 -9.8L-2.1 -9.1L-0.7 -7.7L0.0 -5.6L0.0 -4.2L-0.7 -2.1L-2.1 -0.7L-4.2 0.0L-6.3 0.0L-8.4 -0.7L-9.1 -1.4L-9.8 -2.8" stroke="#fff" stroke-width="1.85" fill="none" stroke-linejoin="round" stroke-linecap="square" /><path transform="translate(452.5 651.0) rotate(-90)" d="M-64.8 -17.1L-66.2 -15.8L-67.6 -13.7L-68.9 -11.0L-69.6 -7.5L-69.6 -4.8L-68.9 -1.4L-67.6 1.4L-66.2 3.4L-64.8 4.8M-51.1 -14.4L-60.7 0.0M-60.7 -14.4L-51.1 -14.4M-60.7 0.0L-51.1 0.0M-49.0 1.4L-38.1 1.4M-35.3 -9.6L-35.3 4.8M-35.3 -7.5L-34.0 -8.9L-32.6 -9.6L-30.5 -9.6L-29.2 -8.9L-27.8 -7.5L-27.1 -5.5L-27.1 -4.1L-27.8 -2.1L-29.2 -0.7L-30.5 0.0L-32.6 0.0L-34.0 -0.7L-35.3 -2.1M-19.6 -9.6L-20.9 -8.9L-22.3 -7.5L-23.0 -5.5L-23.0 -4.1L-22.3 -2.1L-20.9 -0.7L-19.6 0.0L-17.5 0.0L-16.1 -0.7L-14.7 -2.1L-14.1 -4.1L-14.1 -5.5L-14.7 -7.5L-16.1 -8.9L-17.5 -9.6L-19.6 -9.6M-2.4 -7.5L-3.1 -8.9L-5.1 -9.6L-7.2 -9.6L-9.3 -8.9L-9.9 -7.5L-9.3 -6.2L-7.9 -5.5L-4.5 -4.8L-3.1 -4.1L-2.4 -2.7L-2.4 -2.1L-3.1 -0.7L-5.1 0.0L-7.2 0.0L-9.3 -0.7L-9.9 -2.1M13.4 -14.4L13.4 0.0M13.4 -14.4L19.6 -14.4L21.6 -13.7L22.3 -13.0L23.0 -11.7L23.0 -10.3L22.3 -8.9L21.6 -8.2L19.6 -7.5L13.4 -7.5M18.2 -7.5L23.0 0.0M34.6 -7.5L34.0 -8.9L31.9 -9.6L29.8 -9.6L27.8 -8.9L27.1 -7.5L27.8 -6.2L29.2 -5.5L32.6 -4.8L34.0 -4.1L34.6 -2.7L34.6 -2.1L34.0 -0.7L31.9 0.0L29.8 0.0L27.8 -0.7L27.1 -2.1M39.4 -9.6L39.4 -2.7L40.1 -0.7L41.5 0.0L43.6 0.0L44.9 -0.7L47.0 -2.7M47.0 -9.6L47.0 0.0M52.5 -9.6L52.5 0.0M52.5 -6.9L54.5 -8.9L55.9 -9.6L58.0 -9.6L59.3 -8.9L60.0 -6.9L60.0 0.0M64.8 -17.1L66.2 -15.8L67.6 -13.7L68.9 -11.0L69.6 -7.5L69.6 -4.8L68.9 -1.4L67.6 1.4L66.2 3.4L64.8 4.8" stroke="#fff" stroke-width="1.85" fill="none" stroke-linejoin="round" stroke-linecap="square" /></svg></div></div><div class="win" style="left:0.0px;top:0.0px;width:682.0px;height:141.5px;overflow:visible"><div class="tb" style="width:682px;height:30px;border-radius:0px 0px 0 0"><span class="circ" style="left:-2.2px;top:7.4px"></span><span class="circ" style="left:22.2px;top:7.4px"></span><span class="circ" style="left:48.0px;top:7.4px"></span><svg class="xi" style="left:278.5px;top:6.5px" width="18" height="18" viewBox="0 0 18 18"><rect x="0.5" y="0.5" width="17" height="17" rx="1.5" fill="#f3f3f3" stroke="#c2c2c2"/><path d="M3.6 3.2L13.6 15.2" stroke="#7d7d7d" stroke-width="2.3" fill="none"/><path d="M14 3.2L4.2 15.2" stroke="#b4b4b4" stroke-width="1.1" fill="none"/></svg><span class="tt" style="left:306.0px;line-height:29.4px;letter-spacing:0.3px">FORWARD</span></div><div class="frm" style="left:-2px;top:31.5px;width:681px;height:52.5px"></div><div class="frm" style="left:-2px;top:88px;width:665px;height:52px"></div><div class="mbtn" style="left:1.0px;top:43.0px;width:54.5px;height:30.5px"><span class="t" style="left:9.4px;top:3.9px;">Data</span></div><div class="mbtn" style="left:64.0px;top:43.0px;width:69.5px;height:30.5px"><span class="t" style="left:9.3px;top:3.9px;">Models</span></div><div class="mbtn" style="left:141.5px;top:43.0px;width:108.5px;height:30.5px"><span class="t" style="left:9.8px;top:3.9px;">Observables</span></div><div class="mbtn" style="left:257.0px;top:43.0px;width:179.0px;height:30.5px"><span class="t" style="left:10.8px;top:3.9px;">Physical Diagnostics</span></div><div class="btn" style="left:523.5px;top:43.5px;width:70.5px;height:29.5px"><span class="t" style="left:2.2px;top:3.4px;">Calendar</span></div><div class="btn" style="left:603.5px;top:43.5px;width:63.0px;height:29.5px"><span class="t" style="left:2.3px;top:3.4px;">FORWARD</span></div><div class="btn" style="left:1.5px;top:100.5px;width:117.0px;height:25.0px"><span class="t" style="left:2.6px;top:1.2px;">Gather Windows</span></div><div class="btn" style="left:127.5px;top:100.5px;width:56.0px;height:25.0px"><span class="t" style="left:2.6px;top:1.2px;">Output</span></div><div class="btn" style="left:193.0px;top:100.5px;width:109.0px;height:25.0px"><span class="t" style="left:2.4px;top:1.2px;">Print Command</span></div><div class="btn" style="left:312.0px;top:100.5px;width:47.0px;height:25.0px"><span class="t" style="left:1.9px;top:1.2px;">Reset</span></div><div class="btn" style="left:369.0px;top:100.5px;width:39.5px;height:25.0px"><span class="t" style="left:1.9px;top:1.2px;">Quit</span></div><div class="btn" style="left:418.5px;top:100.5px;width:47.5px;height:25.0px"><span class="t" style="left:2.4px;top:1.2px;">Reset</span></div><div class="btn" style="left:522.4px;top:100.5px;width:39.6px;height:25.0px"><span class="t" style="left:2.0px;top:1.2px;">SAVE</span></div><div class="btn" style="left:579.4px;top:100.5px;width:70.6px;height:25.0px"><span class="t" style="left:2.3px;top:1.2px;">TOP HELP</span></div><svg style="position:absolute;right:0;bottom:0" width="18" height="18" viewBox="0 0 18 18"><rect width="18" height="18" fill="#fff"/><path d="M5 17L17 5M9 17L17 9M13 17L17 13" stroke="#8a8a8a" stroke-width="1" fill="none"/></svg></div><div style="position:absolute;left:433px;top:43.5px;width:83px;height:648px;z-index:50"><div class="btn" style="left:0;top:0;width:83px;height:648px;border-color:#e9e9e9 #6c6c6c #6c6c6c #e9e9e9;border-width:2.5px"></div><div class="btn" style="left:3px;top:5px;width:78px;height:25px;border-width:2.5px"></div><span class="t" style="left:7.0px;top:8.5px;">dens</span><span class="t" style="left:7.0px;top:35.3px;">temp</span><span class="t" style="left:7.0px;top:62.1px;">pres</span><span class="t" style="left:7.0px;top:88.8px;">ptot</span><span class="t" style="left:7.0px;top:115.6px;">vx</span><span class="t" style="left:7.0px;top:142.4px;">vy</span><span class="t" style="left:7.0px;top:169.2px;">vz</span><span class="t" style="left:7.0px;top:196.0px;">vr</span><span class="t" style="left:7.0px;top:222.7px;">vth</span><span class="t" style="left:7.0px;top:249.5px;">vph</span><span class="t" style="left:7.0px;top:276.3px;">br</span><span class="t" style="left:7.0px;top:303.1px;">bth</span><span class="t" style="left:7.0px;top:329.9px;">bph</span><span class="t" style="left:7.0px;top:356.6px;">bx</span><span class="t" style="left:7.0px;top:383.4px;">by</span><span class="t" style="left:7.0px;top:410.2px;">bz</span><span class="t" style="left:7.0px;top:437.0px;">bmag</span><span class="t" style="left:7.0px;top:463.8px;">bpos</span><span class="t" style="left:7.0px;top:490.5px;">bxdivbmag</span><span class="t" style="left:7.0px;top:517.3px;">beta</span><span class="t" style="left:7.0px;top:544.1px;">ninst</span><span class="t" style="left:7.0px;top:570.9px;">r</span><span class="t" style="left:7.0px;top:597.7px;">theta</span><span class="t" style="left:7.0px;top:624.4px;">phi</span></div><div class="win" style="left:746.0px;top:9.0px;width:455.0px;height:118.5px;border-radius:5px 5px 0 0"><div class="tb" style="width:455px;height:28px;border-radius:5px 5px 0 0"><span class="circ" style="left:11.0px;top:6.4px"></span><span class="circ" style="left:36.0px;top:6.4px"></span><span class="circ" style="left:62.0px;top:6.4px"></span><svg class="xi" style="left:196.0px;top:5.5px" width="18" height="18" viewBox="0 0 18 18"><rect x="0.5" y="0.5" width="17" height="17" rx="1.5" fill="#f3f3f3" stroke="#c2c2c2"/><path d="M3.6 3.2L13.6 15.2" stroke="#7d7d7d" stroke-width="2.3" fill="none"/><path d="M14 3.2L4.2 15.2" stroke="#b4b4b4" stroke-width="1.1" fill="none"/></svg><span class="tt" style="left:222.5px;line-height:29px;letter-spacing:1.3px">Date</span></div><div class="fld" style="left:10.0px;top:38.5px;width:247.5px;height:33.5px"><span class="cur" style="left:3.7px;top:7.6px"></span><span class="t" style="left:5.9px;top:6.4px;">Date i.e.: 2<span class="z">O</span>1<span class="z">O</span>−<span class="z">O</span>8−11T<span class="z">O</span><span class="z">O</span>:<span class="z">O</span><span class="z">O</span>:<span class="z">O</span><span class="z">O</span></span></div><div class="fld" style="left:274.0px;top:38.5px;width:171.0px;height:33.5px"><span class="cur" style="left:4.7px;top:7.6px"></span><span class="t" style="left:6.9px;top:6.4px;">2<span class="z">O</span>12−<span class="z">O</span>1−<span class="z">O</span>4T18:32:32</span></div><div class="btn" style="left:10.0px;top:82.0px;width:247.5px;height:26.0px"><span class="t" style="left:102.1px;top:1.7px;">Close</span></div><div class="btn" style="left:274.0px;top:82.0px;width:171.0px;height:26.0px"><span class="t" style="left:41.0px;top:1.7px;">Change Date</span></div><svg style="position:absolute;right:0;bottom:0" width="18" height="18" viewBox="0 0 18 18"><rect width="18" height="18" fill="#fff"/><path d="M5 17L17 5M9 17L17 9M13 17L17 13" stroke="#8a8a8a" stroke-width="1" fill="none"/></svg></div><div class="win" style="left:1334.0px;top:11.0px;width:452.0px;height:883.0px;border-radius:5px 0 0 0"><div class="tb" style="width:440px;height:28.5px;border-radius:5px 5px 0 0"><span class="circ" style="left:11.0px;top:6.7px"></span><span class="circ" style="left:36.5px;top:6.7px"></span><span class="circ" style="left:62.0px;top:6.7px"></span><svg class="xi" style="left:285.0px;top:5.8px" width="18" height="18" viewBox="0 0 18 18"><rect x="0.5" y="0.5" width="17" height="17" rx="1.5" fill="#f3f3f3" stroke="#c2c2c2"/><path d="M3.6 3.2L13.6 15.2" stroke="#7d7d7d" stroke-width="2.3" fill="none"/><path d="M14 3.2L4.2 15.2" stroke="#b4b4b4" stroke-width="1.1" fill="none"/></svg><span class="tt" style="left:311.0px;line-height:30.3px;letter-spacing:1.0px">Forward Model</span></div><div class="frm" style="left:0;top:28.5px;width:470px;height:854.5px;border-width:2px;border-color:#6a6a6a #fff #fff #6a6a6a"></div><div style="position:absolute;left:2px;top:30.5px;width:1.3px;height:851px;background:#d6d6d6"></div><div style="position:absolute;left:6.5px;top:760.5px;width:460px;height:1.6px;background:#6c6c6c"></div><div class="btn" style="left:9.5px;top:38.0px;width:101.0px;height:26.0px"><span class="t" style="left:2.2px;top:1.7px;">OPTIONS HELP</span></div><div class="tab sel" style="left:6.5px;top:70.8px;width:80.5px;height:27.2px"><span class="t" style="left:3.2px;top:3.2px;">LOS−noint</span><svg style="position:absolute;left:71.5px;top:-4px;overflow:visible" width="8" height="10"><path d="M6.3 8.5V5.2L2.2 0.8" stroke="#6c6c6c" stroke-width="2" fill="none"/></svg></div><div class="tab" style="left:88.0px;top:70.8px;width:65.0px;height:25.7px"><span class="t" style="left:3.2px;top:3.2px;">FOV−POS</span><svg style="position:absolute;left:56.0px;top:-4px;overflow:visible" width="8" height="10"><path d="M6.3 8.5V5.2L2.2 0.8" stroke="#6c6c6c" stroke-width="2" fill="none"/></svg></div><div class="tab" style="left:154.5px;top:70.8px;width:42.0px;height:25.7px"><span class="t" style="left:3.2px;top:3.2px;">Plot</span><svg style="position:absolute;left:33.0px;top:-4px;overflow:visible" width="8" height="10"><path d="M6.3 8.5V5.2L2.2 0.8" stroke="#6c6c6c" stroke-width="2" fill="none"/></svg></div><div class="tab" style="left:198.0px;top:70.8px;width:57.0px;height:25.7px"><span class="t" style="left:3.2px;top:3.2px;">DOCONT</span><svg style="position:absolute;left:48.0px;top:-4px;overflow:visible" width="8" height="10"><path d="M6.3 8.5V5.2L2.2 0.8" stroke="#6c6c6c" stroke-width="2" fill="none"/></svg></div><div class="tab" style="left:256.5px;top:70.8px;width:88.0px;height:25.7px"><span class="t" style="left:3.2px;top:3.2px;">FIELDLINES</span><svg style="position:absolute;left:79.0px;top:-4px;overflow:visible" width="8" height="10"><path d="M6.3 8.5V5.2L2.2 0.8" stroke="#6c6c6c" stroke-width="2" fill="none"/></svg></div><div style="position:absolute;left:87px;top:96.5px;width:360px;height:2px;background:#e9e9e9"></div><div style="position:absolute;left:6.5px;top:96.5px;width:2px;height:664px;background:#e9e9e9"></div><div class="fld" style="left:19.0px;top:108.5px;width:133.0px;height:34.3px"><span class="cur" style="left:3.7px;top:8.0px"></span><span class="t" style="left:5.9px;top:6.9px;">CMER:</span></div><div class="fld" style="left:168.0px;top:108.5px;width:132.5px;height:34.3px"><span class="cur" style="left:3.7px;top:8.0px"></span><span class="t" style="left:5.9px;top:6.9px;">68.<span class="z">O</span>7<span class="z">O</span>978</span></div><div class="fld" style="left:19.0px;top:151.8px;width:133.0px;height:34.3px"><span class="cur" style="left:3.7px;top:8.0px"></span><span class="t" style="left:5.9px;top:6.9px;">BANG:</span></div><div class="fld" style="left:168.0px;top:151.8px;width:132.5px;height:34.3px"><span class="cur" style="left:3.7px;top:8.0px"></span><span class="t" style="left:5.9px;top:6.9px;">−3.382<span class="z">O</span>152</span></div><div class="fld" style="left:19.0px;top:195.1px;width:133.0px;height:34.3px"><span class="cur" style="left:3.7px;top:8.0px"></span><span class="t" style="left:5.9px;top:6.9px;">OCCULT:</span></div><div class="fld" style="left:168.0px;top:195.1px;width:132.5px;height:34.3px"><span class="cur" style="left:3.7px;top:8.0px"></span><span class="t" style="left:5.9px;top:6.9px;"><span class="z">O</span>.<span class="z">O</span><span class="z">O</span><span class="z">O</span><span class="z">O</span><span class="z">O</span><span class="z">O</span><span class="z">O</span></span></div><div class="fld" style="left:19.0px;top:238.4px;width:133.0px;height:34.3px"><span class="cur" style="left:3.7px;top:7.9px"></span><span class="t" style="left:5.9px;top:6.8px;">UPOCCULT:</span></div><div class="fld" style="left:168.0px;top:238.4px;width:132.5px;height:34.3px"><span class="cur" style="left:3.7px;top:7.9px"></span><span class="t" style="left:5.9px;top:6.8px;">1<span class="z">O</span><span class="z">O</span><span class="z">O</span>.<span class="z">O</span><span class="z">O</span><span class="z">O</span><span class="z">O</span></span></div><div class="fld" style="left:19.0px;top:281.8px;width:133.0px;height:34.3px"><span class="cur" style="left:3.7px;top:7.9px"></span><span class="t" style="left:5.9px;top:6.8px;">DODISK:</span></div><div class="fld" style="left:168.0px;top:281.8px;width:132.5px;height:34.3px"><span class="cur" style="left:3.7px;top:7.9px"></span><span class="t" style="left:5.9px;top:6.8px;">1.<span class="z">O</span>1<span class="z">O</span><span class="z">O</span><span class="z">O</span><span class="z">O</span><span class="z">O</span></span></div><div class="fld" style="left:19.0px;top:325.1px;width:133.0px;height:34.3px"><span class="cur" style="left:3.7px;top:7.9px"></span><span class="t" style="left:5.9px;top:6.8px;">PHIO:</span></div><div class="fld" style="left:168.0px;top:325.1px;width:132.5px;height:34.3px"><span class="cur" style="left:3.7px;top:7.9px"></span><span class="t" style="left:5.9px;top:6.8px;"><span class="z">O</span>.<span class="z">O</span><span class="z">O</span><span class="z">O</span><span class="z">O</span><span class="z">O</span><span class="z">O</span><span class="z">O</span></span></div></div><div class="win" style="left:0.0px;top:293.5px;width:356.0px;height:704.5px;border-radius:5px 5px 0 0"><div class="tb" style="width:356px;height:28px;border-radius:5px 5px 0 0"><span class="circ" style="left:8.0px;top:6.4px"></span><span class="circ" style="left:33.5px;top:6.4px"></span><span class="circ" style="left:59.0px;top:6.4px"></span><svg class="xi" style="left:83.5px;top:5.5px" width="18" height="18" viewBox="0 0 18 18"><rect x="0.5" y="0.5" width="17" height="17" rx="1.5" fill="#f3f3f3" stroke="#c2c2c2"/><path d="M3.6 3.2L13.6 15.2" stroke="#7d7d7d" stroke-width="2.3" fill="none"/><path d="M14 3.2L4.2 15.2" stroke="#b4b4b4" stroke-width="1.1" fill="none"/></svg><span class="tt" style="left:110.0px;line-height:29px;letter-spacing:0.96px">Model PSIMAS Parame...</span></div><div style="position:absolute;left:0;top:28px;width:350px;height:645px;overflow:hidden"><div class="frm" style="left:0;top:0.5px;width:351px;height:644px;border-width:2px"></div><div class="btn" style="left:120.5px;top:6.5px;width:85.5px;height:24.5px"><span class="t" style="left:2.1px;top:0.9px;">MODEL HELP</span></div><div class="fld" style="left:12.5px;top:44.4px;width:132.5px;height:34.3px"><span class="cur" style="left:3.2px;top:7.9px"></span><span class="t" style="left:5.4px;top:6.8px;">BOUT:</span></div><div class="fld" style="left:162.0px;top:44.4px;width:254.0px;height:34.3px"><span class="cur" style="left:3.7px;top:7.9px"></span><span class="t" style="left:5.9px;top:6.8px;">1.<span class="z">O</span><span class="z">O</span><span class="z">O</span><span class="z">O</span><span class="z">O</span><span class="z">O</span><span class="z">O</span></span></div><div class="fld" style="left:12.5px;top:87.8px;width:132.5px;height:34.3px"><span class="cur" style="left:3.2px;top:7.9px"></span><span class="t" style="left:5.4px;top:6.8px;">BO:</span></div><div class="fld" style="left:162.0px;top:87.8px;width:254.0px;height:34.3px"><span class="cur" style="left:3.7px;top:7.9px"></span><span class="t" style="left:5.9px;top:6.8px;">1<span class="z">O</span>.<span class="z">O</span><span class="z">O</span><span class="z">O</span><span class="z">O</span><span class="z">O</span><span class="z">O</span></span></div><div class="fld" style="left:12.5px;top:131.2px;width:132.5px;height:34.3px"><span class="cur" style="left:3.2px;top:7.9px"></span><span class="t" style="left:5.4px;top:6.8px;">HYDRO:</span></div><div class="fld" style="left:162.0px;top:131.2px;width:254.0px;height:34.3px"><span class="cur" style="left:3.7px;top:7.9px"></span><span class="t" style="left:5.9px;top:6.8px;"><span class="z">O</span>.<span class="z">O</span><span class="z">O</span><span class="z">O</span><span class="z">O</span><span class="z">O</span><span class="z">O</span><span class="z">O</span></span></div><div class="fld" style="left:12.5px;top:174.6px;width:132.5px;height:34.3px"><span class="cur" style="left:3.2px;top:7.9px"></span><span class="t" style="left:5.4px;top:6.8px;">DENSPROF:</span></div><div class="fld" style="left:162.0px;top:174.6px;width:254.0px;height:34.3px"><span class="cur" style="left:3.7px;top:7.9px"></span><span class="t" style="left:5.9px;top:6.8px;">5.<span class="z">O</span><span class="z">O</span><span class="z">O</span><span class="z">O</span><span class="z">O</span><span class="z">O</span><span class="z">O</span>e+<span class="z">O</span>8</span></div><div class="fld" style="left:12.5px;top:218.0px;width:132.5px;height:34.3px"><span class="cur" style="left:3.2px;top:7.9px"></span><span class="t" style="left:5.4px;top:6.8px;">TE:</span></div><div class="fld" style="left:162.0px;top:218.0px;width:254.0px;height:34.3px"><span class="cur" style="left:3.7px;top:7.9px"></span><span class="t" style="left:5.9px;top:6.8px;">15<span class="z">O</span><span class="z">O</span><span class="z">O</span><span class="z">O</span><span class="z">O</span>.<span class="z">O</span></span></div><div class="fld" style="left:12.5px;top:261.4px;width:132.5px;height:34.3px"><span class="cur" style="left:3.2px;top:7.9px"></span><span class="t" style="left:5.4px;top:6.8px;">VELIMPOSE:</span></div><div class="fld" style="left:162.0px;top:261.4px;width:254.0px;height:34.3px"><span class="cur" style="left:3.7px;top:7.9px"></span><span class="t" style="left:5.9px;top:6.8px;"><span class="z">O</span>.<span class="z">O</span><span class="z">O</span><span class="z">O</span><span class="z">O</span><span class="z">O</span><span class="z">O</span><span class="z">O</span></span></div><div class="fld" style="left:12.5px;top:304.8px;width:132.5px;height:34.3px"><span class="cur" style="left:3.2px;top:7.9px"></span><span class="t" style="left:5.4px;top:6.8px;">FLDUSE:</span></div><div class="fld" style="left:162.0px;top:304.8px;width:254.0px;height:34.3px"><span class="cur" style="left:3.7px;top:7.9px"></span><span class="t" style="left:5.9px;top:6.8px;">BMAG</span></div><div class="fld" style="left:12.5px;top:348.1px;width:132.5px;height:34.3px"><span class="cur" style="left:3.2px;top:7.9px"></span><span class="t" style="left:5.4px;top:6.8px;">DELTAR:</span></div><div class="fld" style="left:162.0px;top:348.1px;width:254.0px;height:34.3px"><span class="cur" style="left:3.7px;top:7.9px"></span><span class="t" style="left:5.9px;top:6.8px;"><span class="z">O</span>.<span class="z">O</span>1<span class="z">O</span><span class="z">O</span><span class="z">O</span><span class="z">O</span><span class="z">O</span><span class="z">O</span><span class="z">O</span></span></div><div class="btn" style="left:166.5px;top:395.5px;width:249.5px;height:25.5px"><span class="t" style="left:1.9px;top:1.4px;">CUBENAME:/users/sgibson/</span></div></div><div style="position:absolute;left:349.5px;top:29px;width:2px;height:643px;background:#e4e4e4"></div><div style="position:absolute;left:0;top:685px;width:337px;height:17px;background:#a9a9a9;border:1px solid;border-color:#6c6c6c #e4e4e4 #e4e4e4 #6c6c6c"></div><div class="btn" style="left:18.5px;top:686px;width:112px;height:15px;border-width:1.5px"></div><svg style="position:absolute;left:1.5px;top:686px" width="16" height="15" viewBox="0 0 16 15"><path d="M15 1L1 7.5L15 14Z" fill="#c0c0c0"/><path d="M15 1L1 7.5" stroke="#eee" stroke-width="1.5" fill="none"/><path d="M1 7.5L15 14V1" stroke="#6c6c6c" stroke-width="1.5" fill="none"/></svg><svg style="position:absolute;right:0;bottom:0" width="18" height="18" viewBox="0 0 18 18"><rect width="18" height="18" fill="#fff"/><path d="M5 17L17 5M9 17L17 9M13 17L17 13" stroke="#8a8a8a" stroke-width="1" fill="none"/></svg></div></div></body></html>
